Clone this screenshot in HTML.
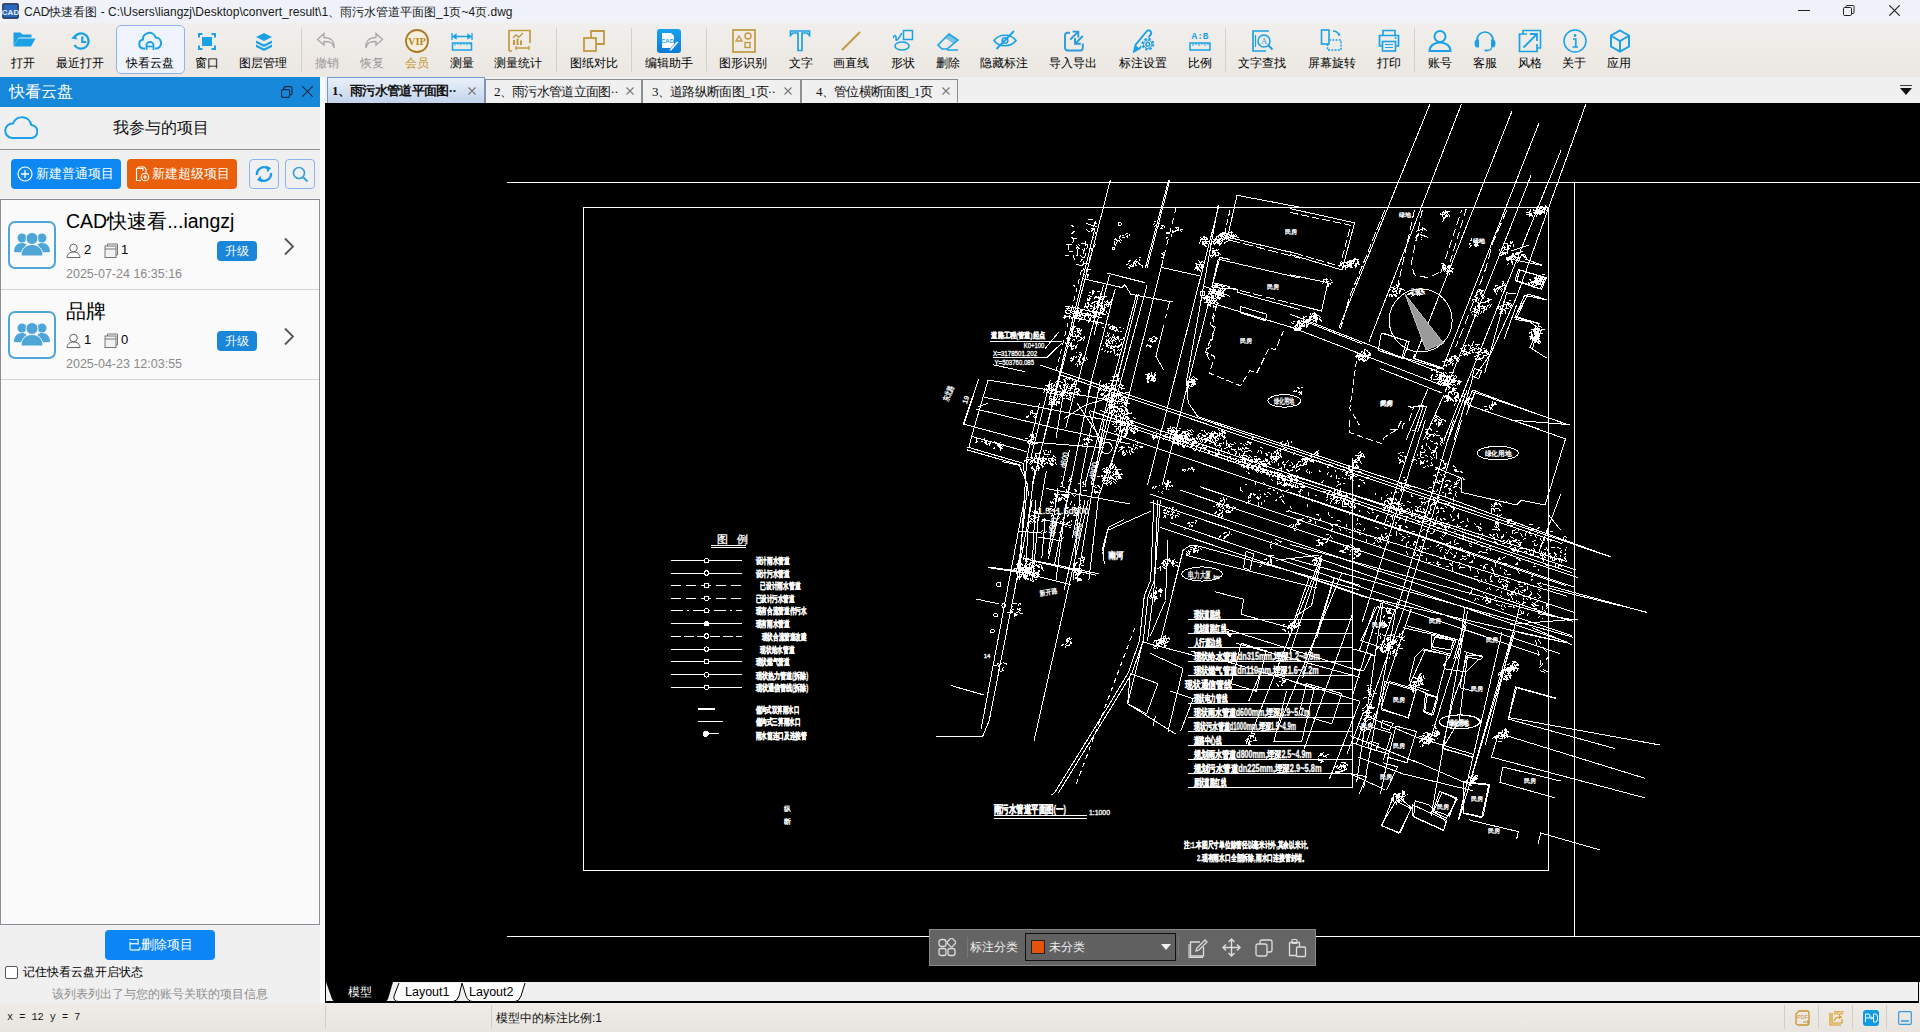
<!DOCTYPE html>
<html><head><meta charset="utf-8"><style>
*{margin:0;padding:0;box-sizing:border-box}
html,body{width:1920px;height:1032px;overflow:hidden;background:#f0f0f0;font-family:"Liberation Sans",sans-serif;color:#000}
.a{position:absolute}
#title{left:0;top:0;width:1920px;height:23px;background:#eff3f9}
#tb{left:0;top:23px;width:1920px;height:54px;background:linear-gradient(#f1efec,#ebe7e2)}
.ic{position:absolute;top:29px;width:24px;height:24px}
.lb{position:absolute;top:56px;width:100px;margin-left:-50px;text-align:center;font-size:12px;line-height:14px;white-space:nowrap;color:#000}
.sep{position:absolute;top:28px;width:1px;height:44px;background:#d3d0cc}
#lp{left:0;top:77px;width:320px;height:926px;background:#f0f0f0}
#lph{left:0;top:77px;width:320px;height:30px;background:#1787d9}
#strip{left:320px;top:77px;width:5px;height:926px;background:#f9f9f9}
#tabs{left:325px;top:77px;width:1595px;height:26px;background:#f0f0f0}
.tab{position:absolute;height:24px;border:1px solid #8e8e8e;border-bottom:none;background:#f0f0f0;font-size:13px;line-height:22px;white-space:nowrap;font-family:"Liberation Serif",serif;color:#111;letter-spacing:-0.7px}
#draw{left:325px;top:103px;width:1595px;height:879px;background:#000;overflow:hidden}
#lay{left:325px;top:982px;width:1595px;height:21px;background:#f0f0f0}
#sb{left:0;top:1003px;width:1920px;height:29px;background:linear-gradient(#efece8,#e8e4df)}
</style></head><body>

<div id="title" class="a">
  <svg class="a" style="left:2px;top:3px" width="17" height="16" viewBox="0 0 17 16"><rect x="0.5" y="0.5" width="16" height="15" rx="1.5" fill="#1d4d96" stroke="#4a4a4a"/><rect x="2" y="2" width="13" height="12" fill="#2b68bd"/><text x="8.5" y="11.5" font-size="8" font-weight="bold" fill="#e8f0ff" text-anchor="middle" font-family="Liberation Sans">CAD</text></svg>
  <div class="a" style="left:24px;top:5px;font-size:12px;line-height:15px;color:#1a1a1a;white-space:nowrap">CAD快速看图 - C:\Users\liangzj\Desktop\convert_result\1、雨污水管道平面图_1页~4页.dwg</div>
  <div class="a" style="left:1798px;top:10px;width:12px;height:1px;background:#222"></div>
  <svg class="a" style="left:1843px;top:5px" width="12" height="11" viewBox="0 0 12 11"><rect x="0.5" y="2.5" width="8" height="8" rx="1.2" fill="none" stroke="#222"/><path d="M3 2.5V1.5a1 1 0 0 1 1-1h6a1 1 0 0 1 1 1v6a1 1 0 0 1-1 1h-1.5" fill="none" stroke="#222"/></svg>
  <svg class="a" style="left:1889px;top:5px" width="11" height="11" viewBox="0 0 11 11"><path d="M0.3 0.3L10.7 10.7M10.7 0.3L0.3 10.7" stroke="#222" stroke-width="1.2"/></svg>
</div>
<div id="tb" class="a"></div>
<div class="a" style="left:116px;top:25px;width:69px;height:49px;border:1px solid #8fb3f2;border-radius:5px;background:#eef3fc"></div>
<div class="sep" style="left:301px"></div>
<div class="sep" style="left:556px"></div>
<div class="sep" style="left:631px"></div>
<div class="sep" style="left:706px"></div>
<div class="sep" style="left:1225px"></div>
<div class="sep" style="left:1414px"></div>
<svg class="ic" style="left:11.7px" viewBox="0 0 24 24"><path d="M1.5 3.5h7l2 2h9v3H6.5L1.5 17Z" fill="#1ba1e6"/><path d="M6 9.5h17.5l-4.5 8H1.5Z" fill="#1ba1e6"/></svg>
<div class="lb" style="left:23.3px;color:#000">打开</div>
<svg class="ic" style="left:68.5px" viewBox="0 0 24 24"><path d="M5.3 8.5A7.6 7.6 0 1 1 5.5 16" fill="none" stroke="#1ba1e6" stroke-width="2.2"/><path d="M2 9.5l4-3.5 2.5 4.5Z" fill="#1ba1e6"/><path d="M13.3 7.5v5.5h4" fill="none" stroke="#1ba1e6" stroke-width="2.2"/></svg>
<div class="lb" style="left:80.3px;color:#000">最近打开</div>
<svg class="ic" style="left:138.0px" viewBox="0 0 24 24"><path d="M7 19.5H5.5a4.5 4.5 0 0 1-.6-8.9A6.5 6.5 0 0 1 17.6 8.4 5.6 5.6 0 0 1 18.5 19.5H17" fill="none" stroke="#1ba1e6" stroke-width="2"/><path d="M8.5 21v-5a3.5 3 0 0 1 7 0v5" fill="none" stroke="#1ba1e6" stroke-width="1.8"/><path d="M8.5 17.5h7" stroke="#1ba1e6" stroke-width="1.6"/></svg>
<div class="lb" style="left:149.5px;color:#000">快看云盘</div>
<svg class="ic" style="left:195.0px" viewBox="0 0 24 24"><path d="M4 8.5V5h3.5M16.5 5H20v3.5M20 16.5V20h-3.5M7.5 20H4v-3.5" fill="none" stroke="#1ba1e6" stroke-width="2"/><rect x="7" y="8" width="10" height="9" fill="#1ba1e6"/></svg>
<div class="lb" style="left:206.8px;color:#000">窗口</div>
<svg class="ic" style="left:252.3px" viewBox="0 0 24 24"><path d="M12 4l8 4-8 4-8-4Z" fill="#1ba1e6"/><path d="M4 11.5l8 4 8-4v2.5l-8 4-8-4Z" fill="#1ba1e6"/><path d="M4 15.5l8 4 8-4V18l-8 4-8-4Z" fill="#1ba1e6"/></svg>
<div class="lb" style="left:263.3px;color:#000">图层管理</div>
<svg class="ic" style="left:314.5px" viewBox="0 0 24 24"><path d="M9 4.5L2.5 10.5 9 16v-3.5c5 0 9 .5 10 6.5 .8-7-3.5-10.5-10-10.5Z" fill="none" stroke="#a9a9a9" stroke-width="1.3"/></svg>
<div class="lb" style="left:326.7px;color:#9a9a9a">撤销</div>
<svg class="ic" style="left:360.5px" viewBox="0 0 24 24"><path d="M15 4.5l6.5 6-6.5 5.5v-3.5c-5 0-9 .5-10 6.5-.8-7 3.5-10.5 10-10.5Z" fill="none" stroke="#a9a9a9" stroke-width="1.3"/></svg>
<div class="lb" style="left:371.7px;color:#9a9a9a">恢复</div>
<svg class="ic" style="left:405.0px" viewBox="0 0 24 24"><circle cx="12" cy="12" r="11" fill="#f6efdc" stroke="#a97a28" stroke-width="1.8"/><text x="12" y="15.8" font-size="10.5" font-weight="bold" fill="#b8862a" text-anchor="middle" font-family="Liberation Serif" textLength="18" lengthAdjust="spacingAndGlyphs">VIP</text></svg>
<div class="lb" style="left:416.7px;color:#c8962e">会员</div>
<svg class="ic" style="left:450.0px" viewBox="0 0 24 24"><path d="M2 4v7M22 4v7M3 7.5h18M3 7.5l3-2v4ZM21 7.5l-3-2v4Z" fill="#1ba1e6" stroke="#1ba1e6" stroke-width="1.3"/><rect x="2.5" y="14" width="19" height="7" fill="none" stroke="#1ba1e6" stroke-width="1.5"/><path d="M5 14v2.5M8 14v2M11 14v2.5M14 14v2M17 14v2.5M20 14v2" stroke="#1ba1e6" stroke-width="1"/></svg>
<div class="lb" style="left:461.5px;color:#000">测量</div>
<svg class="ic" style="left:506.7px" viewBox="0 0 24 24"><path d="M2 22V1.5h21V14M2 22h3" fill="none" stroke="#c29a3e" stroke-width="1.7"/><path d="M6 9l3-3 3 2 4-4" fill="none" stroke="#c29a3e" stroke-width="1.4"/><path d="M6 11h2v5H6ZM9.5 9.5h2V16h-2ZM13 11.5h2V16h-2Z" fill="#c29a3e"/><path d="M9 17v4M22 17v4M9.5 19h12" stroke="#c29a3e" stroke-width="1.3"/></svg>
<div class="lb" style="left:518.3px;color:#000">测量统计</div>
<svg class="ic" style="left:582.0px" viewBox="0 0 24 24"><rect x="2" y="9" width="12" height="13" fill="none" stroke="#c29a3e" stroke-width="1.8"/><path d="M9 9V2h13v13h-8" fill="none" stroke="#c29a3e" stroke-width="1.8"/></svg>
<div class="lb" style="left:593.5px;color:#000">图纸对比</div>
<svg class="ic" style="left:656.7px" viewBox="0 0 24 24"><defs><linearGradient id="eg" x1="0" y1="0" x2="0" y2="1"><stop offset="0" stop-color="#1aa3ef"/><stop offset="1" stop-color="#0b7ad2"/></linearGradient></defs><rect x="0" y="0" width="24" height="24" rx="3" fill="url(#eg)"/><path d="M5 4h9l3 3v12H5Z" fill="#fff"/><text x="10.5" y="14" font-size="6" font-weight="bold" fill="#1ba1e6" text-anchor="middle" font-family="Liberation Sans">CAD</text><path d="M13 20l7-8 1.5 1.5-7 8-2.5 .5Z" fill="#fff" stroke="#0b7ad2" stroke-width=".6"/></svg>
<div class="lb" style="left:668.7px;color:#000">编辑助手</div>
<svg class="ic" style="left:732.0px" viewBox="0 0 24 24"><rect x="1" y="1" width="22" height="22" fill="none" stroke="#c29a3e" stroke-width="1.7"/><path d="M4 12l3-5 3 5Z" fill="none" stroke="#c29a3e" stroke-width="1.4"/><circle cx="16" cy="7" r="3" fill="none" stroke="#c29a3e" stroke-width="1.4"/><rect x="13" y="13.5" width="5" height="5" fill="none" stroke="#c29a3e" stroke-width="1.4"/></svg>
<div class="lb" style="left:743.2px;color:#000">图形识别</div>
<svg class="ic" style="left:789.2px" viewBox="0 0 24 24"><path d="M1.5 2h19v4.5l-2.5-2.5H13V21.5h-4V4H4L1.5 6.5Z" fill="none" stroke="#1ba1e6" stroke-width="1.7"/></svg>
<div class="lb" style="left:800.5px;color:#000">文字</div>
<svg class="ic" style="left:840.2px" viewBox="0 0 24 24"><path d="M2 21L20 3" stroke="#c29a3e" stroke-width="2"/></svg>
<div class="lb" style="left:851.3px;color:#000">画直线</div>
<svg class="ic" style="left:891.0px" viewBox="0 0 24 24"><path d="M2.5 9c0-3 2-3 2.5-1s-1 4 1 3 4-6 5-7" fill="none" stroke="#1ba1e6" stroke-width="1.5"/><rect x="12.5" y="1.5" width="9" height="9" fill="none" stroke="#1ba1e6" stroke-width="1.5"/><ellipse cx="11" cy="17" rx="7" ry="4" fill="none" stroke="#1ba1e6" stroke-width="1.6"/></svg>
<div class="lb" style="left:902.5px;color:#000">形状</div>
<svg class="ic" style="left:936.2px" viewBox="0 0 24 24"><path d="M2 16l11-11 9 6-11 9H6Z" fill="none" stroke="#1ba1e6" stroke-width="1.6"/><path d="M13 5l9 6-4 4-9-6Z" fill="#1ba1e6" opacity=".55"/><path d="M11 21h11" stroke="#1ba1e6" stroke-width="1.5"/></svg>
<div class="lb" style="left:947.5px;color:#000">删除</div>
<svg class="ic" style="left:993.0px" viewBox="0 0 24 24"><path d="M1 11.5c5-7 17-7 22 0-5 7-17 7-22 0Z" fill="none" stroke="#1ba1e6" stroke-width="1.7"/><circle cx="12" cy="11.5" r="2.8" fill="none" stroke="#1ba1e6" stroke-width="1.6"/><path d="M3.5 20L21 2" stroke="#1ba1e6" stroke-width="1.8"/></svg>
<div class="lb" style="left:1004.3px;color:#000">隐藏标注</div>
<svg class="ic" style="left:1062.0px" viewBox="0 0 24 24"><path d="M8 3.8H5.5A2.5 2.5 0 0 0 3 6.3V19a2.5 2.5 0 0 0 2.5 2.5h12.8a2.5 2.5 0 0 0 2.5-2.5v-4.5" fill="none" stroke="#2b9bd9" stroke-width="1.9"/><path d="M8.3 10.5L16 2.8M10.5 2.6h5.8v5.8M20.8 7L13 14.8M13 9v5.8h5.8" fill="none" stroke="#2b9bd9" stroke-width="1.9"/></svg>
<div class="lb" style="left:1073.3px;color:#000">导入导出</div>
<svg class="ic" style="left:1131.5px" viewBox="0 0 24 24"><path d="M2 22.5L3.5 16 14.5 2.5a2.6 2.6 0 0 1 4.2 3.2L7.5 19.5Z" fill="none" stroke="#1ba1e6" stroke-width="1.9"/><path d="M2 22.5L3.5 16 7.5 19.5Z" fill="#1ba1e6"/><circle cx="15.8" cy="15.2" r="7" fill="#ece8e3"/><circle cx="15.8" cy="15.2" r="5.2" fill="none" stroke="#1ba1e6" stroke-width="2.4" stroke-dasharray="2.2 1.9"/><circle cx="15.8" cy="15.2" r="4.2" fill="none" stroke="#1ba1e6" stroke-width="1"/><circle cx="15.8" cy="15.2" r="1.9" fill="none" stroke="#1ba1e6" stroke-width="1.4"/></svg>
<div class="lb" style="left:1143.0px;color:#000">标注设置</div>
<svg class="ic" style="left:1188.0px" viewBox="0 0 24 24"><text x="12" y="10" font-size="9.5" font-weight="bold" fill="#1ba1e6" text-anchor="middle" font-family="Liberation Mono">A:B</text><rect x="2" y="14" width="20" height="7" fill="none" stroke="#1ba1e6" stroke-width="1.5"/><path d="M5 14v3M8 14v2M11 14v3M14 14v2M17 14v3M20 14v2" stroke="#1ba1e6" stroke-width="1"/></svg>
<div class="lb" style="left:1200.0px;color:#000">比例</div>
<svg class="ic" style="left:1251.0px" viewBox="0 0 24 24"><path d="M18 2H2v20h13" fill="none" stroke="#1ba1e6" stroke-width="1.7"/><path d="M4.5 6v12" stroke="#1ba1e6" stroke-width="1.2"/><circle cx="13" cy="12" r="6" fill="none" stroke="#1ba1e6" stroke-width="1.6"/><path d="M17 16l4.5 4.5" stroke="#1ba1e6" stroke-width="2"/><text x="13" y="15" font-size="8.5" fill="#1ba1e6" text-anchor="middle" font-family="Liberation Serif">A</text></svg>
<div class="lb" style="left:1262.3px;color:#000">文字查找</div>
<svg class="ic" style="left:1320.0px" viewBox="0 0 24 24"><rect x="1.5" y="1" width="7.5" height="14" fill="none" stroke="#1ba1e6" stroke-width="1.6"/><path d="M9 11h12v10H7.5v-6" fill="none" stroke="#1ba1e6" stroke-width="1.5" stroke-dasharray="2 1.3"/><path d="M13 2c3 0 5 1.5 6 4" fill="none" stroke="#1ba1e6" stroke-width="1.3"/><path d="M17.5 6.5h3l-1-3Z" fill="#1ba1e6"/></svg>
<div class="lb" style="left:1331.5px;color:#000">屏幕旋转</div>
<svg class="ic" style="left:1377.0px" viewBox="0 0 24 24"><path d="M6 6V1.5h12V6" fill="none" stroke="#1ba1e6" stroke-width="1.6"/><path d="M5.5 17H2.5V6.5h19V17h-3" fill="none" stroke="#1ba1e6" stroke-width="1.7"/><rect x="5.5" y="12.5" width="13" height="9.5" fill="none" stroke="#1ba1e6" stroke-width="1.6"/><path d="M8 15.5h8M8 18.5h8" stroke="#1ba1e6" stroke-width="1.2"/><circle cx="18.5" cy="9" r=".9" fill="#1ba1e6"/></svg>
<div class="lb" style="left:1388.7px;color:#000">打印</div>
<svg class="ic" style="left:1428.0px" viewBox="0 0 24 24"><circle cx="12" cy="7.5" r="5.5" fill="none" stroke="#1ba1e6" stroke-width="2"/><path d="M1.5 22c0-5 4.5-8.5 10.5-8.5s10.5 3.5 10.5 8.5Z" fill="none" stroke="#1ba1e6" stroke-width="2"/></svg>
<div class="lb" style="left:1439.5px;color:#000">账号</div>
<svg class="ic" style="left:1473.0px" viewBox="0 0 24 24"><path d="M4 14v-3a8 8 0 0 1 16 0v3" fill="none" stroke="#1ba1e6" stroke-width="1.7"/><path d="M4.5 10.5h1.5v8H4.5A3 4 0 0 1 4.5 10.5ZM19.5 10.5H18v8h1.5a3 4 0 0 0 0-8Z" fill="#1ba1e6"/><path d="M18.5 18.5c0 2-2 3-5 3" fill="none" stroke="#1ba1e6" stroke-width="1.3"/><rect x="11.5" y="20.5" width="3" height="2" rx=".8" fill="#1ba1e6"/></svg>
<div class="lb" style="left:1484.7px;color:#000">客服</div>
<svg class="ic" style="left:1518.0px" viewBox="0 0 24 24"><path d="M5 5V1.5h17.5V19H19" fill="none" stroke="#1ba1e6" stroke-width="1.6"/><path d="M9 5H1.5v17.5H19V15" fill="none" stroke="#1ba1e6" stroke-width="1.7"/><path d="M5.5 18.5L18.5 5.5M12 5h7v7" fill="none" stroke="#1ba1e6" stroke-width="1.8"/></svg>
<div class="lb" style="left:1529.7px;color:#000">风格</div>
<svg class="ic" style="left:1563.0px" viewBox="0 0 24 24"><circle cx="12" cy="12" r="11" fill="none" stroke="#1ba1e6" stroke-width="1.5"/><circle cx="12" cy="6.5" r="1.4" fill="#1ba1e6"/><path d="M10 10h2.8v8M9.5 18h5.5" fill="none" stroke="#1ba1e6" stroke-width="1.7"/></svg>
<div class="lb" style="left:1574.3px;color:#000">关于</div>
<svg class="ic" style="left:1608.0px" viewBox="0 0 24 24"><path d="M12 1.5l9 5v11l-9 5-9-5v-11Z" fill="none" stroke="#1ba1e6" stroke-width="2"/><path d="M3.5 7L12 12l8.5-5M12 12v10" fill="none" stroke="#1ba1e6" stroke-width="2"/></svg>
<div class="lb" style="left:1619.3px;color:#000">应用</div>
<div id="lp" class="a"></div>
<div id="lph" class="a">
  <div class="a" style="left:9px;top:5px;font-size:16px;line-height:20px;color:#fff;white-space:nowrap">快看云盘</div>
  <svg class="a" style="left:281px;top:9px" width="12" height="12" viewBox="0 0 12 12"><rect x="0.6" y="3.6" width="8" height="7.8" rx="1.2" fill="none" stroke="#0c2b47" stroke-width="1.1"/><path d="M3 3.5V1.8a1.2 1.2 0 0 1 1.2-1.2h5.6a1.2 1.2 0 0 1 1.2 1.2v5.6a1.2 1.2 0 0 1-1.2 1.2h-1.2" fill="none" stroke="#0c2b47" stroke-width="1.1"/></svg>
  <svg class="a" style="left:302px;top:9px" width="11" height="11" viewBox="0 0 11 11"><path d="M0.3 0.3L10.7 10.7M10.7 0.3L0.3 10.7" stroke="#0c2b47" stroke-width="1.1"/></svg>
</div>
<svg class="a" style="left:4px;top:114px" width="34" height="26" viewBox="0 0 34 26"><path d="M8 24h18.5a6.5 6.5 0 0 0 .8-13A9.5 9.5 0 0 0 9 9.5 7.2 7.2 0 0 0 8 24Z" fill="none" stroke="#1ba1e6" stroke-width="2"/></svg>
<div class="a" style="left:0;top:118px;width:322px;text-align:center;font-size:16px;line-height:20px;color:#111;white-space:nowrap">我参与的项目</div>
<div class="a" style="left:0;top:149px;width:320px;height:1px;background:#8f8f8f"></div>
<div class="a" style="left:11px;top:159px;width:110px;height:30px;border-radius:4px;background:#0d87f2"></div>
<svg class="a" style="left:17px;top:166px" width="16" height="16" viewBox="0 0 16 16"><circle cx="8" cy="8" r="7" fill="none" stroke="#fff" stroke-width="1.2"/><path d="M8 4v8M4 8h8" stroke="#fff" stroke-width="1.3"/></svg>
<div class="a" style="left:36px;top:166px;font-size:13px;line-height:16px;color:#fff;white-space:nowrap">新建普通项目</div>
<div class="a" style="left:127px;top:159px;width:110px;height:30px;border-radius:4px;background:#e95f0b"></div>
<svg class="a" style="left:134px;top:165px" width="16" height="17" viewBox="0 0 16 17"><path d="M4 2h6l2 2v4M4 2v1M2.5 3.5H9V6M2.5 3.5V15.5H7" fill="none" stroke="#fff" stroke-width="1.1"/><circle cx="11" cy="12" r="3.8" fill="#e95f0b" stroke="#fff" stroke-width="1.1"/><path d="M11 9.8v4.4M8.8 12h4.4" stroke="#fff" stroke-width="1.1"/></svg>
<div class="a" style="left:152px;top:166px;font-size:13px;line-height:16px;color:#fff;white-space:nowrap">新建超级项目</div>
<div class="a" style="left:249px;top:159px;width:30px;height:30px;border-radius:4px;border:1px solid #8db2f0;background:#f0f0f0"></div>
<svg class="a" style="left:254px;top:164px" width="20" height="20" viewBox="0 0 20 20"><path d="M3 11A7 7 0 0 1 14 4.5" fill="none" stroke="#1b9be6" stroke-width="2.4"/><path d="M12 1.5l5 2.5-3.5 4.5Z" fill="#1b9be6"/><path d="M17 9A7 7 0 0 1 6 15.5" fill="none" stroke="#1b9be6" stroke-width="2.4"/><path d="M8 18.5l-5-2.5 3.5-4.5Z" fill="#1b9be6"/></svg>
<div class="a" style="left:285px;top:159px;width:30px;height:30px;border-radius:4px;border:1px solid #8db2f0;background:#f0f0f0"></div>
<svg class="a" style="left:291px;top:165px" width="18" height="18" viewBox="0 0 18 18"><circle cx="8" cy="8" r="5.5" fill="none" stroke="#3aa0d8" stroke-width="1.6"/><path d="M12 12l4.5 4.5" stroke="#3aa0d8" stroke-width="1.8"/></svg>
<div class="a" style="left:0;top:199px;width:320px;height:726px;border:1px solid #8a8e96;background:#fafafa"></div>
<svg class="a" style="left:8px;top:221px" width="48" height="48" viewBox="0 0 48 48">
<rect x="1" y="1" width="46" height="46" rx="6" fill="#fafafa" stroke="#4ea6d8" stroke-width="2"/>
<circle cx="14" cy="17" r="4.5" fill="#4ea6d8"/><circle cx="34" cy="17" r="4.5" fill="#4ea6d8"/>
<path d="M6 31c0-6 3.5-9 8-9 2 0 3.5.6 4.5 1.5-2 2-3 5-3 8Z" fill="#4ea6d8"/>
<path d="M42 31c0-6-3.5-9-8-9-2 0-3.5.6-4.5 1.5 2 2 3 5 3 8Z" fill="#4ea6d8"/>
<circle cx="24" cy="17.5" r="6" fill="#4ea6d8" stroke="#fafafa" stroke-width="1"/>
<path d="M13 35c0-7 4.5-11.5 11-11.5s11 4.5 11 11.5Z" fill="#4ea6d8" stroke="#fafafa" stroke-width="1"/>
</svg>
<div class="a" style="left:66px;top:209px;font-size:19.5px;line-height:24px;white-space:nowrap;color:#000">CAD快速看...iangzj</div>
<svg class="a" style="left:66px;top:243px" width="16" height="15" viewBox="0 0 16 15"><circle cx="7.5" cy="5" r="3.8" fill="none" stroke="#666" stroke-width="1"/><path d="M1 14.5c0-3.5 3-5.5 6.5-5.5s6.5 2 6.5 5.5Z" fill="none" stroke="#666" stroke-width="1"/></svg>
<div class="a" style="left:84px;top:242px;font-size:13px;line-height:16px">2</div>
<svg class="a" style="left:104px;top:243px" width="15" height="15" viewBox="0 0 15 15"><path d="M3.5 3V1h10v11h-2" fill="none" stroke="#777" stroke-width="1"/><rect x="1" y="3" width="11" height="11.5" fill="#f2f2f2" stroke="#777" stroke-width="1"/><path d="M1 6h11" stroke="#777"/></svg>
<div class="a" style="left:121px;top:242px;font-size:13px;line-height:16px">1</div>
<div class="a" style="left:217px;top:241px;width:40px;height:20px;border-radius:4px;background:#1a86d9;color:#fff;font-size:12px;line-height:20px;text-align:center">升级</div>
<svg class="a" style="left:283px;top:237px" width="12" height="19" viewBox="0 0 12 19"><path d="M2 1.5l8 8-8 8" fill="none" stroke="#555" stroke-width="1.8"/></svg>
<div class="a" style="left:66px;top:267px;font-size:12.5px;line-height:15px;color:#8a8a8a;white-space:nowrap">2025-07-24 16:35:16</div>
<div class="a" style="left:1px;top:289px;width:318px;height:1px;background:#d4d4d4"></div>
<svg class="a" style="left:8px;top:311px" width="48" height="48" viewBox="0 0 48 48">
<rect x="1" y="1" width="46" height="46" rx="6" fill="#fafafa" stroke="#4ea6d8" stroke-width="2"/>
<circle cx="14" cy="17" r="4.5" fill="#4ea6d8"/><circle cx="34" cy="17" r="4.5" fill="#4ea6d8"/>
<path d="M6 31c0-6 3.5-9 8-9 2 0 3.5.6 4.5 1.5-2 2-3 5-3 8Z" fill="#4ea6d8"/>
<path d="M42 31c0-6-3.5-9-8-9-2 0-3.5.6-4.5 1.5 2 2 3 5 3 8Z" fill="#4ea6d8"/>
<circle cx="24" cy="17.5" r="6" fill="#4ea6d8" stroke="#fafafa" stroke-width="1"/>
<path d="M13 35c0-7 4.5-11.5 11-11.5s11 4.5 11 11.5Z" fill="#4ea6d8" stroke="#fafafa" stroke-width="1"/>
</svg>
<div class="a" style="left:66px;top:299px;font-size:20px;line-height:24px;white-space:nowrap;color:#000">品牌</div>
<svg class="a" style="left:66px;top:333px" width="16" height="15" viewBox="0 0 16 15"><circle cx="7.5" cy="5" r="3.8" fill="none" stroke="#666" stroke-width="1"/><path d="M1 14.5c0-3.5 3-5.5 6.5-5.5s6.5 2 6.5 5.5Z" fill="none" stroke="#666" stroke-width="1"/></svg>
<div class="a" style="left:84px;top:332px;font-size:13px;line-height:16px">1</div>
<svg class="a" style="left:104px;top:333px" width="15" height="15" viewBox="0 0 15 15"><path d="M3.5 3V1h10v11h-2" fill="none" stroke="#777" stroke-width="1"/><rect x="1" y="3" width="11" height="11.5" fill="#f2f2f2" stroke="#777" stroke-width="1"/><path d="M1 6h11" stroke="#777"/></svg>
<div class="a" style="left:121px;top:332px;font-size:13px;line-height:16px">0</div>
<div class="a" style="left:217px;top:331px;width:40px;height:20px;border-radius:4px;background:#1a86d9;color:#fff;font-size:12px;line-height:20px;text-align:center">升级</div>
<svg class="a" style="left:283px;top:327px" width="12" height="19" viewBox="0 0 12 19"><path d="M2 1.5l8 8-8 8" fill="none" stroke="#555" stroke-width="1.8"/></svg>
<div class="a" style="left:66px;top:357px;font-size:12.5px;line-height:15px;color:#8a8a8a;white-space:nowrap">2025-04-23 12:03:55</div>
<div class="a" style="left:1px;top:379px;width:318px;height:1px;background:#d4d4d4"></div>
<div class="a" style="left:105px;top:930px;width:110px;height:30px;border-radius:4px;background:#0b86f4;color:#fff;font-size:13px;line-height:30px;text-align:center">已删除项目</div>
<div class="a" style="left:5px;top:966px;width:13px;height:13px;border:1px solid #555;border-radius:2px;background:#fff"></div>
<div class="a" style="left:23px;top:965px;font-size:12px;line-height:15px;white-space:nowrap">记住快看云盘开启状态</div>
<div class="a" style="left:0;top:987px;width:320px;text-align:center;font-size:12px;line-height:15px;color:#8f8f8f;white-space:nowrap">该列表列出了与您的账号关联的项目信息</div>
<div id="strip" class="a"></div>
<div id="tabs" class="a"></div>
<div class="tab" style="left:327px;top:77px;width:158px;height:26px;border-color:#6e9bd6;background:linear-gradient(#eaf0f9,#c3d4ec);font-weight:bold"><span class="a" style="left:4px;top:2px">1、雨污水管道平面图··</span></div>
<svg class="a" style="left:468px;top:87px" width="8" height="8" viewBox="0 0 8 8"><path d="M.5 .5l7 7M7.5 .5l-7 7" stroke="#777" stroke-width="1.1"/></svg>
<div class="tab" style="left:485px;top:79px;width:157px;height:24px"><span class="a" style="left:8px;top:1px">2、雨污水管道立面图··</span></div>
<svg class="a" style="left:626px;top:87px" width="8" height="8" viewBox="0 0 8 8"><path d="M.5 .5l7 7M7.5 .5l-7 7" stroke="#777" stroke-width="1.1"/></svg>
<div class="tab" style="left:642px;top:79px;width:159px;height:24px"><span class="a" style="left:9px;top:1px">3、道路纵断面图_1页··</span></div>
<svg class="a" style="left:784px;top:87px" width="8" height="8" viewBox="0 0 8 8"><path d="M.5 .5l7 7M7.5 .5l-7 7" stroke="#777" stroke-width="1.1"/></svg>
<div class="tab" style="left:801px;top:79px;width:157px;height:24px"><span class="a" style="left:14px;top:1px">4、管位横断面图_1页</span></div>
<svg class="a" style="left:942px;top:87px" width="8" height="8" viewBox="0 0 8 8"><path d="M.5 .5l7 7M7.5 .5l-7 7" stroke="#777" stroke-width="1.1"/></svg>
<svg class="a" style="left:1900px;top:85px" width="12" height="10" viewBox="0 0 12 10"><path d="M0 0h12" stroke="#111" stroke-width="1.6"/><path d="M0 3h12L6 10Z" fill="#111"/></svg>
<div id="draw" class="a"><svg class="a" style="left:-325px;top:-103px" width="1920" height="1032" viewBox="0 0 1920 1032" fill="none" stroke="#fff" stroke-width="1" font-family="Liberation Sans" shape-rendering="crispEdges"><style>#draw text{fill:#fff;stroke:#fff;stroke-width:0.3}</style><g><path d="M507.0 182.5 L1920.0 182.5"/>
<path d="M507.0 936.5 L1920.0 936.5"/>
<path d="M1574.5 182.0 L1574.5 936.0"/>
<path d="M583.5 207.5 L1548.5 207.5 L1548.5 870.5 L583.5 870.5 Z"/>
<text x="716.7" y="542.9" font-size="11">图&#160;&#160;&#160;例</text>
<path d="M710.5 545.1 L746.2 545.1"/>
<path d="M710.5 547.6 L746.2 547.6"/>
<path d="M671.1 560.6 L742.2 560.6"/>
<circle cx="706.5" cy="560.6" r="2.2" fill="#000"/>
<text x="755.5" y="564.3" font-size="9" font-weight="bold" textLength="34.1" lengthAdjust="spacingAndGlyphs">设计雨水管道</text>
<path d="M671.1 573.0 L742.2 573.0"/>
<circle cx="706.5" cy="573.0" r="2.2" fill="#000"/>
<text x="755.5" y="576.8" font-size="9" font-weight="bold" textLength="34.1" lengthAdjust="spacingAndGlyphs">设计污水管道</text>
<path d="M671.1 585.5 L742.2 585.5" stroke-dasharray="10 5"/>
<circle cx="706.5" cy="585.5" r="2.2" fill="#000"/>
<text x="760.2" y="589.2" font-size="9" font-weight="bold" textLength="40.3" lengthAdjust="spacingAndGlyphs">已设计雨水管道</text>
<path d="M671.1 598.2 L742.2 598.2" stroke-dasharray="10 5"/>
<circle cx="706.5" cy="598.2" r="2.2" fill="#000"/>
<text x="755.5" y="601.9" font-size="9" font-weight="bold" textLength="38.8" lengthAdjust="spacingAndGlyphs">已设计污水管道</text>
<path d="M671.1 610.6 L742.2 610.6" stroke-dasharray="12 4 1.5 4"/>
<circle cx="706.5" cy="610.6" r="2.2" fill="#000"/>
<text x="755.5" y="614.3" font-size="9" font-weight="bold" textLength="51.2" lengthAdjust="spacingAndGlyphs">现有合流管道作污水</text>
<path d="M671.1 623.6 L742.2 623.6"/>
<circle cx="706.5" cy="623.6" r="2.2" fill="#fff"/>
<text x="755.5" y="627.4" font-size="9" font-weight="bold" textLength="34.1" lengthAdjust="spacingAndGlyphs">现有雨水管道</text>
<path d="M671.1 636.0 L742.2 636.0" stroke-dasharray="10 3"/>
<circle cx="706.5" cy="636.0" r="2.2" fill="#000"/>
<text x="761.7" y="639.8" font-size="9" font-weight="bold" textLength="45.0" lengthAdjust="spacingAndGlyphs">现状合流管道改建</text>
<path d="M671.1 649.1 L742.2 649.1"/>
<circle cx="706.5" cy="649.1" r="2.2" fill="#000"/>
<text x="760.2" y="652.8" font-size="9" font-weight="bold" textLength="34.1" lengthAdjust="spacingAndGlyphs">现状给水管道</text>
<path d="M671.1 661.5 L742.2 661.5"/>
<circle cx="706.5" cy="661.5" r="2.2" fill="#000"/>
<text x="755.5" y="665.2" font-size="9" font-weight="bold" textLength="34.1" lengthAdjust="spacingAndGlyphs">现状燃气管道</text>
<path d="M671.1 674.8 L742.2 674.8"/>
<circle cx="706.5" cy="674.8" r="2.2" fill="#000"/>
<text x="755.5" y="678.6" font-size="9" font-weight="bold" textLength="52.8" lengthAdjust="spacingAndGlyphs">现状热力管道(拆除)</text>
<path d="M671.1 687.3 L742.2 687.3"/>
<circle cx="706.5" cy="687.3" r="2.2" fill="#000"/>
<text x="755.5" y="691.0" font-size="9" font-weight="bold" textLength="52.8" lengthAdjust="spacingAndGlyphs">现状通信管线(拆除)</text>
<path d="M698.1 709.0 L715.2 709.0" stroke-width="1.5"/>
<path d="M698.1 721.4 L722.9 721.4" stroke-width="1.5"/>
<circle cx="705.9" cy="733.8" r="2.5" fill="#fff"/>
<path d="M705.9 733.8 L718.9 733.8"/>
<text x="755.5" y="712.7" font-size="9" font-weight="bold" textLength="43.5" lengthAdjust="spacingAndGlyphs">偏沟式双箅雨水口</text>
<text x="755.5" y="725.1" font-size="9" font-weight="bold" textLength="45.0" lengthAdjust="spacingAndGlyphs">偏沟式三箅雨水口</text>
<text x="755.5" y="738.5" font-size="9" font-weight="bold" textLength="51.2" lengthAdjust="spacingAndGlyphs">雨水篦连口及连接管</text>
<text x="784.4" y="811.4" font-size="7">纵</text>
<text x="784.4" y="823.8" font-size="7">断</text>
<text x="994.0" y="813.0" font-size="11" font-weight="bold" textLength="72.0" lengthAdjust="spacingAndGlyphs">雨污水管道平面图(一)</text>
<path d="M994.0 815.5 L1087.0 815.5"/>
<path d="M994.0 818.5 L1087.0 818.5"/>
<text x="1089.0" y="815.0" font-size="7" textLength="21.0" lengthAdjust="spacingAndGlyphs">1:1000</text>
<text x="1184.0" y="848.0" font-size="9" font-weight="bold" textLength="128.0" lengthAdjust="spacingAndGlyphs">注:1.本图尺寸单位除管径以毫米计外,其余以米计。</text>
<text x="1197.0" y="861.0" font-size="9" font-weight="bold" textLength="111.0" lengthAdjust="spacingAndGlyphs">2.现有雨水口全部拆除,雨水口连接管封堵。</text>
<path d="M1187.9 619.4 L1352.4 619.4"/>
<text x="1193.6" y="617.7" font-size="10" font-weight="bold" textLength="26.7" lengthAdjust="spacingAndGlyphs">现状道路线</text>
<path d="M1187.9 633.4 L1352.4 633.4"/>
<text x="1193.6" y="631.7" font-size="10" font-weight="bold" textLength="32.3" lengthAdjust="spacingAndGlyphs">规划道路红线</text>
<path d="M1187.9 647.5 L1352.4 647.5"/>
<text x="1193.6" y="645.8" font-size="10" font-weight="bold" textLength="28.1" lengthAdjust="spacingAndGlyphs">人行道边线</text>
<path d="M1187.9 661.5 L1352.4 661.5"/>
<text x="1193.6" y="659.8" font-size="10" font-weight="bold" textLength="126.5" lengthAdjust="spacingAndGlyphs">现状给水管道dn315mm,埋深1.2~4.9m</text>
<path d="M1187.9 675.6 L1352.4 675.6"/>
<text x="1193.6" y="673.9" font-size="10" font-weight="bold" textLength="125.1" lengthAdjust="spacingAndGlyphs">现状燃气管道dn110mm,埋深1.6~2.2m</text>
<path d="M1187.9 689.6 L1352.4 689.6"/>
<text x="1185.1" y="687.9" font-size="10" font-weight="bold" textLength="46.4" lengthAdjust="spacingAndGlyphs">现状通信管线</text>
<path d="M1187.9 703.7 L1352.4 703.7"/>
<text x="1193.6" y="702.0" font-size="10" font-weight="bold" textLength="33.7" lengthAdjust="spacingAndGlyphs">现状电力管线</text>
<path d="M1187.9 717.7 L1352.4 717.7"/>
<text x="1193.6" y="716.0" font-size="10" font-weight="bold" textLength="116.6" lengthAdjust="spacingAndGlyphs">现状雨水管道d600mm,埋深2.9~5.7m</text>
<path d="M1187.9 731.8 L1352.4 731.8"/>
<text x="1193.6" y="730.1" font-size="10" font-weight="bold" textLength="102.6" lengthAdjust="spacingAndGlyphs">现状污水管道d1000mm,埋深1.5~4.9m</text>
<path d="M1187.9 745.8 L1352.4 745.8"/>
<text x="1193.6" y="744.2" font-size="10" font-weight="bold" textLength="28.1" lengthAdjust="spacingAndGlyphs">道路中心线</text>
<path d="M1187.9 759.9 L1352.4 759.9"/>
<text x="1193.6" y="758.2" font-size="10" font-weight="bold" textLength="118.1" lengthAdjust="spacingAndGlyphs">规划雨水管道d800mm,埋深2.5~4.9m</text>
<path d="M1187.9 773.9 L1352.4 773.9"/>
<text x="1193.6" y="772.3" font-size="10" font-weight="bold" textLength="127.9" lengthAdjust="spacingAndGlyphs">规划污水管道dn225mm,埋深2.9~5.8m</text>
<path d="M1187.9 787.4 L1352.4 787.4"/>
<text x="1193.6" y="785.8" font-size="10" font-weight="bold" textLength="32.3" lengthAdjust="spacingAndGlyphs">原状道路红线</text>
<path d="M1352.4 787.4 L1352.4 577.2"/>
<path d="M1352.5 458.0 L1352.5 788.0"/>
<path d="M1218.1 205.7 L1186.6 380.4 L1188.2 402.5 L1197.7 416.6 L1300.0 449.7"/>
<path d="M1237.0 195.3 L1300.0 207.2"/>
<path d="M1237.0 195.3 L1227.6 237.1"/>
<path d="M1227.6 237.1 L1300.0 254.5"/>
<path d="M1230.7 240.3 L1300.0 258.2" stroke-dasharray="10 3"/>
<path d="M1218.1 259.2 L1300.0 278.1"/>
<path d="M1218.1 259.2 L1211.8 287.5"/>
<path d="M1211.8 287.5 L1237.0 289.1 L1237.0 292.3 L1300.0 309.6"/>
<path d="M1215.0 284.4 L1300.0 305.5" stroke-dasharray="10 3"/>
<path d="M1240.2 306.4 L1266.9 314.3 L1265.4 320.6 L1240.2 312.7 Z"/>
<path d="M1207.1 301.7 L1300.0 330.0"/>
<ellipse cx="1284.3" cy="400.9" rx="16.4" ry="6.3"/>
<text x="1273.9" y="404.0" font-size="8" textLength="20.5" lengthAdjust="spacingAndGlyphs">绿化用地</text>
<path d="M989.8 341.1 L1062.3 341.1"/>
<path d="M993.0 357.8 L1046.5 357.8"/>
<text x="991.4" y="337.9" font-size="8" font-weight="bold" textLength="53.5" lengthAdjust="spacingAndGlyphs">道路工程(管道)起点</text>
<text x="1023.8" y="348.3" font-size="7" textLength="20.5" lengthAdjust="spacingAndGlyphs">K0+100</text>
<text x="993.0" y="355.9" font-size="7" textLength="44.1" lengthAdjust="spacingAndGlyphs">X=3178501.202</text>
<text x="994.6" y="364.7" font-size="7" textLength="39.4" lengthAdjust="spacingAndGlyphs">Y=503760.085</text>
<path d="M1046.5 357.8 L1062.3 342.6"/>
<path d="M1044.9 348.9 L1059.1 331.6"/>
<path d="M1177.9 430.1l-0.8 1.5M1183.8 435.6l3.0 0.5M1167.0 430.6l1.7 0.4M1177.8 440.8l2.0 0.8M1183.8 444.9l-0.6 2.6M1199.9 436.4l-2.1 1.0M1172.2 427.5l2.2 3.3M1171.0 434.4l-1.1 2.4M1185.7 431.5l2.1 0.4M1188.2 438.2l1.8 2.7M1181.4 433.7l-2.9 2.2M1173.1 435.1l-0.3 4.1M1190.5 436.9l-1.9 0.1M1177.9 439.7l2.6 1.4M1165.9 434.0l-2.4 2.2M1195.2 439.0l-1.9 2.7M1184.8 437.4l-3.8 2.1M1180.2 439.1l3.5 0.7M1184.2 445.8l-2.0 1.2M1177.3 438.1l2.9 0.2M1173.0 427.7l3.7 0.7M1171.0 429.1l1.4 3.9M1168.4 431.4l-0.6 4.1M1190.5 446.1l1.8 2.1M1175.3 440.8l-1.9 0.3M1172.6 429.5l2.2 2.0M1186.1 434.8l2.8 0.0M1177.3 436.5l-3.5 0.5M1181.8 438.9l-0.9 1.4M1193.6 445.8l-3.6 1.5M1178.9 434.4l3.2 1.1M1169.7 425.8l1.6 1.2M1178.9 428.9l2.0 0.0M1169.5 430.4l4.1 0.3M1187.5 433.5l1.8 1.8M1179.4 430.2l-4.0 2.0M1180.9 436.5l1.7 0.5M1177.9 431.9l-1.7 1.0M1163.9 437.8l-0.2 1.9M1185.8 431.0l-0.4 4.4M1192.9 444.2l1.8 1.9M1169.6 437.0l-0.4 3.8M1177.7 431.2l-3.7 2.5M1191.9 445.6l-3.1 2.0M1172.8 434.1l0.7 1.4M1167.5 428.3l2.5 2.6M1197.2 441.8l-4.4 0.9M1197.6 440.6l1.7 1.4M1173.5 429.3l-1.6 3.9M1193.2 440.9l-1.8 3.5M1167.4 434.4l-3.7 1.1M1190.3 439.8l3.3 2.1M1174.9 439.3l-2.7 0.2M1176.4 442.2l-1.3 1.5M1171.4 427.7l-3.7 1.2M1168.6 437.5l-3.5 0.2M1176.7 436.0l1.4 0.6M1196.6 444.9l-0.4 4.3M1177.8 441.6l-1.8 1.1M1174.8 431.2l2.4 2.2M1174.4 433.1l3.9 1.7M1177.3 434.8l-1.1 4.1M1177.2 442.0l-0.0 3.1M1185.2 430.6l0.4 2.0M1164.1 435.4l2.5 1.5M1189.0 440.6l1.6 2.6M1182.3 441.8l3.0 1.0M1174.8 430.9l-2.3 2.0M1182.6 441.5l-2.7 0.8M1185.6 438.5l-0.1 3.6M1180.2 437.0l0.3 4.3M1186.5 444.8l-2.2 0.4M1181.6 444.1l-1.7 0.9M1169.8 431.8l2.2 0.5M1167.0 434.4l-3.3 2.6M1169.4 436.0l-0.9 1.7M1192.1 448.3l3.4 2.8M1178.6 435.7l-4.0 0.1M1171.1 432.1l-0.1 2.5M1172.8 430.9l-1.0 1.2"/>
<path d="M1254.0 456.9l2.5 0.1M1260.8 460.9l4.4 0.9M1274.6 475.7l2.2 0.7M1198.5 443.9l1.2 1.4M1237.2 460.8l-1.9 1.2M1208.9 450.7l-0.8 3.5M1208.6 432.2l-1.5 2.3M1200.8 448.1l-1.6 3.6M1202.6 447.0l4.0 0.8M1244.4 451.2l-0.7 4.2M1226.6 440.3l-0.2 2.2M1210.0 434.9l2.1 0.3M1229.9 445.3l-1.7 1.6M1250.3 449.9l0.7 1.4M1225.6 437.5l-2.1 2.3M1216.1 443.8l-1.8 0.4M1281.5 466.7l0.1 4.0M1236.9 452.1l-2.5 3.7M1229.5 456.3l-2.1 2.7M1239.2 449.5l1.9 0.3M1202.0 444.4l1.4 1.4M1202.8 446.8l-3.2 1.4M1227.3 442.9l1.7 2.3M1213.0 442.1l3.0 3.2M1296.6 474.7l3.2 3.1M1229.3 446.1l2.6 0.0M1245.4 455.1l2.4 1.8M1198.5 432.9l2.6 0.8M1203.9 429.8l1.3 1.8M1256.7 459.8l-2.5 2.5M1267.8 471.2l0.8 2.3M1300.5 467.6l-2.2 2.6M1198.6 445.1l-3.2 1.1M1270.1 470.7l2.8 1.3M1246.2 462.5l-3.3 2.3M1254.0 466.5l-1.9 3.0M1223.3 437.0l2.4 1.0M1204.9 447.4l-0.6 3.3M1259.9 464.1l0.1 1.5M1277.1 471.9l-0.0 3.1M1267.5 453.8l-1.5 1.7M1205.7 435.6l-1.4 1.6M1269.6 474.0l0.1 2.6M1244.6 458.7l-2.5 2.2M1265.7 453.4l2.0 1.0M1274.5 461.5l-0.3 1.5M1204.2 435.1l-1.8 3.1M1267.6 458.7l-0.2 2.9M1247.2 447.6l-2.0 0.7M1294.5 482.2l2.9 0.2M1277.9 476.8l0.4 2.3M1215.0 453.5l2.6 2.0M1210.8 443.0l-1.9 0.3M1281.1 468.2l-3.4 1.3M1217.6 453.4l0.1 1.6M1196.8 437.2l0.4 2.4M1212.0 439.5l2.2 3.4M1194.8 442.0l-1.6 0.9M1290.7 476.0l-2.3 0.7M1235.6 449.2l-3.3 0.0M1234.1 449.4l1.1 1.3M1204.6 447.3l2.7 3.4M1223.7 442.2l-0.1 2.1M1231.8 459.8l-3.7 1.4M1258.7 468.7l-3.1 0.6M1273.8 455.8l-1.9 2.1M1273.2 468.2l1.0 1.3M1294.7 465.0l0.2 2.5M1225.5 452.9l-2.3 0.2M1265.5 458.1l-0.5 2.6M1216.0 437.1l3.3 2.6M1249.7 450.6l-4.3 1.3M1245.3 447.3l1.5 1.0M1234.5 442.4l1.7 1.6M1252.6 465.9l-1.9 1.9M1239.0 453.2l0.9 2.3M1204.3 435.3l-1.9 0.2M1247.5 458.6l-2.0 0.9M1226.1 442.7l0.9 2.7M1292.6 479.6l-1.4 0.6M1198.3 442.3l-2.8 0.9M1260.5 449.9l1.4 4.0M1279.3 474.9l-2.2 0.2M1210.0 434.8l-0.2 3.5M1292.2 476.8l-1.7 3.4M1243.3 455.4l3.8 0.5M1217.5 453.8l-1.1 2.2M1211.3 437.3l-1.5 3.3M1210.9 433.3l-0.2 3.2M1238.4 446.6l-0.5 1.5M1227.8 447.8l-3.4 0.4M1287.9 470.0l1.7 1.5M1294.3 477.2l0.9 1.3M1246.7 459.2l0.6 2.2M1262.4 470.3l1.2 1.0M1231.8 448.4l-1.1 1.8M1277.1 471.7l-0.0 2.1M1297.9 470.1l-1.9 1.2M1217.5 450.4l2.6 3.5M1249.7 450.0l2.1 1.8M1262.1 470.7l2.4 1.2M1215.1 454.1l1.5 0.7M1203.3 437.4l-3.9 1.3M1268.7 474.1l-2.4 0.5M1212.6 452.4l-1.1 1.1M1265.9 459.9l1.0 2.3M1217.3 434.2l1.6 2.0M1297.7 466.1l-2.1 0.2M1231.0 456.6l-2.4 1.5M1201.6 438.5l1.7 3.9M1217.2 441.9l-1.5 0.5M1236.7 458.5l-1.2 1.1M1203.0 430.3l-2.2 0.6M1270.9 472.8l1.1 2.0M1294.5 475.4l2.5 2.7M1230.6 444.9l3.8 0.0M1290.2 474.2l-1.5 0.3M1220.7 445.5l-4.3 0.6M1238.0 447.0l0.7 2.9M1294.5 466.1l-3.0 2.2M1279.5 473.3l-0.8 2.3M1230.3 446.6l-1.3 1.1M1215.0 449.4l1.2 1.2M1199.5 439.4l2.3 3.8M1284.3 479.6l1.2 1.3M1206.3 440.8l-1.7 2.2M1221.1 444.4l-1.3 3.3M1271.3 471.8l-0.9 1.6M1284.7 464.9l-0.5 2.6M1274.7 459.3l1.6 1.6M1209.6 450.2l-0.6 2.4M1233.9 461.3l-0.1 2.2M1278.9 470.5l-1.8 0.1M1243.2 461.0l-3.7 2.0M1201.9 434.8l1.9 0.8M1296.4 475.4l-2.6 0.6M1286.2 468.8l2.6 2.8M1296.8 465.4l-1.0 3.2M1219.8 442.9l1.9 0.9M1222.0 448.6l-1.0 1.9M1198.7 434.4l-1.1 1.7M1230.7 443.4l-2.5 1.9M1205.6 432.1l1.0 3.0M1265.2 453.6l3.1 1.8M1240.2 448.5l2.5 3.6M1228.2 450.2l1.2 2.5M1282.3 479.0l0.9 1.9M1273.6 459.0l4.2 0.1M1238.0 459.2l1.2 4.0M1246.3 448.2l3.2 0.1M1259.8 469.0l3.2 0.9M1234.7 451.2l2.1 1.0M1247.3 464.8l2.8 1.0M1276.4 476.2l1.5 1.1M1290.6 481.6l0.1 1.7M1292.9 469.9l-3.2 1.0M1283.9 461.8l-1.7 1.4M1235.8 458.9l-1.8 1.0M1219.6 443.5l-0.1 2.6M1210.8 437.1l-2.7 3.2"/>
<path d="M1213.9 240.9l-1.2 1.1M1222.9 232.6l-1.0 3.0M1220.8 235.2l0.8 3.1M1219.2 238.5l0.5 2.8M1213.9 241.3l0.1 2.2M1224.0 236.6l0.3 2.0M1218.2 235.3l2.6 1.1M1214.2 239.9l-0.1 1.6M1220.2 234.0l-2.6 2.8M1218.5 234.7l-0.0 2.6M1224.5 231.9l-4.0 1.9M1223.7 237.0l3.6 2.5M1221.0 239.6l-1.9 0.5M1224.7 237.2l2.5 0.5M1222.0 233.5l-2.2 0.7M1222.7 232.9l-0.0 4.3M1215.2 238.1l-0.0 2.5M1212.7 239.0l3.8 2.1"/>
<path d="M1218.2 292.4l3.3 1.9M1207.7 297.4l-1.1 2.3M1219.4 287.8l-1.0 4.0M1209.9 300.4l-1.1 2.5M1216.8 287.0l-3.2 0.1M1212.6 295.7l0.4 2.0M1214.8 286.4l-1.9 1.2M1218.0 293.4l-0.9 3.4M1208.0 291.6l1.9 0.2M1214.8 290.3l-0.2 4.2M1206.4 295.3l-0.7 1.4M1205.0 297.8l2.4 0.8M1209.6 296.3l-0.6 2.0M1215.2 290.5l3.9 1.8M1207.7 293.4l3.3 1.0M1220.5 289.2l0.7 2.2M1206.7 299.4l-0.5 2.5M1215.3 290.0l-3.6 0.7M1211.6 298.0l3.1 0.4M1210.6 291.9l3.8 0.7M1206.2 298.8l-1.9 0.4M1209.4 296.8l-0.1 3.4M1216.5 286.2l1.4 2.0M1208.5 300.4l-2.8 2.3M1207.6 300.7l-2.0 2.1"/>
<path d="M1193.5 379.0l1.4 1.2M1186.7 383.3l1.9 3.3M1194.8 381.1l-1.4 1.8M1191.6 381.1l-2.4 1.9M1189.7 385.2l-2.1 0.2M1192.8 375.8l1.5 1.6M1195.8 380.9l-1.7 1.8M1194.2 377.0l3.1 2.9M1193.5 381.2l-2.2 3.9M1192.6 383.7l-2.4 3.3M1191.8 383.6l-0.5 2.4M1189.1 385.8l4.1 1.0M1185.8 384.3l4.0 1.4M1188.2 382.4l1.6 0.1M1193.8 380.3l-2.2 3.0"/>
<path d="M1124.5 451.7l1.6 3.6M1139.0 446.7l4.0 0.8M1140.9 446.3l2.0 0.7M1122.5 446.4l-3.5 1.8M1135.5 448.0l-0.9 2.2M1122.6 447.1l-1.5 1.5M1128.0 447.7l2.3 0.1M1128.8 450.6l1.0 2.3M1139.6 441.9l-3.0 1.5M1123.0 450.5l0.8 3.7M1129.9 449.9l-0.3 2.1M1135.8 439.4l-1.7 1.1M1121.4 449.0l-3.3 3.0M1122.9 451.4l0.1 3.9M1126.0 449.7l1.8 3.5M1129.6 452.8l1.3 1.7M1135.0 444.5l3.2 1.2M1125.7 453.2l-2.2 3.1M1133.0 444.0l0.8 2.6M1136.2 439.1l-1.5 0.5M1125.3 447.4l-2.9 0.9M1131.4 451.1l2.1 1.9M1133.3 448.4l-2.5 2.4M1128.0 446.6l3.6 1.9M1135.5 447.0l2.4 1.4"/>
<path d="M1153.2 378.1l2.7 1.1M1154.3 374.7l2.0 1.4M1152.5 380.7l1.7 0.9M1147.9 375.5l-0.1 2.0M1148.7 374.2l-3.7 0.3M1146.4 381.9l2.5 0.8M1155.3 380.2l-1.9 2.1M1147.4 378.7l2.0 0.7M1149.3 372.6l1.2 3.7M1152.4 377.3l-1.2 2.6M1146.8 378.3l1.1 3.6M1154.5 376.6l-0.9 3.6M1149.6 374.6l-2.7 3.2M1153.2 379.3l-3.2 1.6M1151.8 376.8l1.9 2.8"/>
<path d="M1206.2 437.6l-2.8 2.3M1214.9 431.4l0.7 2.8M1215.2 432.3l-2.2 3.7M1208.4 437.9l-2.0 1.7M1214.6 436.5l3.1 0.4M1208.4 438.8l-3.0 0.6M1206.7 438.3l-0.5 3.6M1214.0 434.6l-2.6 1.6M1213.2 437.2l2.8 2.2M1212.3 436.4l4.1 1.7M1209.6 433.1l1.8 2.0M1204.7 438.4l0.9 3.5M1210.1 434.2l2.8 2.4M1221.1 429.7l3.0 2.5M1210.7 433.5l3.5 1.5M1219.2 431.6l0.3 3.2M1210.0 439.1l1.5 3.1M1219.9 432.4l0.2 2.4M1213.1 431.5l-2.2 1.3M1218.8 429.2l0.9 2.1M1211.2 433.1l3.7 0.0M1208.8 434.8l1.7 2.4M1212.6 435.4l-1.2 2.3M1221.9 431.5l3.9 0.7M1221.3 431.4l3.6 1.7"/>
<path d="M1430.1 103.8 L1338.8 328.3"/>
<path d="M1461.6 103.8 L1368.7 342.5"/>
<path d="M1512.0 111.0 L1414.4 358.2"/>
<path d="M1538.8 123.6 L1442.5 368.5"/>
<path d="M1531.0 175.6 L1445.0 392.0"/>
<path d="M1561.0 150.4 L1444.0 440.0"/>
<path d="M1586.0 103.8 L1516.6 297.0 L1490.5 354.0 L1474.5 377.0"/>
<path d="M1428.0 388.8 L1406.0 440.0"/>
<path d="M1444.0 394.7 L1423.6 440.0"/>
<path d="M1467.0 390.0 L1448.0 440.0"/>
<path d="M1473.0 377.0 L1454.0 440.0"/>
<path d="M1290.0 208.6 L1354.6 222.8 L1342.0 270.0 L1290.0 254.3"/>
<path d="M1290.0 212.4 L1350.8 225.3 L1339.8 266.3 L1290.0 251.8" stroke-dasharray="8 3"/>
<path d="M1290.0 274.8 L1327.8 282.6 L1321.5 311.0 L1290.0 303.1"/>
<path d="M1290.0 314.1 L1444.3 374.0"/>
<path d="M1290.0 326.7 L1441.1 385.0"/>
<path d="M1302.6 320.4 L1362.4 344.0"/>
<path d="M1381.3 333.0 L1406.5 340.9 L1401.8 358.2 L1378.2 350.3 Z"/>
<path d="M1422.3 210.2 L1411.2 263.7 L1414.4 274.8 L1428.6 277.9 L1441.1 271.6 L1461.6 210.2" stroke-dasharray="8 4"/>
<path d="M1414.4 210.2 L1397.1 288.9" stroke-dasharray="8 4"/>
<path d="M1466.3 208.6 L1445.9 276.3" stroke-dasharray="8 4"/>
<path d="M1519.9 270.0 L1545.1 277.9 L1540.3 288.9 L1516.7 281.1 Z"/>
<path d="M1510.4 259.0 L1541.9 265.3"/>
<path d="M1524.6 295.2 L1546.6 300.0"/>
<path d="M1524.6 295.2 L1515.1 317.3 L1538.8 323.6 L1532.5 348.8 L1546.6 358.2"/>
<path d="M1510.4 251.1 L1529.3 244.8"/>
<path d="M1516.7 304.7 L1504.1 339.3"/>
<path d="M1357.7 351.9 L1349.8 408.6 L1359.3 425.0" stroke-dasharray="6 3"/>
<circle cx="1420.7" cy="320.4" r="31.5"/>
<path d="M1405 294 L1443.5 343 L1426 350 Z" fill="#9a9a9a" stroke="#ccc" stroke-width="0.8"/>
<text x="1409.7" y="293.7" font-size="7" textLength="15.7" lengthAdjust="spacingAndGlyphs">北偏东</text>
<path d="M1471.1 391.3 L1567.1 424.3"/>
<path d="M1475.8 389.7 L1466.3 414.9"/>
<path d="M1449.4 372.8l4.4 0.2M1449.0 375.6l1.8 0.6M1436.9 377.9l0.9 1.7M1452.6 383.8l3.6 2.1M1445.7 381.2l-2.1 3.6M1449.7 383.4l2.9 2.1M1444.0 380.1l0.8 4.1M1446.6 374.9l1.4 1.3M1445.9 372.1l0.2 1.9M1444.1 377.0l-0.5 4.1M1431.3 376.7l0.3 3.2M1446.8 382.4l1.1 2.5M1456.9 376.3l-1.4 3.1M1432.8 374.3l-2.3 3.6M1438.3 381.1l-0.1 3.0M1455.5 375.2l-2.1 2.6M1439.0 379.8l1.2 2.7M1443.8 380.4l2.2 1.7M1442.3 377.0l-2.0 1.2M1452.4 378.8l-0.0 2.3M1442.5 382.5l-1.8 3.4M1441.1 373.6l1.9 2.6M1446.3 381.5l3.6 0.5M1453.2 380.9l2.4 0.4M1434.0 369.4l-3.2 0.8M1446.8 381.7l-3.2 0.9M1446.5 379.5l-1.9 2.7M1449.7 375.4l-1.4 2.5M1452.1 374.9l1.4 0.9M1449.0 384.1l-1.2 2.3M1450.7 383.1l-0.4 2.2M1440.0 374.5l1.5 2.4M1445.8 383.2l3.2 0.5M1435.0 368.9l-2.7 1.8M1454.4 380.1l2.7 0.1M1444.7 382.8l-2.9 0.2M1443.9 371.9l-0.9 1.9M1438.1 368.7l3.6 0.1M1433.5 379.1l4.0 1.1M1437.6 368.5l-1.4 1.7"/>
<path d="M1537.7 276.1l3.8 0.6M1539.5 279.7l-1.2 1.3M1537.9 279.6l0.5 4.3M1533.8 283.7l-1.0 1.2M1529.8 283.9l-1.5 0.9M1533.8 282.1l3.5 2.0M1534.1 277.3l1.3 2.9M1535.3 280.9l3.5 1.7M1534.3 281.3l-1.1 2.5M1535.0 281.8l-3.8 0.7M1535.9 277.9l4.3 0.8M1539.2 279.7l1.7 2.9M1542.8 277.6l-0.8 2.3M1535.9 282.0l1.3 3.3M1538.1 280.8l-1.9 1.3M1528.4 282.0l0.8 3.2M1540.9 279.1l4.0 0.5M1540.8 279.1l-0.5 2.3"/>
<path d="M1539.8 329.4l-2.3 3.5M1532.3 333.8l-0.7 3.8M1534.7 337.7l-2.2 0.5M1537.3 332.2l0.2 2.1M1535.1 337.0l-2.3 1.8M1534.1 339.3l-1.7 1.4M1538.3 333.2l-2.9 1.1M1535.9 333.6l1.7 1.2M1534.3 337.8l1.3 2.9M1535.0 334.3l1.5 0.7M1538.7 326.2l3.2 1.1M1536.0 328.3l-0.8 2.4M1533.3 331.3l4.4 0.5M1538.3 328.2l-0.5 2.2M1537.3 329.2l-3.7 0.6M1540.4 330.3l1.1 1.2M1531.7 335.9l1.6 0.4M1538.0 333.4l0.6 4.3"/>
<path d="M1399.6 283.5l-0.8 2.6M1395.0 294.4l2.2 2.3M1400.4 291.3l-1.4 2.3M1395.2 286.9l-4.4 0.5M1392.3 287.4l1.8 1.8M1402.9 289.3l-1.4 0.8M1400.9 288.7l-2.0 4.0M1391.0 289.1l-3.1 3.0M1398.1 286.5l-1.1 3.6M1392.3 290.1l1.3 1.4M1395.5 286.8l1.4 1.3M1397.0 284.5l-1.3 1.6M1394.0 294.7l3.3 2.7M1402.4 289.4l2.6 1.2M1394.6 294.3l-3.0 1.6M1395.9 288.1l-2.5 1.5M1397.0 285.7l1.3 1.1M1399.5 288.0l3.7 1.8"/>
<path d="M1420.2 234.3l2.0 1.1M1423.1 228.1l2.6 1.5M1424.0 235.8l4.2 1.6M1422.3 238.4l-1.1 1.8M1420.6 231.6l1.5 1.5M1424.8 235.6l-4.3 0.0M1418.4 235.6l-1.6 0.5M1422.2 229.1l-1.5 0.1M1423.0 228.4l1.4 0.6M1424.4 228.9l2.3 1.5M1422.8 226.8l-0.4 1.9M1422.2 236.7l-1.3 1.6M1416.9 235.0l-1.0 2.8M1418.9 233.4l-1.3 3.4M1424.7 229.3l1.4 1.0M1423.0 229.5l-1.1 1.3M1423.0 228.4l-3.6 2.0M1418.9 230.4l-2.8 0.8"/>
<path d="M1314.6 315.5l3.3 2.2M1305.6 320.0l1.3 3.0M1300.4 325.5l0.5 3.0M1303.0 325.3l-3.4 2.2M1306.4 323.3l1.4 3.5M1302.4 326.7l-3.0 0.4M1309.2 320.4l-0.2 1.6M1316.2 314.3l1.5 1.0M1305.5 324.6l1.8 0.2M1311.4 316.8l3.3 0.2M1310.3 319.8l-1.1 1.5M1315.9 317.9l1.9 0.3M1308.8 320.5l1.2 1.4M1306.2 319.5l-1.2 3.9M1303.0 324.3l-1.4 1.4M1315.9 319.4l0.9 2.6M1314.9 317.2l1.4 4.1M1313.2 316.8l1.8 1.7M1309.2 323.6l-3.5 2.4M1315.4 319.1l3.0 0.5"/>
<path d="M1356.8 259.8l2.0 2.0M1350.8 260.3l-0.2 1.7M1349.1 262.8l1.9 0.1M1356.3 258.9l-3.3 0.7M1354.9 261.0l-1.5 0.6M1350.6 259.7l-1.2 2.0M1352.0 263.7l-0.8 2.1M1349.8 261.7l-2.3 0.4M1348.2 264.7l3.1 1.2M1355.1 257.8l1.9 2.2M1348.9 260.2l1.8 0.7M1347.1 263.7l1.4 1.8M1345.3 266.4l-2.9 1.6M1351.2 262.2l2.9 2.1M1349.6 262.8l-1.0 2.7"/>
<path d="M1360.0 355.1l2.3 1.9M1361.9 356.2l2.6 0.1M1364.2 351.5l-0.5 2.9M1362.7 358.7l2.3 3.1M1358.1 355.3l-2.6 1.1M1358.6 357.4l0.7 3.6M1358.4 356.3l-3.7 0.5M1359.1 356.5l1.6 3.2M1364.7 355.9l-2.6 1.6M1365.2 354.6l-2.1 2.0M1365.4 354.2l-1.8 0.5M1363.4 350.4l-2.4 2.2"/>
<path d="M1540.1 212.6l-0.6 2.7M1544.8 209.3l-0.9 2.5M1537.8 210.5l-1.5 1.8M1537.0 211.6l0.9 2.3M1544.8 209.2l0.0 2.8M1532.7 212.4l2.9 1.4M1538.9 207.3l-2.4 0.6M1545.7 208.5l-2.1 0.3M1538.7 213.1l1.6 0.1M1539.9 209.5l-3.7 0.9M1540.9 212.4l-0.2 3.0M1541.6 207.8l1.4 3.0M1537.5 214.0l-1.6 2.6M1531.4 213.6l1.0 3.0M1541.2 211.4l-2.9 0.3M1538.1 211.5l-2.5 0.0M1540.2 211.6l2.1 1.3M1548.0 207.1l-0.1 1.8M1546.2 207.3l-3.8 2.4M1545.2 205.9l2.1 1.1"/>
<text x="1398.6" y="216.5" font-size="6">绿地</text>
<text x="1472.6" y="243.3" font-size="6">绿地</text>
<text x="1381.3" y="405.4" font-size="6">民房</text>
<path d="M1349.8 420.0 L1349.8 432.6 L1381.3 443.6 L1384.5 437.3 L1397.1 429.4 L1401.8 420.0" stroke-dasharray="7 3"/>
<path d="M1425.4 420.0 L1362.4 621.5"/>
<path d="M1453.7 420.0 L1397.1 608.9"/>
<path d="M1461.6 420.0 L1404.9 605.8"/>
<path d="M1419.1 420.0 L1384.5 523.9"/>
<path d="M1381.3 602.6 L1353.0 694.0"/>
<path d="M1404.9 605.8 L1356.1 745.0"/>
<path d="M1411.2 608.9 L1365.6 745.0"/>
<path d="M1466.3 624.7 L1428.6 745.0"/>
<path d="M1519.9 605.8 L1485.2 745.0"/>
<path d="M1464.8 621.5 L1453.7 659.3"/>
<path d="M1290.0 446.8 L1441.1 495.6"/>
<path d="M1441.1 495.6 L1611.2 557.0"/>
<path d="M1290.0 475.1 L1567.1 561.7"/>
<path d="M1290.0 492.4 L1573.4 586.9"/>
<path d="M1290.0 511.3 L1567.1 596.3"/>
<path d="M1290.0 544.4 L1573.4 621.5"/>
<path d="M1290.0 571.1 L1362.4 596.3 L1570.3 643.6"/>
<path d="M1290.0 558.6 L1573.4 637.3"/>
<path d="M1541.9 583.7 L1647.4 612.7"/>
<path d="M1510.4 420.0 L1570.3 424.7"/>
<path d="M1434.8 467.2 L1461.6 478.3 L1461.6 492.4 L1516.7 505.0 L1521.4 500.3 L1545.1 505.0 L1565.5 438.9 L1512.0 420.0"/>
<path d="M1560.8 494.0 L1538.8 552.3"/>
<path d="M1548.2 514.5 L1560.8 530.2"/>
<ellipse cx="1497.8" cy="453.1" rx="20.5" ry="6.9"/>
<text x="1484.6" y="456.2" font-size="7" textLength="26.8" lengthAdjust="spacingAndGlyphs">绿化用地</text>
<path d="M1403.4 627.8 L1460.0 640.4"/>
<path d="M1434.8 637.3 L1453.7 640.4 L1450.6 649.9 L1431.7 646.7 Z"/>
<path d="M1422.3 649.9 L1447.4 654.6 L1444.3 668.8 L1466.3 671.9 L1478.9 659.3"/>
<path d="M1425.4 649.9 L1409.7 684.5 L1428.6 690.8"/>
<path d="M1466.3 653.0 L1460.0 687.7 L1472.6 690.8"/>
<path d="M1384.5 681.4 L1416.0 690.8 L1408.1 717.6 L1381.3 709.7 Z"/>
<path d="M1425.4 694.0 L1438.0 697.1 L1433.3 714.4 L1423.8 711.3 Z"/>
<ellipse cx="1460.0" cy="721.7" rx="20.5" ry="6.9"/>
<text x="1449.0" y="724.8" font-size="7" textLength="20.5" lengthAdjust="spacingAndGlyphs">绿化用地</text>
<path d="M1516.7 687.7 L1556.1 698.7"/>
<path d="M1516.7 687.7 L1508.8 717.6 L1660.0 745.0"/>
<path d="M1359.3 590.0 L1290.0 571.1"/>
<path d="M1321.5 558.6 L1290.0 653.0"/>
<path d="M1334.1 577.4 L1302.6 678.2"/>
<path d="M1535.6 640.4 L1541.9 668.8 L1548.2 671.9" stroke-dasharray="6 4"/>
<path d="M1371.5 509.4l1.7 1.1M1398.7 525.0l2.0 4.0M1411.2 493.8l1.1 3.7M1317.5 502.6l2.4 0.0M1451.2 542.0l-1.1 1.8M1367.2 511.0l2.3 2.6M1366.8 539.0l-0.6 2.7M1282.4 456.7l-1.3 1.2M1276.9 455.6l-0.3 4.0M1390.5 535.1l1.5 0.3M1438.7 521.0l-1.6 2.0M1292.0 466.9l4.0 1.3M1391.9 506.6l0.4 2.6M1251.6 492.6l-1.1 4.2M1351.5 509.9l1.2 1.2M1467.7 564.8l2.3 3.5M1450.2 523.8l-1.4 4.2M1358.8 533.3l1.9 1.8M1427.9 510.9l2.3 3.4M1359.2 523.5l1.5 1.4M1340.0 478.4l-2.4 0.2M1391.4 491.5l-0.3 2.6M1353.4 475.3l3.7 1.5M1337.1 481.1l1.9 1.3M1313.2 459.5l-1.2 2.2M1280.1 490.7l2.2 0.7M1458.4 515.4l0.7 3.9M1450.3 514.6l1.6 3.3M1329.5 523.8l3.5 2.6M1375.2 493.1l0.3 1.9M1424.2 512.1l-3.1 1.0M1341.2 482.6l-0.7 2.0M1467.6 518.3l-0.1 3.1M1307.0 504.2l1.2 3.2M1389.1 503.2l0.6 1.7M1282.5 500.7l1.9 3.0M1271.4 478.6l1.3 2.7M1327.3 466.4l1.2 1.8M1272.6 488.8l1.7 2.1M1463.9 558.4l-3.8 1.5M1282.7 464.4l3.5 0.3M1411.8 513.6l0.9 3.3M1422.6 510.8l-2.3 1.2M1406.6 501.0l4.0 1.5M1422.1 540.0l1.6 0.2M1291.5 462.4l1.5 2.2M1259.1 458.4l-0.9 1.8M1450.8 540.9l-1.4 1.8M1349.1 513.1l0.7 1.3M1445.5 552.1l1.0 1.3M1453.7 544.2l2.2 0.3M1267.4 491.8l3.4 2.6M1438.1 505.8l-1.5 2.2M1423.2 547.8l1.1 1.4M1479.9 541.6l-3.5 0.8M1420.9 547.1l-1.1 2.6M1255.3 481.7l0.7 3.0M1481.2 523.3l-1.2 1.1M1412.6 542.7l2.1 2.3M1481.4 555.7l-0.3 2.2M1263.2 462.8l0.6 2.0M1329.2 471.5l-2.1 2.8M1309.3 471.3l-0.1 2.8M1478.8 536.6l2.4 3.4M1279.5 481.4l2.0 3.4M1375.5 527.0l3.0 1.8M1393.7 514.3l-3.0 2.7M1278.1 463.6l0.9 1.9M1264.9 458.5l2.9 2.1M1363.5 481.8l1.5 2.5M1341.5 477.7l1.5 0.3M1484.8 564.0l3.5 1.0M1485.5 552.4l2.8 1.0M1358.6 485.0l-0.2 1.5M1469.0 551.9l-1.7 4.0M1411.1 507.0l1.4 1.3M1247.2 483.8l-2.1 1.2M1288.8 489.4l-3.8 2.0M1281.7 496.3l-3.2 1.9M1332.3 475.6l-2.1 1.3M1335.4 499.9l1.6 3.7M1313.6 460.1l-0.7 3.3M1443.3 546.9l-4.1 1.3M1367.4 507.7l2.1 1.1M1396.9 491.2l-1.1 1.7M1345.6 530.0l1.6 0.5M1359.9 485.5l-1.0 1.2M1445.6 557.2l-2.2 1.7M1312.3 499.0l-0.1 2.8M1330.3 491.0l-2.0 3.4M1474.6 523.3l1.7 2.3M1387.3 504.9l1.4 1.0M1326.2 491.0l-4.2 0.4M1449.3 566.0l-3.3 0.4M1453.8 509.5l-1.8 2.8M1317.4 495.0l-2.9 0.4M1408.9 509.3l2.0 3.7M1258.7 450.6l-1.5 2.4M1263.6 482.2l1.3 3.0M1347.6 502.8l-0.5 2.6M1280.1 457.4l-3.0 1.1M1266.3 495.9l1.2 1.3M1381.1 496.7l0.1 3.2M1300.1 489.1l2.8 1.1M1398.7 491.8l0.5 1.6M1346.8 523.7l-0.6 3.6M1439.4 508.1l-3.7 0.1M1264.5 493.2l0.7 1.9M1480.6 550.7l-1.5 1.2M1445.3 506.4l1.9 1.8M1247.7 472.5l1.9 1.5M1421.2 521.5l-3.2 1.2M1459.0 543.2l-4.0 1.1M1282.3 494.0l1.8 3.3M1406.7 541.9l2.4 1.0M1418.3 553.7l-1.0 1.3M1402.1 494.2l-0.6 3.9M1265.3 499.5l-1.2 1.9M1294.3 479.2l-2.8 1.6M1283.1 448.3l3.7 1.3M1290.3 484.6l2.2 2.8M1346.4 477.9l-2.9 1.2M1409.3 541.7l-1.5 0.2M1336.8 475.0l-0.0 4.1M1451.7 507.2l3.3 2.1M1415.0 517.3l0.2 2.0M1455.6 531.3l-3.1 1.3M1267.8 462.6l3.3 2.6M1399.6 489.8l2.2 1.3M1359.3 509.8l0.9 2.4M1245.7 470.8l0.8 1.4M1349.2 532.3l1.9 0.3M1415.2 509.7l2.0 2.3M1308.9 491.9l-0.4 4.4M1498.8 523.4l-0.7 3.7M1454.9 555.3l-1.4 3.1M1339.3 484.2l-3.3 2.5M1473.0 555.6l2.2 3.1M1427.4 529.0l-1.1 2.3M1383.0 507.1l2.5 0.5M1315.7 520.9l0.2 2.6M1310.8 471.4l0.9 1.7M1240.3 487.5l0.4 2.8M1389.5 502.8l1.5 0.9M1323.7 480.5l-2.1 2.4M1479.4 536.1l-3.2 0.8M1271.8 454.4l-1.1 4.3M1328.2 511.6l0.9 4.0M1262.8 470.7l-2.2 0.7M1318.4 460.6l2.0 1.1M1424.5 509.5l0.7 2.0M1386.9 537.5l-0.9 1.9M1417.2 554.2l-0.5 1.7M1437.5 555.7l0.9 1.7M1291.3 483.9l-3.2 1.3M1478.3 527.6l1.9 3.2M1407.2 515.4l-1.3 2.1M1261.6 465.8l3.3 0.5M1328.2 493.8l-0.7 2.2M1369.2 477.5l-3.1 0.7M1497.2 524.2l-1.3 3.4M1334.7 470.6l1.7 0.9M1442.4 507.5l-2.3 1.5M1376.5 516.5l-0.6 3.4M1397.0 507.2l-1.6 1.7M1415.6 541.0l-1.9 1.6M1426.4 558.3l0.3 2.3M1365.8 535.2l1.4 0.6M1359.7 514.9l-2.0 1.7M1494.4 534.2l-1.3 1.2M1259.8 447.5l3.0 0.6M1388.5 494.8l-2.6 0.5M1288.8 460.2l-2.9 3.1M1294.9 452.8l-1.7 1.4M1487.3 548.9l-1.1 2.3M1443.4 531.3l2.2 3.6M1267.7 488.2l3.4 0.7M1337.5 520.5l3.1 0.6M1338.4 524.3l-3.3 0.6M1305.7 470.7l1.9 2.1M1308.5 468.6l-2.5 2.4M1309.5 519.2l2.5 2.0M1277.2 499.7l-2.1 0.9M1424.3 547.8l1.6 1.9M1357.5 529.1l3.1 1.7M1393.6 513.8l-1.0 4.0M1289.9 505.4l1.6 3.5M1464.3 520.9l-4.1 1.9M1328.3 464.1l4.2 1.5M1240.1 490.0l3.3 1.7M1276.3 455.3l-1.0 1.5M1321.1 518.3l-2.6 3.2M1495.8 522.3l2.9 2.6M1424.3 498.0l-0.0 2.2M1359.4 479.9l4.5 0.3M1316.2 514.1l2.8 1.1M1280.6 473.3l3.0 1.9M1277.5 491.9l-0.0 1.8M1332.8 495.6l-2.5 0.6M1289.6 510.6l-3.4 1.3M1319.2 470.6l1.2 1.3M1256.3 470.0l0.9 3.0M1344.5 468.8l-1.9 2.9M1378.6 514.7l-2.5 3.7M1456.4 552.2l0.8 2.3M1339.6 528.2l0.9 2.5M1353.6 480.3l-1.5 0.0M1386.9 541.5l2.3 2.4M1343.5 483.0l1.5 1.1M1447.5 553.3l-1.6 0.5M1419.9 514.6l-1.4 2.8M1314.2 519.3l3.7 0.0M1455.4 538.7l-1.3 4.3M1300.9 493.0l-1.8 1.9M1423.0 520.1l-0.3 3.3M1415.8 513.1l-1.2 2.9M1298.5 491.1l2.8 3.1M1357.8 518.5l-0.2 2.9M1307.2 464.3l-3.0 0.7M1374.1 511.8l-1.8 1.2M1281.9 498.7l0.4 3.4M1441.5 558.2l-1.5 0.7M1333.0 517.0l-1.6 1.0M1288.5 464.8l2.4 0.8M1442.8 535.0l0.3 1.7M1333.3 527.5l-1.6 2.3M1357.6 523.3l-1.4 1.3M1415.6 515.9l-0.1 2.2M1340.1 488.2l0.6 1.4M1293.8 486.8l2.0 0.4M1426.8 513.9l1.2 1.9M1458.8 513.3l-1.7 3.7M1296.9 478.6l-2.7 2.0M1346.1 471.4l0.5 2.6M1425.0 514.5l1.0 3.3M1448.0 526.1l1.1 3.0M1479.2 526.6l-3.6 0.3M1334.1 506.8l0.9 1.5M1434.0 523.0l-0.2 3.0M1462.4 556.7l3.3 0.3M1360.3 502.9l-2.4 1.3M1354.6 528.1l0.6 2.9M1365.3 527.6l-1.9 3.2M1353.5 473.8l-1.7 2.7M1429.6 546.3l2.0 0.8M1258.6 490.4l1.7 0.6M1429.7 533.3l3.5 0.6M1420.9 525.1l3.5 0.6M1346.9 506.0l-4.0 0.0M1467.1 519.5l1.5 2.7"/>
<path d="M1379.0 544.9l1.5 1.7M1440.3 527.2l-2.9 1.4M1469.4 545.9l2.4 0.4M1520.4 583.7l-2.0 1.0M1425.7 511.4l-0.3 2.6M1460.8 546.6l-0.7 2.5M1519.7 551.6l-3.1 0.8M1397.2 515.5l-0.3 2.7M1479.6 544.4l2.5 2.9M1429.4 547.5l-2.7 1.9M1452.0 567.2l0.7 4.1M1396.3 521.5l-0.7 1.5M1531.6 548.9l-0.6 1.9M1533.2 575.4l-2.4 1.8M1491.4 567.0l1.3 1.7M1526.5 551.1l-2.1 0.5M1408.8 507.9l-3.4 2.7M1450.0 551.9l2.9 3.1M1501.8 543.1l3.5 0.6M1387.2 539.6l1.3 1.8M1482.5 545.1l-0.4 1.9M1535.4 563.6l-1.7 0.9M1506.6 588.4l0.5 1.5M1444.8 549.1l2.4 2.0M1401.6 524.9l-1.8 2.1M1501.4 540.8l-1.6 1.0M1526.3 596.0l-3.0 0.6M1435.2 530.3l-2.1 2.1M1542.1 553.7l0.2 4.1M1481.4 556.4l1.8 0.5M1423.2 555.0l-1.9 1.0M1542.2 550.5l-1.3 4.2M1434.1 561.5l-0.8 1.5M1440.3 537.5l2.7 2.6M1410.0 544.9l1.0 1.4M1482.4 533.3l-0.6 3.8M1482.3 552.6l3.0 0.3M1399.2 533.8l3.0 1.3M1444.7 535.0l-1.0 1.7M1406.1 551.7l2.0 3.5M1526.7 568.8l1.6 0.8M1533.5 552.0l0.0 3.1M1405.4 526.4l2.7 1.5M1469.6 543.2l2.2 1.6M1424.7 515.1l3.0 2.8M1460.3 567.7l4.3 0.2M1459.7 562.2l-0.8 3.5M1418.8 545.9l2.0 1.1M1392.7 518.1l-0.1 2.4M1535.9 551.1l-0.5 2.1M1477.0 567.8l-1.0 1.3M1423.9 539.7l-1.6 0.1M1482.2 564.7l-2.1 1.4M1516.9 564.5l-1.5 0.4M1538.5 569.3l0.5 1.7M1421.5 546.0l-1.0 1.7M1447.2 523.5l1.8 1.3M1431.4 562.3l-3.9 0.0M1463.1 547.9l-3.2 2.7M1504.5 569.5l2.7 2.0M1517.2 581.8l3.5 1.0M1447.6 524.8l-3.5 0.4M1511.8 545.4l-3.7 2.2M1527.4 583.1l-3.4 2.0M1481.9 551.0l-3.3 2.0M1529.2 560.1l-3.1 0.4M1544.3 555.6l-3.8 0.4M1421.0 551.4l1.6 1.4M1463.9 534.3l0.1 4.2M1492.7 569.3l1.3 3.6M1510.6 574.0l-3.9 0.7M1458.0 524.4l-1.8 3.6M1439.0 544.7l-3.4 1.9M1386.9 521.2l1.8 0.1M1517.9 562.5l-0.9 2.7M1444.5 526.5l1.8 3.6M1488.9 545.9l2.2 0.6M1499.6 557.5l-1.9 3.4M1402.4 536.8l3.9 0.5M1419.3 520.8l-2.6 0.3M1415.7 552.3l-1.4 3.9M1449.4 543.2l-3.0 0.4M1549.9 561.5l-1.7 1.0M1478.8 527.0l3.7 2.3M1454.0 561.2l1.8 1.8M1401.3 529.5l-2.8 1.3M1439.5 562.5l-3.3 1.1M1396.2 531.5l0.8 4.3M1441.5 549.1l-1.1 2.4M1467.0 558.7l-2.9 0.9M1436.7 564.1l3.9 0.7M1494.9 562.0l0.6 3.7M1525.5 581.6l-1.1 1.1M1444.2 522.3l-4.1 0.6M1407.8 533.6l-0.4 1.6M1445.0 554.8l-1.0 2.1M1511.9 553.8l-0.4 2.7M1540.8 582.6l-2.9 2.0M1439.6 564.4l-2.2 2.8M1436.1 520.8l-0.9 3.9M1516.0 558.1l2.8 1.3M1532.5 554.0l-1.4 1.5M1443.4 517.6l1.6 2.1M1533.9 596.8l2.0 1.3M1542.6 559.4l1.5 2.4M1407.3 516.1l0.9 2.5M1544.7 563.7l3.4 2.5M1452.9 562.3l-1.6 3.5M1442.2 522.4l-2.1 2.0M1473.0 560.4l-1.7 1.6M1437.5 561.2l-0.2 2.4M1491.2 545.0l-1.2 1.1M1517.8 570.3l1.9 3.9M1432.8 524.0l3.1 0.7M1504.2 571.6l1.1 3.8M1407.0 518.5l-1.9 4.0M1484.7 565.6l-2.0 1.7M1533.2 584.9l1.3 2.4M1517.9 558.9l3.4 2.3M1471.1 551.9l-2.1 3.6M1410.1 521.2l2.7 0.6M1461.0 565.9l-1.6 2.8M1449.7 547.3l2.6 3.1M1507.2 581.1l3.1 1.6M1507.2 563.2l-4.0 1.3M1500.2 577.7l-1.9 3.7M1403.7 538.3l-2.0 2.7M1437.2 516.2l-1.3 3.8M1434.5 523.0l1.4 1.2M1486.9 581.3l-2.1 1.5M1505.4 539.9l-2.2 1.2M1384.4 527.7l2.1 1.0M1396.4 522.1l-0.7 3.9M1387.0 539.1l2.0 0.7M1489.7 548.7l1.6 2.8M1416.2 547.4l3.2 2.5M1515.4 567.9l3.8 0.4M1390.5 523.2l0.4 1.6M1483.6 566.9l-0.7 2.6M1466.8 554.0l3.1 2.7M1541.1 590.9l-2.5 0.3M1551.5 555.8l0.1 1.9M1456.0 555.2l-1.7 2.3M1445.9 525.7l0.7 2.2M1413.3 543.3l-0.1 2.8M1414.4 542.0l1.9 1.3M1472.8 562.0l-3.7 0.3M1531.6 593.8l-2.4 2.8M1400.8 511.0l4.1 0.2M1499.9 567.5l1.7 1.9M1410.1 536.7l-2.4 0.1M1398.4 508.5l1.8 3.8M1516.0 563.8l1.7 0.6M1406.2 543.1l0.4 4.5M1527.7 585.8l0.3 4.0M1413.0 510.0l-0.6 3.0M1423.6 521.3l4.2 0.3M1492.9 581.8l-2.8 0.2M1505.6 556.5l-3.3 2.2M1415.4 505.8l2.5 2.0M1454.9 519.2l-3.3 2.0M1467.9 525.5l-2.9 1.1M1400.3 517.0l-1.6 3.8M1461.6 554.8l1.8 1.3M1533.5 566.0l3.1 1.1M1411.1 514.2l0.4 3.2M1484.9 566.4l0.3 1.7M1509.7 540.4l0.2 2.7M1490.7 568.8l2.5 2.4M1497.7 558.4l3.8 1.8M1489.4 533.9l3.3 3.0M1424.5 529.0l-3.1 2.5M1483.9 567.9l1.8 0.2M1537.9 589.8l1.6 0.2M1417.6 555.1l2.7 2.2M1533.3 579.5l-2.2 0.6M1418.5 507.1l-1.3 1.3M1539.0 585.2l3.3 2.2M1411.9 531.0l3.6 1.3M1522.2 590.4l4.1 0.0M1470.1 567.4l-0.0 3.4M1476.7 568.5l1.6 0.4M1477.1 541.7l0.5 1.4M1513.5 540.2l-3.4 2.0M1465.7 528.9l-1.0 1.9M1461.3 526.8l-3.1 0.2M1449.2 521.8l-2.7 3.0M1528.8 549.5l1.0 2.2M1514.3 547.0l-1.5 4.2M1517.6 540.7l1.8 0.4M1495.7 564.4l-0.2 2.9M1449.6 549.2l-1.9 3.8M1498.9 576.0l-3.9 1.1M1508.8 538.9l-2.2 3.4M1449.1 563.2l3.7 2.3M1453.6 555.6l1.7 1.7M1444.8 532.4l2.7 0.8M1541.1 583.0l-3.7 0.8M1512.4 591.1l-1.7 1.6M1427.5 531.1l2.2 0.1"/>
<path d="M1462.4 476.8l2.0 3.3M1458.7 482.4l-2.5 1.9M1440.0 518.0l1.9 2.8M1438.8 500.1l-2.0 0.2M1446.0 492.6l-0.5 4.3M1450.1 502.7l-2.5 3.6M1422.9 511.1l2.6 3.3M1422.3 515.8l-2.8 3.5M1431.3 509.2l-2.0 3.0M1454.3 482.3l1.6 1.6M1434.4 520.5l1.8 1.4M1456.8 469.0l-1.0 3.3M1448.9 489.6l1.0 1.4M1417.0 509.8l0.8 1.7M1431.2 513.4l-3.5 0.3M1442.7 508.2l1.5 1.0M1433.7 502.0l-1.6 2.3M1435.9 474.9l-2.5 0.5M1436.8 468.4l-1.9 1.1M1458.4 477.0l-1.2 2.0M1420.3 515.2l-1.9 0.6M1447.6 484.9l-1.0 1.8M1421.2 506.7l-2.6 0.1M1446.9 485.0l1.3 1.1M1438.4 523.3l4.0 1.7M1443.7 502.7l3.5 1.6M1431.2 504.2l-0.1 1.8M1442.8 509.9l1.7 2.1M1440.4 474.5l1.8 1.2M1434.5 497.0l-1.3 2.6M1438.3 466.6l-2.0 3.5M1421.6 500.9l0.4 1.8M1445.9 497.3l1.8 0.5M1431.8 489.4l2.1 1.9M1419.7 507.7l1.2 2.6M1453.7 469.4l2.1 0.5M1449.0 479.9l-4.0 1.7M1439.6 468.0l-3.0 0.5M1425.6 502.4l-1.9 0.9M1424.2 512.1l-2.8 0.7M1435.4 474.5l0.4 2.4M1438.1 510.5l0.8 1.7M1452.9 465.9l1.3 0.8M1445.4 484.3l2.9 0.2M1448.3 479.8l2.2 2.0M1447.9 488.6l3.5 1.7M1459.0 471.2l-2.3 1.1M1442.7 466.5l2.5 2.2M1440.0 465.3l1.2 1.0M1429.8 491.2l3.1 2.1M1455.2 493.5l1.1 3.4M1441.0 524.6l2.2 2.0M1453.6 497.5l0.1 4.5M1436.5 482.2l-1.8 1.0M1452.6 464.7l3.3 2.9M1434.1 500.9l1.7 3.1M1425.6 516.8l3.5 1.9M1431.4 521.0l2.0 2.1M1448.5 491.7l2.0 0.9M1444.0 518.9l1.7 0.9M1443.9 492.2l-1.6 0.6M1425.4 502.7l-0.8 2.8M1449.4 502.3l-2.0 3.6M1446.5 464.6l-2.7 0.5M1441.1 522.1l1.5 0.5M1430.1 501.2l-4.1 0.4M1439.9 497.1l-3.5 1.8M1445.4 484.2l2.1 0.8M1447.5 484.9l-3.4 2.5M1444.5 463.4l4.1 1.0M1434.3 484.6l-1.3 1.9M1430.8 505.1l-0.3 3.5M1436.9 518.7l-1.1 2.7M1453.7 486.9l2.9 0.1M1451.3 485.4l-0.9 1.8M1460.5 471.1l2.1 1.9M1444.8 463.8l1.2 4.2M1444.0 467.3l-1.7 1.9M1452.5 486.9l2.0 0.8M1427.6 505.0l1.9 0.2M1436.6 496.5l3.2 0.8M1454.5 469.3l1.6 3.2M1430.7 491.7l0.1 1.6M1436.4 478.6l1.7 4.0M1457.0 482.2l-1.5 3.1M1459.0 487.2l3.1 2.2M1429.5 500.2l-2.8 1.8M1460.2 478.2l-0.6 2.0M1429.8 519.2l-1.5 1.8M1416.8 509.5l3.1 1.9M1421.2 516.0l2.4 2.7M1440.4 459.8l4.0 1.5M1443.5 462.4l1.5 2.7M1434.3 501.2l0.2 2.3M1418.6 511.3l1.5 0.9M1449.6 488.2l2.6 2.8M1442.6 478.0l0.1 2.1M1453.7 469.9l1.9 0.3M1442.9 480.5l-1.4 1.7M1456.9 480.1l3.1 1.0M1439.0 511.8l-3.2 2.2M1423.3 501.9l-1.6 2.8M1423.6 508.2l-0.5 1.8M1437.5 481.9l1.9 2.0M1448.1 493.5l3.7 0.4M1428.4 504.9l-1.5 3.2M1455.0 491.3l1.9 1.5M1438.8 480.6l1.9 1.0M1456.9 481.8l-2.7 3.4M1443.4 474.0l2.0 3.1M1432.8 518.0l1.6 0.5M1432.0 487.3l-4.0 0.9M1432.0 490.7l2.8 1.1M1438.0 489.5l-1.9 2.4M1437.4 472.5l2.6 0.6M1434.0 490.2l-1.1 1.9M1435.9 502.0l-2.4 3.0M1436.4 498.7l-4.2 1.0M1433.4 481.0l0.5 3.4M1423.0 498.6l-4.2 0.3"/>
<path d="M1421.7 461.5l-0.9 2.2M1425.8 466.1l-2.1 1.9M1419.6 462.5l4.2 1.3M1417.1 462.8l-1.4 1.3M1414.1 459.0l2.7 1.5M1428.2 433.5l3.2 2.0M1424.4 449.7l2.1 0.8M1429.6 428.0l2.6 2.7M1442.5 437.6l0.4 4.4M1426.5 442.8l0.4 3.6M1425.8 436.7l3.6 2.5M1427.6 465.2l1.1 2.0M1423.9 457.0l-1.9 0.1M1431.3 434.0l3.2 1.9M1420.2 451.4l1.0 3.8M1436.0 435.8l3.8 0.1M1437.6 447.9l-2.5 0.4M1440.2 438.4l1.7 1.9M1423.8 451.6l0.7 1.7M1431.4 461.7l0.9 3.3M1439.7 436.5l3.1 3.0M1442.6 441.5l-2.5 2.8M1429.4 434.9l-1.2 2.3M1427.7 432.9l-0.3 2.5M1431.2 435.4l-3.6 1.9M1428.4 431.6l-3.7 0.7M1434.3 443.2l4.1 0.6M1428.6 446.2l1.9 3.4M1440.0 441.2l2.0 1.6M1417.1 454.0l0.8 1.4M1428.6 435.3l1.7 0.4M1427.2 437.1l0.3 2.7M1441.9 441.2l1.9 2.8M1434.7 433.8l-3.5 1.1M1432.1 458.3l-0.4 1.8M1436.0 448.0l-0.2 2.9M1434.0 454.6l-1.1 1.8M1423.7 452.2l-3.6 0.5M1429.7 465.4l3.3 0.4M1431.4 452.6l0.4 1.7M1434.8 450.2l-2.0 1.6M1428.3 460.5l-1.8 1.3M1444.0 438.6l0.5 2.6M1439.9 444.4l1.9 1.4M1429.9 456.5l2.6 1.7M1431.6 449.8l3.9 1.9M1438.1 430.7l-1.6 1.2M1436.4 433.9l-3.0 2.8M1433.9 456.9l1.2 1.0M1435.8 451.6l-4.2 1.3M1436.6 451.6l-0.4 1.9M1436.3 446.2l0.8 3.2M1420.4 455.2l0.8 2.9M1420.6 446.0l2.5 0.0M1436.7 442.6l1.7 1.5M1423.0 445.0l-1.3 4.0M1425.1 459.9l-2.4 2.9M1436.0 442.4l2.6 3.0M1427.6 429.1l-2.8 0.5M1413.8 459.7l-2.8 2.1M1421.8 461.0l-1.9 4.1M1430.6 456.5l1.5 1.5M1421.2 459.9l-0.9 2.2M1417.7 458.2l2.0 0.5M1425.5 455.1l2.5 1.6M1436.1 454.5l0.2 4.3M1422.6 446.8l-0.6 1.9M1415.2 456.7l-2.6 3.5M1424.3 450.6l0.6 2.5M1429.8 440.5l3.6 1.9"/>
<path d="M1539.6 527.5l-3.3 1.7M1517.0 539.6l-2.6 0.7M1526.2 532.2l-0.6 3.4M1542.7 558.5l2.3 1.1M1553.1 557.1l-1.0 3.4M1512.9 548.1l-0.4 2.7M1509.1 520.5l-3.7 1.2M1495.2 522.3l0.2 3.0M1515.1 547.3l1.4 2.8M1560.4 554.8l0.2 2.5M1519.7 539.8l-1.8 1.4M1520.6 533.1l1.8 3.9M1534.5 534.3l2.0 3.4M1501.8 536.2l2.1 0.1M1493.0 536.9l2.0 1.0M1498.2 521.4l-2.5 2.7M1556.0 563.0l-0.7 4.2M1494.1 541.0l0.4 2.0M1544.6 556.3l0.6 1.7M1555.0 556.6l-1.3 4.2M1498.7 515.0l1.4 0.6M1543.8 548.8l1.9 0.7M1504.1 534.4l-2.3 3.8M1514.1 549.6l0.5 2.6M1513.3 525.6l-4.5 0.4M1548.1 535.8l1.7 1.0M1515.7 542.5l3.0 0.6M1547.5 531.1l0.7 3.8M1535.5 540.3l-3.1 1.2M1518.0 532.5l-4.0 0.7M1560.1 552.2l1.8 0.9M1518.6 542.0l3.9 0.1M1550.8 547.5l3.9 0.1M1521.2 542.2l-0.8 3.6M1517.9 550.3l-4.2 0.6M1539.8 537.4l0.9 2.1M1557.0 558.5l-3.1 2.4M1564.6 557.8l2.0 3.2M1510.3 536.6l3.6 1.9M1530.7 533.0l-1.7 0.4M1559.3 558.2l3.4 1.7M1530.9 553.1l-0.7 2.7M1566.1 539.2l-1.4 1.2M1516.2 522.9l-2.6 1.1M1548.8 538.7l-2.3 2.6M1498.9 529.0l-1.4 1.6M1543.2 537.4l1.7 3.9M1558.0 565.3l0.7 3.1M1550.1 555.0l0.6 4.1M1517.5 549.9l0.2 1.8M1551.6 536.1l-0.9 1.4M1565.9 553.5l-1.3 1.4M1540.9 539.7l2.8 2.8M1494.2 526.9l3.9 1.1M1563.6 536.7l0.3 2.9M1543.6 551.9l2.0 3.8M1509.1 521.2l-1.6 1.0M1505.6 531.5l1.0 1.7M1562.1 550.1l-1.8 1.4M1563.3 542.5l-3.2 1.0M1562.3 559.6l-1.2 2.8M1556.7 547.3l4.0 1.3M1550.7 552.8l-1.5 1.6M1523.4 547.9l-4.2 0.5M1501.8 536.0l-0.5 2.7M1507.7 520.7l0.3 3.0M1513.0 529.9l-0.6 3.7M1539.4 532.4l-2.4 0.9M1559.4 565.3l2.9 1.4M1565.8 548.6l-0.4 2.4M1496.6 519.0l2.2 0.9M1538.5 544.8l-3.5 0.6M1514.5 548.8l-1.3 2.9M1555.1 553.9l1.4 3.0M1509.6 547.8l3.2 3.1M1501.2 514.4l-0.4 2.1M1533.6 529.0l-3.1 1.7M1539.1 556.6l-3.5 0.1M1550.3 531.1l2.7 0.4M1566.6 546.6l-0.3 1.5M1519.0 548.9l-1.1 3.8M1495.4 518.5l3.4 2.1M1495.0 541.5l2.8 3.1M1532.2 535.1l-2.7 0.3M1548.5 532.5l-3.8 2.3M1497.4 536.5l1.3 1.5M1517.5 540.7l-4.4 0.7M1565.4 556.0l-0.9 1.8M1545.9 547.0l1.8 3.8M1514.3 523.1l1.7 0.9M1533.1 550.5l2.6 1.4M1534.4 543.3l0.8 3.0M1497.0 514.5l0.5 2.1M1551.3 539.0l-1.9 1.2M1498.7 528.4l0.9 2.4M1552.1 538.7l-2.0 3.4M1525.7 538.5l-3.2 0.8M1509.4 519.1l2.4 0.6M1496.8 533.2l0.6 2.4M1526.0 552.4l1.4 1.4M1516.3 529.6l-3.5 1.0M1527.2 528.3l1.8 0.3M1554.2 552.9l3.0 1.6M1495.8 528.4l0.9 1.6M1545.5 552.1l-0.1 2.0M1542.8 542.2l-0.9 1.6M1564.6 536.1l2.1 1.7M1510.5 520.1l-2.5 3.7M1519.1 528.7l-1.1 1.9M1520.0 542.4l0.4 1.9M1496.4 529.7l-4.3 0.1M1499.0 529.3l0.1 2.1M1542.2 544.0l-2.0 1.3M1559.1 559.9l0.2 1.9M1531.7 528.7l-2.0 3.0M1530.6 555.2l3.6 0.5M1555.9 536.5l0.9 1.4M1533.4 548.1l1.6 3.2M1517.2 542.2l2.9 3.4M1529.5 524.0l3.5 1.0"/>
<path d="M1536.7 609.7l3.6 1.9M1530.6 591.1l1.3 3.3M1477.3 570.4l1.8 3.7M1549.7 604.1l-3.7 1.1M1537.2 608.4l-3.4 0.3M1543.7 609.9l2.5 1.8M1510.7 591.3l1.2 2.8M1519.8 590.8l1.9 2.3M1511.5 594.1l-1.0 1.8M1515.0 590.8l-2.7 2.4M1531.5 604.2l3.0 3.0M1512.5 593.1l1.7 2.1M1523.1 610.8l0.2 3.7M1489.2 587.5l1.0 2.2M1497.3 599.9l-1.4 1.6M1487.5 597.5l-1.6 3.1M1518.8 605.4l1.1 1.3M1504.4 579.4l-3.1 0.4M1518.7 614.0l-1.8 1.3M1501.9 581.0l-3.0 2.2M1510.8 592.3l2.0 2.2M1522.6 613.1l-3.6 1.9M1506.6 592.5l2.4 3.7M1489.8 578.4l2.7 3.3M1538.8 600.7l-3.7 1.9M1507.9 585.7l-2.0 1.7M1477.7 597.8l0.5 2.6M1520.0 591.9l2.7 0.2M1506.1 579.3l1.5 3.5M1496.0 597.1l-0.8 1.9M1472.4 588.8l-0.8 2.2M1484.3 598.6l-2.1 0.6M1516.2 600.7l0.9 1.4M1495.8 595.9l-1.0 2.9M1484.7 578.4l1.5 2.3M1496.1 604.2l4.2 1.6M1487.3 599.7l2.4 2.3M1505.6 580.0l-3.2 2.3M1490.3 598.2l0.3 4.5M1477.9 581.3l2.5 2.2M1528.1 613.3l-0.4 2.6M1537.0 592.9l2.6 2.7M1501.1 608.8l2.8 0.8M1493.5 574.7l1.7 0.5M1501.2 591.0l-0.1 2.4M1525.5 602.1l-2.0 0.1M1511.3 596.4l1.6 3.8M1484.8 599.5l1.1 2.3M1518.5 601.1l1.1 1.4M1546.1 604.5l3.2 1.2M1514.5 592.3l2.1 3.5M1499.0 589.8l-2.6 0.3M1506.3 584.2l-1.7 3.0M1507.3 592.3l2.9 2.6M1503.9 604.6l1.4 3.4M1477.5 576.1l-3.5 0.4M1523.7 600.8l0.2 2.1M1484.3 591.9l-1.3 1.9M1524.9 589.8l-0.7 1.9M1513.0 591.3l-0.3 1.9M1508.0 599.2l2.2 1.0M1523.5 602.3l-1.4 3.6M1518.5 590.3l0.7 3.9M1513.0 605.3l1.2 2.6M1542.8 617.7l-0.8 1.6M1523.4 586.0l-4.3 0.9M1529.9 595.7l-1.8 0.9M1535.0 605.5l4.2 0.2M1502.7 604.1l-1.7 2.6M1540.7 597.4l-2.4 0.8M1476.2 579.4l1.7 0.4M1523.5 588.8l2.1 1.1M1489.6 602.5l-3.9 1.2M1548.1 607.4l-1.9 1.4M1539.7 616.3l-1.5 1.6M1475.4 597.8l-0.5 3.3M1541.3 595.7l-1.7 2.3M1532.5 602.5l3.6 2.5M1491.5 597.6l-1.9 1.1M1526.2 598.5l1.6 1.4M1546.1 604.4l-0.1 3.0M1472.1 591.2l-2.9 3.0M1502.4 584.4l1.7 3.3M1523.3 597.8l-0.2 2.0M1542.4 606.4l-0.1 3.9M1485.4 594.8l1.8 3.5M1481.9 579.4l-1.2 2.7M1500.3 595.4l2.2 1.8M1469.8 591.8l2.8 2.9M1513.4 600.6l-0.7 1.7M1533.4 597.7l-3.5 1.6M1520.8 609.9l0.7 3.5M1547.7 599.3l2.6 0.9M1514.6 586.6l3.1 2.6M1505.4 583.5l2.7 1.8M1487.2 587.6l-0.3 2.8M1507.4 606.0l4.3 0.2M1492.2 575.4l-2.4 2.1M1516.0 589.3l-1.9 1.5M1530.2 594.5l-0.8 3.4"/>
<path d="M1382.4 624.8l3.4 0.7M1384.3 614.8l-0.6 3.7M1381.4 633.6l-1.5 0.7M1377.1 626.0l1.2 1.3M1382.1 620.6l1.7 2.3M1385.0 626.3l-1.2 1.4M1376.1 626.3l0.9 1.6M1389.9 617.8l-2.1 0.0M1379.7 634.9l1.2 4.1M1381.2 623.4l4.2 1.0M1384.1 620.9l0.7 3.7M1389.2 612.8l2.3 1.4M1389.5 610.9l-1.5 2.8M1384.5 622.9l2.3 2.2M1386.3 610.0l1.7 3.8M1387.4 606.7l-1.3 3.1M1389.4 612.5l2.2 1.0M1389.6 617.1l2.7 2.1M1388.2 618.2l2.8 0.2M1382.7 626.6l0.9 1.6M1385.2 616.0l-1.9 1.5M1387.8 621.9l3.5 1.3M1381.8 634.9l3.7 0.3M1379.7 623.3l1.0 2.8M1379.9 621.9l-0.2 2.4M1390.5 608.8l0.4 2.1M1390.0 608.5l-1.8 3.6M1385.1 625.6l1.2 1.4M1377.2 633.2l-1.9 0.8M1385.9 624.4l1.3 1.5"/>
<path d="M1497.9 504.3l-4.1 0.8M1493.5 508.1l0.4 1.5M1498.5 508.5l1.9 2.7M1499.7 499.9l-1.8 0.4M1495.3 508.5l2.6 0.2M1491.3 508.6l2.0 0.1M1491.3 504.9l2.0 0.6M1496.7 502.3l-2.3 1.5M1492.5 505.7l-1.4 0.8M1500.4 499.8l-2.7 0.5M1501.0 506.6l1.6 0.5M1501.5 503.7l-1.5 1.8M1496.5 502.9l0.5 2.3M1498.5 502.8l2.2 2.6M1491.9 511.3l0.0 2.2M1491.2 508.9l-0.0 3.7M1495.3 505.7l-2.2 0.8M1507.7 502.9l-4.3 0.1M1494.9 509.6l-0.7 2.0M1507.0 501.1l-2.6 1.8"/>
<path d="M1505.9 676.4l1.9 1.2M1510.6 665.4l0.4 3.6M1505.1 674.9l2.8 0.9M1513.7 668.0l2.1 0.3M1516.9 662.2l0.6 2.6M1514.7 667.7l-1.2 2.4M1511.6 668.0l3.6 2.4M1519.0 664.5l-2.9 0.1M1514.3 662.8l-2.5 2.6M1518.9 665.2l-2.1 0.9M1514.7 664.9l1.4 2.2M1516.8 667.0l-3.1 1.6M1503.6 670.9l-0.5 2.1M1505.9 668.4l3.2 1.7M1508.0 674.4l2.1 3.5M1506.2 669.9l0.5 1.5M1508.8 668.9l4.1 0.2M1505.9 667.3l-2.2 0.3M1504.2 669.0l3.5 1.1M1511.7 667.7l1.7 1.6"/>
<path d="M1373.5 708.3l-4.2 0.1M1367.0 729.0l3.6 0.2M1374.3 713.4l-0.6 3.9M1364.7 726.8l1.8 2.0M1366.7 726.9l-0.9 3.7M1371.2 716.9l-3.8 1.0M1368.1 716.8l-2.5 0.6M1362.3 726.9l-2.6 3.4M1372.0 716.8l-3.8 0.8M1367.7 720.1l-1.8 1.7M1364.9 728.2l-1.9 1.3M1374.4 717.1l1.8 0.7M1367.2 718.5l-4.4 0.7M1370.6 721.8l-0.8 1.8M1371.8 707.3l2.8 0.7M1362.5 729.5l1.2 4.2M1370.7 722.8l-2.5 2.1M1363.8 723.8l0.1 2.7M1370.6 716.0l1.8 2.8M1372.4 706.9l0.8 1.3M1359.8 725.7l1.0 3.9M1375.2 717.2l-2.8 1.6M1365.5 715.0l0.8 2.1M1366.5 714.4l-0.3 2.6M1367.8 718.8l3.5 1.2"/>
<path d="M1434.9 730.8l3.1 1.2M1438.8 732.7l-1.2 1.1M1436.9 730.1l2.8 3.3M1437.3 732.7l2.3 2.3M1424.9 735.3l-2.5 2.3M1425.6 737.9l-3.1 0.7M1436.9 728.8l-1.6 0.0M1428.1 735.9l-2.9 3.3M1430.8 732.7l-1.3 2.8M1435.4 735.0l2.5 0.1M1432.9 725.5l-1.3 1.0M1433.3 734.8l1.9 1.8M1424.6 740.9l-0.3 3.3M1425.8 738.4l-3.8 0.5M1435.6 725.7l-0.1 2.7M1427.6 739.7l2.7 1.7M1436.6 733.8l2.3 0.1M1431.2 738.3l3.5 2.0M1426.9 736.9l-1.6 0.4M1423.1 735.0l2.2 1.0M1432.9 732.3l3.6 1.5M1426.4 732.0l-3.3 2.1M1426.0 742.8l-1.8 1.2M1421.4 745.7l-1.5 0.9M1435.4 732.7l-1.6 3.6"/>
<path d="M1318.7 450.5l-3.7 2.1M1305.6 461.4l-2.2 3.4M1309.4 455.4l2.2 2.2M1302.4 464.8l-2.1 0.8M1313.9 456.5l3.6 1.4M1313.9 453.1l2.2 0.7M1314.6 454.2l-1.7 1.1M1299.8 461.7l-1.8 0.7M1300.7 464.9l3.4 1.0M1298.9 461.2l-2.0 3.6M1306.7 458.6l2.5 0.2M1304.5 463.0l-2.4 3.0M1310.4 458.8l2.4 1.0M1303.5 458.9l-1.5 1.6M1304.2 458.5l-3.1 1.4M1308.0 457.2l-4.2 1.1M1308.1 458.9l-2.1 0.9M1302.1 458.1l-0.0 3.8M1301.2 461.6l-2.9 0.1M1307.7 461.6l-2.5 0.9M1301.3 463.4l-2.9 3.1M1311.6 454.5l-0.1 2.4M1307.6 458.2l-4.1 1.1M1318.0 452.3l-1.9 0.2M1318.6 453.5l-2.5 1.1"/>
<path d="M1361.2 451.7l-3.5 1.8M1355.9 464.6l2.9 2.3M1355.2 460.8l3.2 2.3M1357.6 455.4l-2.2 0.1M1353.8 462.0l-1.0 4.1M1363.6 456.0l0.7 1.7M1349.6 466.6l-0.7 2.7M1363.1 454.2l1.2 2.5M1353.4 467.8l-0.9 3.0M1353.7 460.4l1.6 2.5M1357.8 464.6l-0.4 2.1M1347.5 464.6l1.8 3.4M1360.7 454.3l-2.2 1.8M1356.9 460.7l1.7 0.2M1359.7 459.9l1.6 4.0M1360.0 455.6l3.1 0.7M1357.1 457.3l2.9 0.4M1350.2 468.4l-0.9 2.2M1353.9 460.0l1.7 1.1M1360.7 456.6l-1.6 2.0"/>
<path d="M1383.3 599.7 L1356.6 782.4"/>
<path d="M1397.4 601.1 L1363.6 788.0"/>
<path d="M1374.9 606.7 L1359.4 650.3 L1374.9 655.9"/>
<path d="M1467.6 610.9 L1431.1 816.1"/>
<path d="M1515.4 630.6 L1459.2 818.9"/>
<path d="M1464.8 608.1 L1457.8 658.7"/>
<path d="M1481.7 655.9 L1467.6 655.9 L1459.2 720.5 L1442.3 748.6 L1473.2 757.1"/>
<ellipse cx="1459.2" cy="721.9" rx="20.2" ry="7.0"/>
<text x="1448.5" y="726.2" font-size="7" textLength="19.7" lengthAdjust="spacingAndGlyphs">绿化用地</text>
<path d="M1515.4 686.8 L1556.2 698.1"/>
<path d="M1515.4 686.8 L1508.4 719.1"/>
<path d="M1508.4 719.1 L1615.2 748.6"/>
<path d="M1498.5 733.2 L1491.5 757.1 L1644.7 797.8"/>
<path d="M1498.5 733.2 L1644.7 778.2"/>
<path d="M1502.8 766.9 L1499.9 782.4 L1554.8 797.8"/>
<path d="M1502.8 766.9 L1560.4 781.0"/>
<path d="M1469.0 818.9 L1470.4 820.3 L1518.2 831.6 L1516.8 838.6"/>
<path d="M1537.9 844.2 L1540.7 833.0 L1599.7 849.8"/>
<path d="M1549.1 588.4 L1647.5 612.3"/>
<path d="M1537.9 613.7 L1571.6 619.4"/>
<path d="M1532.3 627.8 L1571.6 644.6"/>
<path d="M1463.4 782.4 L1488.7 785.2 L1481.7 817.5 L1463.4 813.3 Z"/>
<path d="M1394.5 793.6 L1411.4 807.7 L1400.2 833.0 L1381.9 825.9 Z"/>
<path d="M1412.8 804.9 L1446.5 820.3 L1443.7 830.2 L1412.8 816.1 Z"/>
<path d="M1442.3 792.2 L1456.4 797.8 L1449.4 816.1 L1433.9 810.5 Z"/>
<path d="M1352.4 743.0 L1388.9 754.3 L1380.5 793.6"/>
<path d="M1358.0 757.1 L1403.0 773.9 L1473.2 790.8"/>
<path d="M1363.6 714.9 L1417.0 737.4 L1473.2 754.3"/>
<path d="M1369.2 726.2 L1391.7 733.2 L1383.3 759.9"/>
<path d="M1352.4 773.9 L1366.4 776.8 L1359.4 793.6"/>
<path d="M1363.6 712.1 L1346.8 754.3"/>
<path d="M1537.9 639.0 L1549.1 655.9 L1537.9 669.9 L1546.3 672.8" stroke-dasharray="6 4"/>
<path d="M1402.6 637.1l-1.2 2.4M1396.1 641.8l-3.5 0.3M1398.8 644.4l2.4 0.8M1395.7 653.0l2.8 0.1M1404.8 636.2l-1.5 1.9M1394.8 652.4l2.2 3.0M1396.9 649.6l-0.9 3.8M1403.8 631.5l-1.5 0.1M1399.8 633.0l-0.4 2.6M1400.1 636.9l3.1 2.3M1399.9 644.4l0.1 1.6M1399.5 636.5l0.1 1.5M1394.9 651.6l-2.5 2.3M1398.1 647.1l-1.1 1.8M1398.6 644.1l-1.4 1.6M1393.4 648.9l2.4 0.8M1401.3 639.0l3.2 1.9M1393.3 655.6l1.6 0.8M1393.7 651.2l2.7 3.1M1402.4 632.4l-2.5 2.5M1396.6 642.1l-4.3 0.7M1388.9 656.6l1.1 1.8M1399.1 648.1l4.0 0.3M1391.1 647.7l-2.2 0.7M1390.4 650.6l0.8 1.7M1390.8 652.0l-0.7 2.8M1394.6 649.8l-2.8 2.4M1397.9 650.4l-2.5 1.9M1395.8 644.6l3.8 1.7M1396.2 640.2l-4.0 1.0"/>
<path d="M1410.9 688.4l2.3 2.1M1421.4 676.0l0.0 3.5M1413.0 685.9l1.0 4.3M1413.3 686.5l2.3 0.3M1409.4 684.0l-0.2 2.0M1419.5 674.9l-1.5 3.8M1409.9 684.3l-2.2 2.0M1422.8 674.6l1.4 4.1M1417.0 686.1l-2.0 0.7M1420.0 683.3l3.8 1.5M1422.5 679.2l-0.6 1.7M1422.0 672.9l-2.9 2.3M1415.2 684.7l1.0 3.6M1412.3 689.7l1.4 3.7M1418.2 683.5l1.8 2.5M1409.7 687.2l4.0 1.0M1419.4 678.5l-4.3 0.4M1421.9 672.8l-2.2 3.0M1416.2 676.9l-2.7 0.7M1420.1 681.9l1.0 1.2"/>
<path d="M1512.3 663.1l1.9 0.2M1515.8 665.1l1.5 1.2M1513.9 665.8l-0.5 1.8M1507.9 673.8l2.8 0.0M1502.7 678.7l4.1 1.4M1513.4 667.0l3.6 0.5M1506.8 670.0l2.7 1.3M1509.7 663.8l-2.6 1.0M1502.0 671.4l0.4 3.4M1510.0 671.4l-0.1 3.0M1513.0 661.9l2.5 0.1M1502.2 670.0l0.4 1.6M1513.3 664.4l-3.3 1.3M1511.8 668.6l2.2 3.0M1502.8 674.1l-1.1 3.7M1501.1 673.3l-3.3 2.1M1512.3 661.5l1.4 1.1M1511.7 668.6l-1.7 3.4M1507.5 670.1l-3.3 0.8M1509.8 668.5l0.1 3.8"/>
<path d="M1427.5 732.8l0.6 2.7M1427.5 737.2l1.1 2.4M1426.5 736.2l-1.8 0.2M1422.0 743.6l0.9 2.7M1429.0 734.0l1.1 1.1M1436.3 733.9l1.8 2.3M1423.3 735.6l-3.8 1.3M1423.0 737.8l-2.3 3.2M1427.2 735.7l2.9 2.6M1435.7 733.5l3.1 1.2M1436.8 731.1l0.2 1.9M1422.7 743.1l3.8 0.8M1430.7 733.7l-4.1 1.4M1428.0 732.0l-0.8 2.7M1426.6 741.8l-1.2 1.4M1423.3 738.5l-0.6 2.4M1429.0 738.7l3.1 2.0M1428.0 740.9l-2.5 0.4M1427.9 732.3l0.9 3.2M1429.6 733.3l1.9 0.2"/>
<path d="M1396.4 793.8l1.9 2.8M1402.0 792.7l2.3 2.3M1396.2 800.3l2.0 1.1M1398.7 799.5l1.8 1.0M1391.6 798.2l1.4 2.3M1399.8 793.3l0.2 2.7M1402.6 796.3l1.0 4.1M1396.9 801.8l-0.3 3.5M1394.8 796.2l3.8 1.7M1396.8 799.0l0.4 3.1M1392.3 797.3l1.7 3.1M1395.3 793.0l-1.7 2.2M1391.2 799.1l3.1 2.4M1397.0 794.9l1.7 1.7M1394.0 797.6l-3.1 2.4"/>
<path d="M1505.6 735.0l-0.9 1.6M1494.4 736.9l2.1 2.2M1505.5 732.0l0.5 2.2M1508.2 731.5l0.8 1.4M1505.6 728.5l-1.6 0.9M1502.4 732.2l-2.2 0.8M1495.2 736.6l-3.6 2.5M1503.9 734.3l1.5 1.8M1499.1 741.5l3.3 0.5M1498.0 734.1l0.9 4.2M1496.7 735.0l-1.4 3.2M1499.8 732.5l-1.7 0.7M1496.3 736.2l-0.1 2.9M1503.1 735.5l-2.7 0.9M1497.8 741.0l2.4 0.1"/>
<path d="M1342.0 770.6l-1.5 1.2M1344.8 769.6l-1.0 1.5M1347.4 764.3l0.6 1.9M1343.9 762.7l1.8 0.8M1340.6 765.3l1.1 3.0M1343.7 764.5l-1.4 1.0M1345.7 769.5l-3.9 1.8M1346.2 762.2l-2.5 2.0M1339.4 769.5l3.9 1.2M1342.0 767.5l-0.2 1.8M1347.5 764.0l-3.3 2.5M1340.1 766.5l-2.6 2.4M1341.9 766.6l3.5 1.9M1345.8 767.3l1.2 2.2M1345.7 766.3l-2.4 0.9"/>
<path d="M1370.0 689.5l-3.4 1.6M1368.7 691.2l2.7 3.1M1370.1 687.7l2.0 0.5M1369.5 684.6l-2.6 1.7M1369.9 691.9l0.9 3.0M1369.1 699.4l1.8 0.6M1371.5 690.8l-2.9 2.0M1369.4 685.0l2.2 0.1M1368.9 687.4l-0.4 3.8M1366.9 697.0l-3.6 1.1M1368.3 693.7l2.8 3.4M1372.6 689.5l2.1 3.0M1371.2 693.8l1.7 3.8M1370.3 689.8l-0.8 3.8M1372.6 693.9l4.2 0.1"/>
<path d="M1163.6 639.7l-1.7 0.9M1160.5 644.7l-2.2 1.4M1167.7 638.0l1.9 0.3M1156.7 646.4l1.2 1.9M1158.5 639.8l-3.9 1.1M1161.6 640.9l1.9 2.7M1161.9 646.2l-3.6 0.5M1162.8 636.1l2.3 1.0M1156.5 645.0l-4.0 0.2M1165.1 635.7l1.2 1.0M1156.4 641.3l-0.2 2.4M1163.6 640.5l-0.7 2.3M1164.9 640.7l-1.8 2.3M1159.7 640.9l2.9 0.4M1161.0 638.8l-3.7 1.8"/>
<path d="M1296.2 623.5l0.1 2.0M1289.1 628.6l-1.8 0.1M1284.1 628.8l1.5 2.9M1287.9 630.8l2.1 3.7M1287.6 625.4l3.7 2.3M1293.2 626.1l3.1 0.6M1295.7 625.7l-1.8 0.4M1291.6 629.3l-0.5 4.3M1285.3 624.4l-2.3 0.4M1290.5 623.5l-1.0 4.2M1297.6 623.0l2.7 2.9M1284.6 629.1l-2.2 0.4M1289.4 626.8l2.7 2.5M1290.2 621.0l-1.7 0.4M1292.0 622.1l1.6 0.8"/>
<path d="M1024.3 500.0 L981.2 728.7"/>
<path d="M1032.3 500.0 L989.2 720.7"/>
<path d="M936.4 736.0 L982.8 736.0 L989.2 720.7"/>
<path d="M950.8 685.5 L984.4 695.1"/>
<path d="M976.4 599.1 L998.8 603.9"/>
<path d="M989.2 567.8 L1022.7 572.9"/>
<path d="M1088.3 500.0 L1033.9 741.4"/>
<path d="M1085.1 500.0 L1064.3 589.5"/>
<path d="M1080.3 500.0 L1072.3 538.4"/>
<path d="M1153.9 500.0 L1150.7 579.9 L1144.3 595.9 L1139.5 640.7 L1128.3 672.7 L1109.1 704.7 L1054.7 792.6 L1051.5 794.9"/>
<path d="M1157.7 500.0 L1154.5 579.9 L1148.1 595.9 L1143.3 640.7 L1132.1 672.7 L1112.9 704.7 L1058.6 792.6"/>
<path d="M1134.7 627.9 L1075.5 786.2" stroke-dasharray="5 4"/>
<path d="M1160.3 500.0 L1153.9 589.5 L1147.5 640.7"/>
<path d="M1035.5 500.0 L1032.3 564.0"/>
<path d="M1067.5 500.0 L1054.7 564.0"/>
<path d="M1032.3 560.8 L1096.3 575.2"/>
<path d="M1032.3 575.2 L1070.7 584.7"/>
<path d="M1045.1 519.2 L1041.9 557.6"/>
<path d="M1057.9 516.0 L1048.3 559.2"/>
<path d="M1041.9 519.2 L1070.7 525.6"/>
<text x="1040.3" y="595.9" font-size="7" transform="rotate(-10.0 1040.3 595.9)" textLength="17.6" lengthAdjust="spacingAndGlyphs">新开路</text>
<text x="1109.1" y="559.2" font-size="9" textLength="14.4" lengthAdjust="spacingAndGlyphs">南河</text>
<circle cx="998.8" cy="584.7" r="2.2"/>
<circle cx="995.6" cy="615.1" r="1.9"/>
<circle cx="992.4" cy="631.1" r="1.9"/>
<circle cx="1003.6" cy="605.5" r="1.9"/>
<text x="983.7" y="658.3" font-size="6">14</text>
<path d="M1107.5 530.4 L1150.7 511.2"/>
<path d="M1107.5 530.4 L1102.7 548.0 L1104.3 564.0"/>
<path d="M1083.0 481.4l0.5 3.9M1086.0 484.3l-0.2 2.3M1078.3 510.3l-2.3 2.6M1068.8 486.1l-0.7 4.0M1068.3 527.0l3.1 0.2M1055.9 498.5l-2.7 0.7M1055.4 523.2l-0.8 2.7M1042.6 530.2l-1.2 1.5M1068.0 523.3l-3.8 1.7M1043.7 519.7l-2.4 2.3M1048.0 509.1l0.5 2.2M1079.7 506.4l1.4 1.1M1057.2 491.4l2.2 1.8M1069.3 477.2l1.6 2.4M1054.6 524.4l-1.5 2.0M1061.5 486.4l3.2 1.1M1075.1 513.3l3.5 1.2M1064.1 495.5l3.1 1.3M1068.8 491.6l0.3 3.5M1064.4 499.4l2.4 1.6M1076.5 507.7l-3.2 0.1M1053.0 513.2l-1.5 3.4M1064.5 522.6l-2.7 0.0M1071.5 481.0l-1.9 3.6M1053.9 521.5l-1.7 0.1M1059.7 517.1l-2.4 2.4M1077.9 483.9l1.7 0.0M1052.9 531.8l3.1 0.3M1058.6 495.9l-2.5 1.2M1069.7 479.0l-1.2 2.9M1067.3 522.6l2.2 0.0M1071.4 520.4l-0.0 1.6M1063.3 518.9l-1.5 1.0M1067.0 489.5l-0.2 2.8M1076.9 514.9l-4.1 1.1M1074.8 495.2l1.4 0.7M1076.0 489.5l-1.0 2.2M1071.4 523.8l-0.2 1.6M1056.8 513.8l4.3 0.9M1081.5 486.9l2.8 0.0M1062.7 530.6l-3.2 2.2M1059.6 486.1l1.8 0.1M1080.6 490.5l-0.1 2.2M1060.9 482.4l0.8 1.3M1071.8 478.3l-2.9 2.6M1079.7 506.8l-3.3 2.8M1062.0 476.0l-1.5 1.5M1056.2 514.7l-1.7 0.1M1052.5 506.3l-3.0 0.0M1069.0 495.2l-1.9 1.7M1069.4 513.8l-2.5 3.3M1070.2 520.7l-2.2 2.4M1064.3 512.3l1.7 0.4M1049.8 513.2l3.6 0.6M1072.3 494.5l2.9 2.2M1074.4 489.2l2.4 2.1M1055.6 510.0l3.7 1.8M1079.2 503.4l2.0 1.2M1052.1 501.3l1.8 2.5M1075.5 511.6l-0.8 3.3M1074.1 504.5l0.6 1.4M1082.4 482.3l1.7 0.7M1063.1 523.7l1.4 0.6M1050.3 501.7l1.8 1.9M1044.2 517.9l1.5 1.6M1058.3 515.4l1.1 2.2M1064.0 537.0l-2.0 2.2M1046.6 531.7l-2.7 0.9M1067.3 526.3l-1.8 0.6M1066.1 507.0l2.3 0.9M1071.6 501.5l-1.3 3.1M1049.7 508.9l4.0 0.2M1083.2 490.0l3.7 0.9M1053.2 523.3l3.3 2.4M1080.2 491.8l1.6 4.0M1061.5 520.7l-1.1 1.9M1050.6 509.0l-1.6 1.2M1050.6 524.6l-1.5 3.1M1074.8 508.6l-1.5 1.5M1055.7 501.0l1.4 1.3"/>
<path d="M1022.4 575.8l-3.3 1.2M1021.2 575.2l-0.9 3.0M1019.7 575.6l-0.7 3.2M1026.3 577.2l2.4 2.2M1024.6 569.4l-2.6 0.5M1025.9 571.6l-3.9 2.2M1027.7 566.7l-2.2 2.7M1032.7 565.5l-1.6 1.5M1025.7 569.2l2.9 2.6M1026.5 575.0l0.1 2.8M1029.1 568.2l-4.5 0.1M1025.3 565.3l-1.5 2.6M1027.7 564.0l0.7 1.4M1026.1 570.9l1.0 1.5M1021.8 569.1l2.4 1.5M1025.2 572.5l-0.3 2.7M1019.5 573.9l-0.8 4.3M1023.4 572.9l2.0 3.1M1028.7 571.5l1.9 0.0M1023.2 574.0l0.8 2.5"/>
<path d="M1084.3 558.2l-1.0 4.3M1082.4 562.9l-2.1 1.3M1079.3 572.2l-0.3 3.2M1078.0 570.5l1.3 3.2M1081.4 569.1l0.9 2.1M1082.0 557.7l2.0 2.2M1082.0 556.0l3.1 2.4M1075.6 568.3l-2.8 2.3M1080.2 558.1l-2.4 0.9M1083.1 560.2l-2.8 1.0M1075.3 564.5l0.0 1.6M1079.9 570.2l-0.9 4.0M1076.8 567.8l0.2 1.8M1081.3 569.4l-2.0 2.3M1084.1 565.0l-3.2 0.5M1078.8 571.5l1.9 1.1M1076.9 568.2l-0.7 2.8M1077.3 562.0l-2.0 2.4M1081.0 568.3l-4.2 0.8M1081.7 555.6l1.0 2.7"/>
<path d="M1017.6 612.3l-1.8 0.6M1020.8 610.3l-2.7 1.0M1014.3 613.0l-0.2 3.9M1013.0 611.5l-1.5 0.1M1013.0 606.1l-2.0 2.0M1015.5 603.0l-2.0 0.8M1010.6 612.4l2.6 0.6M1016.9 602.9l-1.0 1.2M1016.8 608.7l3.1 1.0M1014.5 608.7l-3.1 1.8M1011.1 611.7l2.3 0.4M1021.3 608.8l-4.1 0.4M1017.5 614.0l-2.1 2.0M1019.3 603.5l2.0 0.8M1015.9 613.3l-1.5 3.8M1009.7 612.6l-2.3 0.2M1018.8 612.6l3.6 1.3M1018.6 604.5l-0.5 1.4"/>
<path d="M1068.9 640.1l-2.3 2.0M1063.3 643.6l-0.8 1.5M1063.4 643.8l-2.5 1.9M1069.9 644.1l-0.6 2.1M1070.4 641.5l1.1 2.6M1071.4 641.9l-0.9 1.9M1066.8 639.1l0.3 3.6M1064.7 645.7l1.8 2.8M1069.2 637.2l-0.9 2.2M1066.1 643.3l-0.2 2.2M1069.1 638.0l1.0 2.0M1072.3 638.8l-2.2 0.4M1065.9 645.7l4.1 0.3M1067.5 638.2l0.6 3.5M1064.5 643.7l-2.8 2.2"/>
<path d="M1154.8 590.3l1.8 1.4M1155.2 598.2l-1.0 4.2M1160.3 593.8l0.3 3.0M1155.5 594.9l-2.9 0.6M1153.1 597.3l2.7 2.0M1156.9 592.5l-3.7 0.9M1151.3 595.2l-1.9 2.7M1158.0 591.2l2.8 0.3M1159.8 589.7l1.9 0.3M1159.8 588.7l3.1 1.8M1162.1 589.8l-1.7 3.5M1154.3 596.9l-2.1 1.4M1157.5 597.9l-0.9 1.2M1154.8 597.5l-3.3 0.5M1156.6 587.3l-0.5 2.0"/>
<path d="M1163.7 560.0l0.2 1.6M1169.2 563.1l-3.6 1.1M1160.9 566.4l-0.6 4.3M1165.9 559.1l-1.2 1.6M1173.9 561.4l-2.8 0.9M1164.3 564.1l-1.8 2.3M1163.2 562.3l-1.4 1.7M1161.6 563.1l-0.8 1.5M1163.9 566.7l2.5 2.8M1163.2 559.6l0.2 4.1M1170.1 558.1l-2.0 2.7M1166.6 563.7l-0.1 2.0M1169.0 558.9l2.3 3.4M1167.7 562.3l-1.8 2.4M1165.0 563.1l2.5 0.2M1160.5 567.5l-3.3 1.0M1162.1 566.0l2.5 3.0M1169.0 562.8l-1.6 1.7"/>
<path d="M1164.8 640.1l-2.9 2.8M1156.7 643.5l0.7 1.6M1165.9 640.8l0.1 3.1M1163.5 636.5l1.5 3.2M1160.7 642.0l1.5 1.6M1161.8 639.9l-4.1 0.8M1165.5 637.2l-0.1 1.8M1156.7 640.4l-0.0 4.4M1163.1 639.4l2.8 3.3M1155.8 648.1l-1.5 0.7M1166.7 639.9l0.9 2.6M1161.8 641.7l-3.8 1.7M1156.0 640.2l-2.6 2.2M1160.6 638.2l4.1 1.0M1158.4 643.1l-2.1 0.2M1160.3 638.3l-0.7 3.6M1156.8 646.7l-4.0 0.4M1165.8 643.2l-2.0 2.4"/>
<path d="M1033.7 565.1l-1.4 3.2M1025.7 576.0l2.1 3.5M1029.5 564.5l-1.7 0.0M1024.8 578.1l4.2 1.0M1027.3 572.7l-2.8 1.4M1029.6 567.7l0.5 4.3M1027.8 574.6l0.1 1.9M1026.8 577.0l-2.3 1.7M1029.4 579.8l3.8 1.7M1027.2 579.3l2.0 1.0M1030.5 572.5l0.6 2.7M1028.6 572.2l2.8 3.4M1024.3 575.2l-0.4 2.5M1027.2 564.9l-1.4 2.2M1030.6 561.8l0.5 2.4M1027.7 569.1l-1.4 2.4M1029.0 565.9l0.4 3.1M1031.8 566.7l0.4 1.7M1023.8 576.7l1.7 1.1M1029.0 566.9l-2.1 0.6"/>
<path d="M998.3 663.8l3.2 1.6M1001.0 664.3l-2.9 2.0M999.8 667.2l-1.3 2.5M997.1 665.2l-2.6 0.4M1001.5 663.0l-3.1 2.7M999.3 665.3l-0.1 2.3M998.0 663.3l-1.7 2.5M1004.0 670.0l-4.0 1.7M1003.1 662.5l4.1 1.8M1003.3 667.2l-1.0 2.6"/>
<path d="M1040.0 365.0 L1611.0 556.9"/>
<path d="M1060.0 374.8 L1560.0 542.8"/>
<path d="M1100.0 410.2 L1576.0 570.1"/>
<path d="M1090.0 410.8 L1572.0 572.8"/>
<path d="M1120.0 423.9 L1578.0 577.8"/>
<path d="M1100.0 429.2 L1566.0 585.8"/>
<path d="M1150.0 494.0 L1572.0 635.8"/>
<path d="M1150.0 502.0 L1568.0 642.4"/>
<path d="M1170.0 522.7 L1560.0 653.8"/>
<path d="M1160.0 527.4 L1540.0 655.0"/>
<path d="M1200.0 486.8 L1575.0 612.8"/>
<path d="M1180.0 490.1 L1570.0 621.1"/>
<path d="M1110.4 180.0 L1032.1 485.0"/>
<path d="M1094.9 228.4 L1032.5 485.0"/>
<path d="M1088.1 244.0 L1055.2 373.8" stroke-dasharray="5 4"/>
<path d="M1086.2 223.6 L1096.9 226.5"/>
<path d="M1081.4 243.0 L1088.1 244.9"/>
<path d="M1076.5 264.3 L1082.3 265.7"/>
<path d="M1072.6 285.6 L1075.5 286.2"/>
<path d="M1168.6 180.0 L1145.3 268.2"/>
<path d="M1169.9 180.0 L1146.9 268.2"/>
<path d="M1176.3 207.1 L1161.8 265.3" stroke-dasharray="6 5"/>
<path d="M1161.8 265.3 L1106.2 485.0"/>
<path d="M1147.2 284.7 L1092.4 485.0"/>
<path d="M1138.5 294.3 L1091.0 485.0"/>
<path d="M1136.6 294.3 L1084.8 485.0"/>
<path d="M1109.5 275.0 L1094.0 335.0"/>
<path d="M1115.3 288.5 L1088.1 393.2"/>
<path d="M1103.6 284.7 L1078.4 380.0"/>
<path d="M1219.0 205.2 L1147.6 485.0"/>
<path d="M1208.3 304.0 L1162.2 485.0"/>
<path d="M1106.6 273.0 L1145.3 282.7"/>
<path d="M1083.3 278.8 L1122.1 287.6 L1125.0 284.7 L1130.8 294.3 L1173.4 302.1"/>
<path d="M1160.8 267.2 L1199.6 275.9"/>
<path d="M1169.5 302.1 L1165.7 317.6" stroke-dasharray="8 4"/>
<path d="M1163.7 325.3 L1156.0 356.4 L1163.7 369.9"/>
<path d="M1230.0 259.5 L1219.9 257.5 L1213.1 282.7 L1230.0 286.6"/>
<path d="M1202.5 285.6 L1230.0 296.3"/>
<path d="M1217.0 304.0 L1212.2 325.3 L1215.1 327.3 L1210.2 346.7 L1205.4 350.5 L1210.2 362.2" stroke-dasharray="7 4"/>
<path d="M1064.9 306.0 L1103.6 313.7"/>
<path d="M1063.9 315.7 L1103.6 323.4"/>
<path d="M1066.8 309.8 L1101.7 317.6"/>
<circle cx="1119.7" cy="224.2" r="1.6"/>
<circle cx="1113.3" cy="248.8" r="1.2"/>
<circle cx="1202.5" cy="293.4" r="2.3"/>
<path d="M1120.0 237.2l-0.3 1.9M1116.2 242.9l-0.8 3.3M1118.6 240.2l2.1 2.5M1117.2 241.2l-0.4 2.0M1114.6 241.5l-0.2 3.3M1116.2 239.2l1.9 2.7M1117.6 240.9l1.4 0.1M1125.7 236.4l2.3 0.8M1129.6 234.1l-0.4 2.3M1121.2 236.1l-2.5 1.0M1118.9 238.5l3.0 2.0M1127.8 234.8l-0.8 2.5M1115.8 238.6l-1.1 1.2M1122.2 235.5l1.7 0.1M1125.0 237.4l-2.9 0.1M1121.5 235.8l-2.5 0.3M1127.4 233.2l-2.1 1.2M1116.9 240.1l2.6 0.6"/>
<path d="M1131.2 264.6l2.5 1.5M1136.5 263.7l-2.0 0.3M1137.0 261.1l-3.1 1.1M1138.3 262.5l2.4 2.6M1141.5 264.7l1.6 2.9M1137.5 264.6l-1.9 1.4M1133.6 264.9l-1.2 2.3M1139.0 257.9l2.4 0.1M1129.7 265.9l3.3 0.9M1130.5 260.2l-2.1 2.1M1133.6 263.3l-0.6 3.6M1134.8 262.7l0.3 2.3M1136.7 258.9l-2.0 2.9M1138.2 262.1l0.7 1.3M1129.2 263.6l-3.2 1.3M1130.7 265.0l-2.0 1.4M1139.0 259.1l1.3 2.2M1137.6 261.4l2.0 2.8M1133.1 262.0l1.9 1.6M1137.2 260.8l-1.2 2.2M1128.7 267.1l1.6 2.1"/>
<path d="M1153.9 221.1l1.7 0.4M1160.9 227.8l-0.1 1.4M1156.7 225.7l1.7 1.0M1156.9 222.5l2.0 1.8M1156.6 226.4l-0.7 1.3M1154.6 223.5l-1.9 2.0M1159.0 223.2l1.4 0.9M1161.2 225.1l2.2 0.4M1156.2 225.4l-2.4 1.0M1160.7 224.7l1.8 2.1M1156.4 225.0l-0.3 2.9M1160.7 227.6l1.8 1.0M1163.7 225.3l1.5 3.3"/>
<path d="M1167.2 237.2l1.1 0.8M1176.7 227.7l-0.9 0.9M1167.1 233.4l2.3 0.6M1171.6 233.7l0.1 3.7M1178.0 227.1l-3.4 0.9M1174.5 231.0l1.8 1.0M1168.3 231.8l-0.7 1.9M1177.8 229.8l-1.3 0.8M1178.9 228.8l-0.7 1.7M1176.3 229.4l-1.7 2.1M1167.2 233.0l-0.9 0.9M1175.6 230.6l-1.3 1.6M1173.0 231.4l-1.0 1.0M1173.0 230.0l-0.5 1.8M1168.1 232.1l-2.0 0.7M1180.0 229.8l1.7 2.0M1166.7 237.2l-0.6 1.4M1173.7 231.2l-1.0 1.7M1180.2 229.0l3.2 0.7M1179.0 227.5l-2.1 2.7"/>
<path d="M1164.0 252.6l-1.6 0.9M1163.5 255.5l0.4 3.5M1163.5 257.0l-2.7 0.3M1163.1 255.4l0.8 2.4M1161.8 253.2l2.3 2.5M1163.8 255.6l-1.4 2.1"/>
<path d="M1206.4 241.6l2.4 0.1M1207.7 237.7l0.1 1.4M1204.7 243.6l3.2 0.3M1208.5 241.7l2.5 2.6M1204.4 241.3l-2.6 0.4M1205.5 238.4l1.9 0.0M1203.7 244.2l2.6 2.6M1205.7 238.8l-1.3 1.6M1204.3 238.8l-2.8 1.6"/>
<path d="M1199.7 266.1l0.8 1.4M1198.4 267.3l-0.3 1.6M1197.0 266.0l1.4 0.1M1197.1 263.3l-1.5 0.5M1201.1 266.2l1.4 2.2M1201.9 264.3l1.3 3.5M1198.7 268.8l1.3 1.9M1198.0 266.8l-2.8 1.1M1198.4 269.2l-1.6 1.9"/>
<path d="M1226.2 234.1l-1.0 3.1M1226.2 237.6l2.4 0.5M1218.7 240.0l0.8 2.3M1222.6 238.4l-1.8 0.7M1218.0 237.6l3.2 1.2M1227.2 233.9l1.5 3.2M1228.1 238.8l-2.0 0.0M1215.1 239.1l-0.0 1.3M1218.2 239.3l-0.9 1.4M1216.0 239.2l1.5 0.4M1216.7 241.9l-1.3 0.5M1227.0 238.4l-0.9 1.8M1225.7 234.2l3.6 0.5M1218.6 241.9l-1.0 1.0M1216.2 241.1l2.6 1.3M1223.8 235.8l0.1 1.8M1227.5 236.9l-1.6 2.3M1216.2 242.6l-2.0 1.6"/>
<path d="M1216.5 251.7l-1.9 1.8M1215.0 251.8l1.0 0.8M1216.1 253.2l-1.1 1.4M1216.1 252.0l-0.6 2.3M1216.1 252.4l-2.4 0.9M1217.4 252.4l1.8 0.7"/>
<path d="M1210.6 299.7l0.1 2.0M1222.7 293.4l1.2 2.8M1218.7 290.9l-1.4 3.4M1214.1 302.0l-1.7 1.2M1210.4 304.5l0.6 2.1M1214.7 300.0l-3.3 1.2M1216.4 293.0l0.5 1.2M1208.9 301.0l2.1 1.3M1209.4 303.7l0.5 1.8M1216.0 294.9l3.3 0.3M1219.8 297.3l1.2 1.5M1215.3 293.7l-2.9 0.3M1212.6 294.9l1.5 1.8M1219.5 290.1l-0.4 1.4M1222.4 293.8l-2.6 1.7M1208.1 300.7l2.6 0.3M1206.3 301.6l3.0 1.8M1217.3 293.3l-1.6 0.2M1208.2 302.0l-1.2 0.9M1218.6 294.9l-1.7 1.2M1205.3 301.5l-1.6 1.9M1216.5 293.1l1.1 1.4M1220.3 295.1l2.7 1.4M1207.1 303.8l2.2 2.3M1218.3 296.6l1.1 0.8M1217.2 297.6l3.3 0.1M1219.3 292.4l-0.2 2.9M1221.2 293.8l-0.2 3.2M1211.6 295.6l-0.3 2.3M1211.1 299.6l1.6 1.3"/>
<path d="M1108.2 302.0l0.5 3.3M1094.2 309.2l-2.2 2.3M1089.9 300.3l-2.8 0.3M1096.4 297.5l2.5 0.9M1104.7 308.4l-1.5 2.7M1103.7 303.8l3.4 1.5M1100.7 301.7l1.2 0.8M1104.6 300.9l-0.9 1.6M1103.1 305.5l-1.5 3.2M1099.0 312.9l2.8 0.1M1089.6 296.5l0.7 2.8M1093.2 290.4l-0.1 3.2M1101.7 313.7l-2.1 0.4M1087.6 303.3l1.8 1.5M1108.8 303.4l-0.7 3.6M1100.2 305.3l2.3 0.0M1085.3 306.6l-1.3 0.9M1096.2 306.1l-0.1 1.3M1097.2 311.3l0.4 1.4M1095.0 301.0l-1.4 0.0M1085.8 303.0l-0.6 3.6M1093.0 292.5l-0.3 2.1M1107.1 295.7l-0.6 1.8M1097.7 303.6l1.0 2.5M1091.9 308.7l-2.2 0.1M1103.0 304.9l-2.6 1.7M1100.8 306.8l2.3 1.6M1086.5 307.4l1.8 1.1M1090.7 292.1l-1.4 0.6M1111.7 299.0l-1.2 3.1M1101.5 293.4l-1.2 0.6M1103.8 298.6l-1.2 1.0M1093.9 310.0l-1.0 2.8M1095.8 308.8l-1.9 0.2M1110.5 301.6l-1.2 2.0M1096.3 303.2l1.3 0.5M1088.9 302.4l-2.0 0.7M1103.1 295.9l-3.3 1.1M1099.0 297.6l1.9 1.8M1102.5 309.4l2.8 0.4M1094.5 304.1l-0.5 3.7M1100.2 291.3l-3.6 0.5M1099.4 302.4l2.6 1.9M1103.0 305.4l-2.7 0.7M1100.9 299.1l2.2 1.0M1086.7 306.4l-2.2 0.1M1092.6 308.1l2.7 0.5M1089.2 303.8l-1.5 3.2M1097.0 313.6l-0.6 2.4M1087.1 297.8l1.1 2.3M1106.0 310.9l1.6 2.9M1107.1 299.8l0.1 2.5M1093.8 291.3l1.0 0.8M1096.8 301.7l-3.5 0.5M1096.7 303.8l3.0 1.0M1091.3 297.9l-1.3 0.5M1094.1 307.5l-1.6 0.0M1101.2 309.8l1.8 3.1M1087.4 307.9l1.9 2.8M1097.1 311.5l-3.5 1.3M1092.0 291.2l0.1 1.8M1088.6 306.1l-1.8 2.0M1089.6 306.4l3.5 0.7M1100.0 297.1l-3.7 0.4M1089.7 304.6l2.3 1.6M1099.2 300.6l-2.0 1.7M1099.3 307.5l-1.4 0.2M1090.4 298.1l-1.6 1.7M1104.9 297.8l-2.7 0.3M1108.4 305.9l-1.7 1.2M1102.1 314.3l3.5 0.7M1105.7 296.0l-2.7 0.4M1102.4 298.7l1.1 0.9M1099.4 297.0l2.4 1.0M1090.5 303.7l-2.6 1.1M1106.9 301.2l0.5 2.3M1094.2 301.7l-2.7 2.2M1099.9 308.3l1.0 0.8M1105.4 301.9l1.9 3.2M1096.6 296.0l-2.5 2.3M1102.3 313.5l0.4 1.9M1097.1 304.7l-0.2 2.0M1095.8 311.7l-1.9 2.3M1103.9 308.2l1.6 0.1M1093.8 311.6l-0.1 1.8M1088.1 295.8l3.6 0.4M1093.2 290.0l-1.2 2.2M1105.1 305.4l-1.5 3.3M1108.1 303.6l3.1 1.2M1104.4 310.3l-2.9 2.2M1098.3 296.1l-0.2 3.2M1093.9 310.7l-0.6 3.0M1098.3 306.2l-1.5 1.6M1107.9 303.4l1.0 2.4M1104.5 306.3l1.3 1.5M1099.8 305.8l3.3 1.7M1102.5 304.7l0.4 1.3M1098.1 305.0l3.6 1.0M1097.9 300.0l1.9 0.2"/>
<path d="M1076.4 314.4l2.1 1.3M1074.3 313.1l-1.4 2.1M1090.7 316.6l2.8 0.8M1081.2 316.6l-2.1 0.4M1094.9 312.8l-0.6 1.1M1093.6 315.1l0.4 2.5M1078.5 309.9l-1.6 2.3M1067.5 308.4l-1.9 0.4M1075.1 313.4l1.4 3.3M1099.7 312.4l1.3 1.1M1080.9 310.9l-1.8 3.0M1068.5 305.7l1.9 0.7M1069.9 310.7l1.3 2.8M1097.4 322.0l0.7 2.8M1069.5 312.8l-3.2 1.2M1070.6 307.7l-2.9 0.9M1092.2 310.4l-0.5 1.2M1089.9 318.5l0.7 1.1M1089.3 320.8l-0.8 2.0M1075.8 316.2l-2.2 0.2M1071.7 317.7l0.5 2.3M1075.4 315.1l-2.4 0.1M1094.7 314.7l0.8 3.2M1098.0 319.5l-2.0 2.7M1095.8 321.4l-0.2 2.2M1065.3 311.0l0.5 1.1M1099.7 314.5l-1.3 0.3M1076.9 316.1l-1.5 2.5M1082.7 309.0l-2.7 1.6M1081.4 314.3l-2.0 1.4M1081.5 313.4l-2.1 2.3M1076.1 315.9l1.1 2.7M1077.3 317.5l-3.1 0.6M1078.5 311.3l0.6 2.7M1066.2 311.4l-1.4 0.3M1095.6 316.9l-3.1 0.0M1089.3 317.9l0.4 1.5M1093.8 320.2l-1.1 1.4M1082.3 313.9l1.0 2.3M1079.9 319.0l-1.4 3.4M1097.0 312.5l-1.7 1.5M1085.5 315.0l-1.4 1.5M1088.7 313.3l-1.9 1.6M1086.3 320.3l0.8 1.0M1095.9 316.4l-1.5 3.0M1096.0 314.8l-2.2 0.1M1089.4 318.9l1.0 2.1M1078.1 311.1l0.9 3.2M1066.2 316.6l-2.1 1.6M1087.6 312.3l-2.5 2.3M1078.3 313.0l1.5 1.2M1094.1 317.5l0.5 2.8M1072.5 306.1l1.2 2.4M1071.4 312.3l1.0 1.6M1090.9 313.6l-2.2 2.3M1079.0 307.6l-2.3 1.2M1084.7 316.3l-0.5 3.5M1064.5 316.1l-0.8 2.1M1095.5 320.7l-0.4 1.2M1086.7 313.5l-0.8 3.2M1069.0 315.4l1.1 1.6M1067.2 306.4l1.7 1.9M1098.1 312.6l1.3 1.7M1087.4 312.9l-0.8 1.4M1066.5 311.9l-1.0 1.2M1066.5 312.9l3.5 0.7M1089.6 311.0l0.4 1.3M1068.5 309.5l-3.3 1.3M1090.8 316.8l-0.7 2.4M1087.7 314.6l1.1 3.2M1075.7 311.4l-2.0 3.1M1077.1 312.0l0.5 1.7M1076.8 316.1l2.0 1.4M1074.7 313.3l-1.2 1.0M1082.5 310.1l-1.3 2.6M1073.3 309.0l1.2 1.7M1095.1 320.4l-1.8 1.4M1081.5 310.0l0.5 3.6M1068.5 310.0l2.7 1.9M1075.5 312.4l2.9 0.5M1082.2 317.2l-2.0 2.4"/>
<path d="M1073.6 327.3l-0.4 1.3M1081.7 328.6l0.0 2.2M1071.7 329.4l-1.2 1.0M1072.1 330.1l0.3 3.2M1076.0 331.2l-1.9 0.8M1077.0 328.7l0.5 3.3M1079.2 329.7l1.8 1.8M1077.1 328.6l3.3 0.2M1075.6 326.4l-2.4 1.2M1079.5 329.1l-1.3 3.3M1071.3 328.2l2.5 1.4M1072.8 326.1l1.5 0.7M1076.9 327.9l0.1 1.3"/>
<path d="M1073.2 336.4l1.3 0.4M1068.6 342.4l2.1 1.2M1071.3 345.2l-1.9 0.8M1071.7 348.4l2.8 0.8M1078.3 335.6l-1.5 0.5M1080.9 339.8l-3.2 1.1M1073.7 339.8l-2.0 1.0M1067.4 337.8l1.3 1.0M1079.5 331.9l1.6 3.3M1076.9 335.9l2.0 0.7M1074.8 345.5l0.9 3.6M1067.8 337.8l-1.4 0.4M1079.6 336.2l2.1 2.6M1077.1 344.1l-0.7 3.5M1080.0 332.4l-1.7 2.5M1073.3 332.7l-1.8 2.6M1067.0 339.1l2.6 0.5M1071.3 346.9l1.0 3.6M1077.5 335.4l1.9 1.3M1078.9 340.8l-1.9 0.7M1068.7 346.3l-1.6 2.4M1081.4 337.9l-1.3 3.1M1072.3 347.6l-0.7 1.3M1070.7 344.3l2.1 2.9M1071.2 341.5l-0.0 3.6M1074.6 344.8l-1.7 2.0M1084.1 336.8l-1.8 1.9M1065.7 342.1l-0.7 1.4M1075.6 335.8l1.1 3.1M1081.5 336.9l0.4 2.6M1085.0 336.6l-0.5 1.4M1077.2 329.9l2.7 1.0M1072.0 345.0l-0.9 1.4M1084.4 338.2l-1.8 3.3M1078.8 334.9l-3.1 1.9M1074.4 332.8l1.2 2.8M1070.1 337.6l0.2 1.6M1071.2 335.7l-1.2 1.3M1078.1 330.0l-1.1 2.6M1071.0 343.8l-0.4 2.8M1069.7 342.6l-2.4 1.4M1069.5 340.6l-1.3 0.5M1074.3 339.3l0.3 1.2M1071.3 346.9l0.3 2.0M1070.5 335.5l3.2 0.8"/>
<path d="M1108.0 324.3l0.8 1.2M1113.5 328.4l-1.8 1.8M1123.2 327.8l-0.3 1.3M1116.0 330.2l3.2 1.4M1104.3 327.6l-2.3 0.0M1115.2 327.5l1.9 0.8M1117.6 329.2l-2.3 1.9M1112.1 328.9l-1.6 0.4M1115.3 328.7l-1.3 0.0M1112.9 326.0l-0.3 3.3M1114.6 330.0l1.7 2.6M1112.1 325.7l2.8 1.5M1114.8 326.5l-2.5 2.6M1116.5 329.7l-1.6 1.1M1110.4 324.1l-2.7 0.4M1121.2 326.6l-1.7 1.4M1114.9 328.0l-1.9 1.3M1108.6 323.6l-0.1 1.6M1108.9 328.1l2.6 0.4M1111.6 326.1l-2.1 1.6M1105.8 324.2l0.7 1.1M1119.4 330.9l2.5 1.1"/>
<path d="M1115.6 346.8l-3.1 1.3M1123.5 337.1l1.2 3.5M1110.9 337.8l1.3 2.2M1108.3 335.5l-2.8 1.0M1112.2 341.6l0.8 2.1M1113.5 339.5l-2.1 2.7M1103.2 349.3l-1.7 0.3M1113.3 337.4l1.0 0.8M1114.7 345.5l1.3 0.2M1118.7 349.5l-1.3 1.3M1111.4 345.2l-1.2 1.6M1112.7 346.5l1.7 1.6M1114.7 339.1l2.1 0.4M1109.2 341.2l0.9 2.5M1107.3 344.9l-1.3 0.5M1108.6 334.3l-0.4 2.6M1115.0 346.0l-1.9 0.7M1106.1 350.7l-2.5 1.0M1112.8 338.5l1.6 2.5M1120.6 344.3l1.8 1.0M1121.1 342.0l0.3 3.2M1113.7 351.7l1.5 2.6M1107.1 346.1l2.0 2.3M1121.3 341.6l0.4 1.4M1110.8 336.9l-1.6 1.9M1105.2 342.7l2.4 2.0M1119.5 346.2l-2.1 1.5M1107.4 332.5l0.8 2.5M1117.3 353.8l2.4 1.2M1110.2 347.5l0.2 2.0M1114.5 350.7l-0.6 1.3M1109.1 333.1l1.5 1.3M1112.5 346.3l-1.4 0.5M1115.8 342.9l1.5 1.5M1119.6 346.5l-1.9 1.6M1108.8 351.2l-2.0 1.3M1115.1 346.4l2.8 0.4M1107.8 338.5l0.9 3.3M1112.6 348.3l1.2 2.3M1110.2 345.1l-2.9 0.7M1113.1 333.7l0.2 2.2M1112.9 336.3l-0.9 1.4M1109.7 341.9l-2.1 0.6M1116.7 335.6l1.3 2.3M1118.7 336.6l-2.3 1.4M1107.9 339.9l-2.5 1.4M1110.8 340.1l-1.9 1.7M1120.7 349.3l-2.2 1.9M1118.3 338.3l1.3 3.4M1118.3 336.9l0.5 2.4M1117.6 354.0l-2.4 1.4M1118.3 345.8l2.2 0.2M1113.9 348.9l1.2 2.5M1113.8 335.9l1.2 0.5M1114.5 337.3l0.2 1.3M1102.9 348.9l-1.3 0.4M1112.0 347.0l-0.4 1.8M1116.4 341.7l-1.5 0.1M1105.6 345.8l1.1 1.4M1116.1 353.9l2.0 2.4M1119.9 339.2l2.7 0.2M1117.3 337.8l-0.7 2.2M1115.5 337.9l1.1 2.2M1107.9 342.9l-1.7 2.9M1105.9 338.7l0.9 3.0M1111.6 350.7l-1.4 2.2M1104.4 344.8l-1.0 1.3"/>
<path d="M1151.4 340.9l-1.0 1.2M1156.7 338.2l-1.6 0.7M1152.3 339.1l-1.8 2.4M1150.7 344.7l0.5 2.4M1151.4 338.1l-2.0 0.7M1153.4 336.4l2.5 1.0M1146.9 344.1l2.5 1.8M1153.7 340.3l1.2 0.6M1149.6 339.1l-1.6 2.0M1156.5 338.9l-1.6 2.9M1149.5 340.8l3.0 0.6M1152.6 340.8l-0.1 2.4M1154.7 337.1l3.3 1.5M1154.7 341.0l-2.3 0.1M1146.0 345.2l0.1 2.2M1152.6 337.9l-1.8 0.2M1148.8 345.4l2.3 2.1M1147.1 343.7l0.2 1.9"/>
<path d="M1155.4 373.0l-1.6 0.4M1149.2 380.9l-1.8 1.9M1156.2 371.6l-1.0 1.6M1147.6 376.0l1.0 3.0M1148.2 377.2l-0.4 3.5M1148.6 373.3l0.4 1.8M1151.4 372.1l0.6 3.4M1150.1 377.9l-2.0 0.1M1152.4 375.6l1.4 2.5M1153.4 377.3l-0.5 3.0M1152.8 375.3l0.5 1.5M1149.4 376.9l3.2 0.1M1151.0 375.4l-0.8 1.1M1151.6 380.4l3.4 0.4M1154.7 376.6l-2.1 1.0M1150.2 377.4l-1.8 1.6M1155.5 374.3l-1.8 1.8M1151.8 373.0l-0.6 2.2"/>
<path d="M1118.8 379.5l-0.6 2.6M1113.9 376.2l-1.8 0.4M1117.8 373.8l-1.2 1.5M1116.8 377.9l3.3 0.3M1116.4 373.7l1.5 2.2M1117.6 373.2l1.8 0.4M1117.0 375.0l-2.3 2.1M1115.5 376.4l2.5 1.2M1117.1 373.7l-0.8 1.4"/>
<path d="M1081.8 353.9l-2.8 0.7M1079.9 363.0l-0.8 2.1M1083.1 358.4l-1.0 1.5M1086.6 356.8l0.7 3.5M1079.2 352.1l1.5 1.1M1073.6 355.6l2.3 2.1M1077.2 364.0l0.9 2.9M1076.8 360.6l1.0 0.8M1078.8 353.6l2.2 2.9M1078.2 359.9l2.1 1.0M1085.0 357.0l-3.0 1.9M1070.9 357.5l2.6 1.1M1077.0 356.8l-1.1 1.4M1078.0 356.6l2.9 1.4M1080.6 363.8l-1.7 1.6M1074.2 356.5l2.7 1.3M1078.5 360.1l0.8 1.8M1080.0 363.7l0.3 1.6M1076.0 351.9l1.2 1.1M1082.5 359.8l3.5 0.3M1084.1 358.8l0.6 2.3M1072.9 360.5l-1.8 0.8M1085.3 356.9l-1.6 0.4M1082.5 361.7l1.0 1.5M1076.1 363.4l-0.3 1.8M1078.8 361.7l2.8 1.7M1079.5 353.9l2.5 1.1M1072.0 357.3l-1.6 2.1M1073.7 358.6l-2.3 2.7M1078.7 360.4l1.9 1.5M1076.3 356.0l-0.8 2.5M1070.7 359.9l0.4 1.6M1080.0 358.6l-1.3 3.2M1082.7 359.3l3.2 1.2M1082.2 354.7l-2.2 1.4M1073.5 356.3l0.2 3.0"/>
<path d="M1087.9 274.2l-0.2 3.6M1085.5 267.3l0.6 2.5M1087.8 269.0l3.0 0.2M1084.4 273.8l-0.3 1.6M1086.3 273.2l2.8 2.4M1083.6 268.3l-0.9 2.8M1086.8 274.4l1.1 0.8M1086.4 269.9l0.7 2.1M1088.4 269.4l-1.5 2.2"/>
<path d="M1076.8 246.6l2.2 2.3M1074.1 240.3l-2.0 2.8M1071.8 237.1l2.1 3.7M1088.0 219.3l5.2 0.8M1094.3 221.9l2.8 2.4M1093.3 228.5l-2.3 0.3M1095.5 221.0l-1.9 5.6M1089.9 246.7l2.6 5.2M1095.4 227.5l-4.3 3.7M1074.7 231.0l-3.2 2.8M1095.8 232.3l0.4 2.6M1076.5 245.5l3.8 4.1M1092.4 236.4l1.2 1.6M1071.8 244.1l-5.8 0.8M1076.7 247.4l0.6 3.4M1095.6 243.9l-1.7 2.7M1071.5 224.8l1.9 2.0M1085.4 228.7l4.3 3.5"/>
<path d="M1073.2 238.7l4.2 0.1M1064.8 255.4l3.9 0.3M1079.5 254.8l4.2 3.4M1088.3 263.1l-5.8 1.2M1073.2 254.9l1.4 5.0M1068.2 245.4l0.6 4.1M1088.8 248.7l3.6 0.0M1085.9 241.5l-0.3 4.4M1085.0 248.5l-1.9 5.5M1088.3 255.6l2.2 4.0M1082.3 259.1l-1.9 3.0M1081.9 249.2l1.8 1.6M1077.8 243.7l2.0 2.5M1073.3 251.1l-4.1 0.3M1077.7 250.7l-0.8 5.2M1077.1 254.0l1.2 2.4"/>
<path d="M1174.8 435.0l0.8 1.1M1181.7 440.6l2.9 1.1M1182.8 441.0l0.7 3.2M1184.9 431.8l-0.3 1.9M1187.7 435.0l1.0 0.9M1191.4 429.4l2.5 2.5M1173.1 441.0l0.6 2.9M1191.7 443.6l0.8 1.2M1174.4 433.7l1.9 2.1M1189.4 429.9l2.3 2.6M1184.4 436.7l1.4 0.3M1177.7 442.7l2.5 0.5M1187.2 429.0l1.4 1.8M1186.7 441.4l-1.2 2.0M1180.4 441.9l0.5 3.5M1184.2 439.9l-1.2 2.1M1183.8 441.3l-1.2 3.6M1179.0 440.3l-3.3 0.3M1183.2 435.5l1.9 1.2M1181.2 438.4l1.7 1.8M1182.6 432.4l-1.4 2.7M1175.3 437.5l2.4 0.3M1186.4 436.2l-0.8 2.7M1171.0 435.8l-0.1 3.6M1187.2 436.4l1.1 1.2M1187.7 441.6l0.5 1.4M1179.5 443.6l-1.7 1.5M1190.8 434.2l1.8 0.1M1192.5 438.8l1.9 0.5M1180.8 439.4l3.5 0.3M1182.5 435.1l2.7 0.3M1193.5 438.7l-3.1 1.5M1184.3 431.0l1.5 2.2M1179.8 435.3l3.3 0.7M1185.6 434.6l0.3 3.4M1176.2 443.5l2.6 2.3M1191.9 443.1l0.9 2.4M1178.5 438.0l-3.6 0.5M1195.8 441.0l0.1 2.9M1191.4 434.6l-3.1 0.8M1177.8 438.4l-0.9 1.4M1176.3 436.2l3.3 1.2M1195.4 439.7l-0.0 3.1M1186.8 436.5l-0.1 1.6M1176.8 438.5l1.3 2.6M1176.2 437.0l-3.0 1.2M1193.8 439.6l2.0 1.4M1191.9 440.8l1.9 1.6M1182.4 430.9l2.2 2.2M1186.4 436.8l-0.6 2.5M1177.6 433.9l-2.2 2.3M1183.2 443.3l-2.6 1.5M1192.2 443.3l3.6 0.5M1183.6 443.3l-1.0 1.1M1182.8 432.1l-1.4 1.6M1179.3 436.4l-2.4 1.6M1180.1 443.9l2.7 1.8M1186.8 441.9l-1.3 3.5M1187.1 436.8l-0.7 2.6M1177.5 437.6l-2.7 1.9M1194.0 438.0l-0.0 2.2M1188.3 439.4l-3.1 0.6M1179.5 436.5l3.2 0.5M1181.0 437.8l2.5 0.4M1190.4 432.5l-2.2 2.3M1187.1 439.0l2.1 2.1M1187.4 445.1l-0.1 2.1M1192.4 437.5l1.4 2.5M1174.1 436.9l-2.3 0.9M1188.0 432.3l0.2 1.8M1190.1 437.9l0.7 2.1M1175.4 436.8l-1.1 1.7M1174.1 440.2l0.5 3.7M1180.2 438.3l-3.0 0.3M1181.7 437.6l1.2 1.1M1183.3 441.1l2.3 0.8M1176.7 442.9l1.4 2.6M1188.6 435.2l0.5 1.3M1177.6 442.9l-1.3 0.9M1195.5 441.2l1.1 2.4M1185.9 435.0l1.2 2.8M1182.5 438.0l-0.3 1.5M1181.4 436.0l2.2 1.3M1187.6 437.6l0.0 2.9M1184.0 446.5l1.0 0.8M1185.6 441.2l0.8 2.1M1178.4 436.3l-2.7 2.1M1178.8 441.5l0.2 1.6"/>
<path d="M1220.4 435.4l-3.5 0.1M1222.6 432.3l3.1 1.1M1210.0 441.4l2.6 1.6M1207.3 438.1l-2.3 1.0M1216.8 440.5l-1.4 1.1M1219.5 434.7l0.2 2.0M1210.9 438.0l1.1 1.3M1222.4 433.3l-0.6 3.2M1218.3 433.5l-3.5 0.5M1221.7 433.3l-2.5 1.5M1207.8 440.1l-1.5 2.1M1224.9 435.3l-3.2 1.8M1214.7 440.9l3.2 0.0M1209.1 440.4l0.3 1.4M1219.5 437.8l1.4 1.2M1221.1 435.1l2.0 0.1M1223.3 432.1l1.5 1.9M1223.9 435.9l1.0 2.7M1206.8 438.2l1.1 2.6M1208.7 437.1l-1.5 0.8"/>
<path d="M1240.4 443.3l1.9 0.5M1249.1 442.5l1.6 2.0M1245.4 443.8l2.6 0.9M1241.5 447.6l2.1 1.6M1243.1 444.1l1.9 2.1M1252.4 442.1l-2.4 0.2M1248.0 441.3l1.6 2.0M1253.4 437.1l-1.4 1.5M1248.5 440.6l-1.6 1.9M1244.8 443.3l1.5 0.0M1252.5 437.6l0.9 2.8M1242.0 447.4l2.9 2.2"/>
<path d="M1285.5 443.1l-0.5 1.4M1286.6 443.5l-2.4 1.9M1287.2 439.6l0.7 2.4M1281.5 445.9l2.5 0.8M1282.7 441.9l-2.8 0.4M1288.8 441.6l-0.7 3.4M1280.9 444.0l2.1 1.7M1285.8 444.9l1.4 1.3M1291.1 441.2l0.5 2.1"/>
<path d="M1262.1 461.0l-1.2 1.4M1264.3 460.8l-3.3 0.9M1243.1 455.4l-3.2 0.9M1248.0 465.0l-0.5 1.8M1259.9 463.8l3.0 1.5M1261.3 462.0l0.7 2.9M1252.1 459.4l-0.3 3.6M1244.7 457.0l0.2 3.7M1269.5 461.5l-0.7 1.4M1248.1 456.6l0.0 3.7M1267.5 465.5l-2.8 0.9M1241.8 464.4l2.4 2.8M1243.4 464.9l-0.1 2.5M1246.2 460.5l-1.9 1.8M1267.3 467.6l-1.5 0.5M1260.6 466.3l-1.9 0.8M1252.5 466.6l1.5 1.6M1263.3 467.8l0.0 1.3M1262.0 464.4l1.6 1.5M1243.7 464.3l-2.9 2.2M1260.5 460.7l0.9 3.6M1241.9 457.3l1.5 0.8M1248.2 462.8l3.3 0.7M1253.9 458.8l2.4 0.8M1250.6 462.0l2.0 0.7M1256.3 458.4l-0.0 3.4M1258.3 459.6l-0.6 1.3M1246.8 454.6l-0.2 1.7M1250.1 457.0l-1.5 0.5M1258.2 468.2l0.4 2.7M1249.0 465.6l-0.8 1.2M1261.3 460.7l0.1 1.7M1253.6 464.9l-1.4 1.5M1242.9 459.0l-2.5 0.7M1256.9 467.3l-1.5 3.3M1265.9 469.7l-1.3 0.9M1247.6 463.8l-0.9 3.3M1262.5 463.5l2.5 1.5M1244.3 460.0l1.5 1.7M1258.3 466.1l-0.5 1.3M1264.4 468.8l-2.7 0.8M1257.1 469.0l-2.0 2.0M1244.0 453.9l-2.1 2.6M1252.6 458.9l0.6 3.3M1262.8 461.0l1.4 1.0M1262.1 462.3l-2.1 0.8M1246.7 459.7l3.1 1.5M1242.2 458.4l0.5 1.2M1245.5 466.7l-2.1 1.0M1263.1 471.0l-2.8 1.3M1256.4 463.9l-1.7 2.1M1268.4 463.4l-3.0 1.0M1251.8 466.8l1.4 1.7M1255.0 469.3l2.4 2.3M1257.3 469.4l1.7 2.4M1263.6 470.9l-2.0 2.7M1258.0 464.9l2.1 1.4M1265.8 472.3l2.0 0.3M1246.4 465.1l2.7 1.7M1247.1 458.9l-1.6 0.1M1257.6 461.3l-1.0 1.0M1260.2 461.8l-2.1 0.3M1260.8 459.1l-2.8 0.5M1264.8 469.5l3.1 0.6M1252.5 458.8l-2.7 1.0M1252.1 457.0l-0.6 1.2M1249.3 455.8l2.7 1.6M1246.7 467.0l2.1 2.5M1260.4 466.8l-0.5 1.5M1261.9 470.8l-0.2 1.7M1244.4 457.0l-2.0 0.2M1248.7 461.7l3.2 0.3M1262.8 463.3l3.5 0.3M1261.9 468.8l2.9 2.2M1260.0 458.9l-3.0 0.2M1244.8 465.2l-0.9 2.7M1243.0 456.0l-1.0 0.8M1248.0 455.7l-0.4 1.5"/>
<path d="M1278.7 452.1l-2.7 2.2M1279.6 448.4l1.3 2.9M1275.8 459.7l1.4 2.5M1273.8 458.2l1.5 1.8M1280.0 455.9l1.5 0.7M1273.5 458.9l-1.6 2.6M1277.9 450.0l0.0 1.3M1274.3 456.5l2.2 2.4M1271.8 456.0l-1.0 1.5M1277.0 452.5l1.5 0.2M1279.1 456.4l-1.8 2.9M1279.0 455.9l-2.4 1.3M1274.2 451.2l1.1 1.0M1270.3 456.2l1.6 2.1M1278.3 450.1l-3.2 1.1M1272.3 457.5l1.1 0.8M1270.6 453.8l1.3 0.0M1281.2 455.7l-1.3 0.6M1271.7 461.1l0.8 2.0M1278.1 453.4l0.8 1.4M1272.0 459.1l-1.3 0.4M1272.3 456.7l1.7 1.8M1274.3 452.4l2.1 0.8M1277.4 449.1l-0.4 3.3M1275.6 452.6l-3.1 0.7M1280.5 449.2l0.1 2.4M1280.3 453.2l-0.4 2.5M1279.5 450.5l1.5 0.7M1270.3 452.6l-2.6 0.2"/>
<path d="M1299.6 483.3l-0.1 1.8M1302.8 483.9l0.9 3.0M1300.3 489.4l0.1 2.3M1300.6 483.2l2.0 1.5M1283.8 476.3l-1.6 1.4M1294.3 480.0l3.0 1.1M1298.0 485.5l-0.6 1.6M1288.5 484.0l-2.1 1.7M1294.9 478.7l3.3 0.6M1274.2 473.3l0.9 2.9M1294.9 486.3l-1.9 0.4M1282.3 474.3l0.8 1.3M1304.6 486.1l0.0 1.4M1304.0 482.3l-1.3 1.2M1283.0 474.7l-0.2 1.9M1291.2 483.6l1.2 1.0M1290.3 479.8l0.4 2.1M1279.5 473.5l-1.9 2.1M1295.3 484.0l-0.1 1.7M1303.2 485.2l0.2 1.9M1283.9 484.2l0.9 3.1M1276.7 477.8l1.2 1.4M1283.3 477.6l-1.0 2.0M1302.6 480.9l-2.1 1.0M1299.6 482.6l2.4 2.5M1293.4 484.3l-0.2 3.0M1304.0 487.7l-2.1 0.2M1281.6 482.4l-3.0 1.7M1287.6 479.1l-1.7 0.3M1279.4 474.0l1.3 1.9M1285.7 479.1l2.1 0.2M1291.1 476.3l0.2 3.5M1293.2 486.7l-2.2 1.1M1274.9 471.4l-0.8 3.3M1285.0 475.3l-1.9 1.8M1289.6 476.6l-0.5 2.6M1295.3 486.8l3.2 0.8M1283.8 478.0l1.5 2.9M1288.8 475.8l0.1 1.6M1274.7 471.2l0.9 2.2M1274.0 471.9l-2.5 0.8M1305.4 486.0l-2.9 0.4M1287.1 475.0l2.9 1.4M1295.5 480.3l2.5 1.4M1304.6 482.5l-2.6 0.0M1280.7 474.5l-2.2 2.8M1280.4 475.0l1.6 0.8M1280.6 477.0l2.1 2.0M1281.5 475.7l0.4 1.6M1275.8 472.0l2.9 0.0M1274.5 475.9l-2.6 1.0M1283.3 477.7l0.5 2.0M1275.7 472.7l1.6 0.8M1285.1 475.0l-0.6 1.6M1289.3 482.7l0.0 3.1M1299.0 483.0l1.1 0.8M1296.3 481.3l0.9 1.2M1277.6 481.3l0.3 3.4M1301.7 481.7l2.6 2.3M1280.4 479.0l-2.4 0.5M1285.6 484.5l-3.2 1.5M1297.2 480.0l1.3 0.2M1303.5 485.4l-3.4 1.3M1279.3 482.7l1.1 1.3M1280.4 483.3l-2.1 0.4M1287.9 483.7l-2.9 2.0M1285.7 476.6l-0.1 3.6M1292.1 485.5l2.1 1.5M1303.2 485.6l-2.6 2.0M1287.0 482.0l-1.3 1.9M1289.2 484.0l-3.5 1.4M1284.5 481.1l-0.5 3.3"/>
<path d="M1304.9 461.3l2.3 2.3M1310.6 456.0l1.5 0.5M1310.6 460.4l0.7 1.3M1310.1 459.7l0.4 1.9M1305.9 459.5l-1.8 1.2M1311.8 458.6l1.5 1.3M1311.9 460.3l-1.6 0.4M1304.4 459.4l1.8 1.2M1312.7 460.3l-0.5 1.5M1306.1 458.9l1.7 2.1M1308.0 458.2l2.3 2.7M1310.8 459.4l1.1 1.7"/>
<path d="M1353.8 465.6l-1.7 3.2M1352.2 466.8l3.2 0.3M1347.4 473.3l-1.3 2.6M1350.1 475.1l-2.3 0.6M1351.6 474.4l-2.7 1.2M1359.6 471.8l-1.9 0.3M1353.4 468.1l2.0 0.8M1357.7 467.0l2.0 2.9M1360.3 471.2l1.5 3.0M1343.9 470.2l2.0 0.4M1350.2 477.1l0.6 3.3M1351.5 470.8l0.7 1.2M1353.6 476.5l-3.6 0.3M1346.3 474.1l-1.4 0.8M1344.8 472.0l3.0 0.8M1357.5 475.2l3.0 0.5M1355.0 467.0l3.6 0.9M1354.5 465.9l2.4 1.6M1347.3 473.5l1.3 0.7M1352.2 472.5l-1.1 0.6M1348.3 468.9l-0.3 1.6M1351.9 477.5l-1.3 2.6M1352.5 468.4l-2.0 3.1M1347.9 477.9l0.8 1.5M1356.0 474.3l1.5 0.9M1351.0 469.1l-0.1 3.7M1345.2 474.4l1.3 1.0"/>
<path d="M1342.6 504.1l0.3 2.6M1345.8 503.9l-2.1 0.2M1331.7 500.3l-1.1 3.3M1331.3 498.6l1.5 0.6M1332.2 493.4l0.8 2.8M1353.7 500.9l-0.6 2.2M1339.5 494.4l1.9 0.0M1346.7 503.4l-1.3 2.0M1340.5 493.8l2.7 2.6M1344.5 497.7l-0.3 2.5M1336.6 495.5l0.8 3.4M1353.0 498.8l0.3 1.8M1355.2 497.6l0.1 1.3M1340.9 497.3l1.6 0.1M1341.9 497.8l0.8 1.1M1337.7 494.9l2.6 0.9M1334.2 496.2l-0.8 1.0M1341.3 499.7l-2.8 1.0M1350.2 502.8l2.5 2.1M1348.7 500.0l-1.3 0.3M1353.2 499.8l-0.4 3.2M1332.9 495.3l1.3 0.1M1355.0 498.6l0.4 1.5M1353.3 501.7l-1.7 0.8M1341.7 494.9l-0.8 2.9M1343.5 499.7l2.0 3.0M1330.2 490.3l-1.8 3.2M1352.0 498.0l-2.4 0.4M1343.2 500.4l-1.2 3.2M1353.1 499.2l-1.9 0.7M1347.9 495.6l-0.8 1.8M1354.4 504.1l1.3 3.4M1330.7 497.9l-0.6 1.2M1342.1 493.3l-1.5 0.0M1345.3 499.7l3.3 1.4M1343.4 500.1l1.1 1.2M1338.8 491.3l2.0 1.5M1338.0 500.3l1.6 0.8M1341.8 500.5l1.0 1.5M1332.3 493.5l1.2 3.0M1335.4 494.1l-1.2 1.3M1327.8 499.9l-2.0 0.5M1336.2 495.9l2.5 2.0M1351.3 503.7l1.0 3.2M1354.6 498.0l-0.8 1.5M1353.7 505.5l0.9 3.0M1337.8 491.3l-0.1 1.4M1339.4 501.9l-0.5 1.9M1333.9 496.4l-0.1 3.5M1333.2 495.0l0.4 2.2M1333.8 494.2l-0.2 1.7M1336.9 497.0l-2.4 0.5M1339.4 491.4l-0.1 2.1M1331.6 494.7l-0.8 2.0M1347.6 501.6l1.3 0.3M1342.1 499.5l-0.3 1.8M1336.9 499.4l0.8 2.4M1334.1 497.4l0.1 1.3M1347.5 503.7l-3.6 0.1M1347.3 499.4l2.0 2.2M1340.3 495.4l2.6 1.0M1346.5 503.0l1.6 0.8M1346.8 494.9l-3.3 1.2M1346.1 496.4l-0.6 3.1M1337.1 498.6l-1.1 3.3M1348.6 502.3l-0.5 3.4M1343.9 501.2l0.9 1.3M1344.3 495.3l-1.8 0.2M1353.0 499.4l2.2 1.5M1335.3 502.4l-0.5 1.4M1338.1 492.0l0.1 2.6M1336.3 498.6l0.6 3.3M1347.4 496.8l-1.1 0.7M1336.4 490.4l-2.6 0.4M1349.2 506.6l3.4 1.0M1328.3 496.5l-1.8 1.3M1351.3 504.4l0.0 2.0M1334.2 490.4l-0.3 2.5"/>
<path d="M1387.7 503.6l1.9 0.5M1398.9 501.5l-0.1 1.6M1402.9 503.6l-3.5 0.8M1404.3 505.0l-0.8 1.2M1402.8 510.5l1.6 0.2M1386.8 500.6l-3.2 0.6M1389.4 508.1l2.6 0.1M1393.6 498.7l-2.8 0.7M1403.5 510.0l-0.6 1.5M1392.0 510.2l-0.5 2.8M1393.9 502.9l1.8 0.1M1389.5 497.7l3.1 0.5M1403.2 510.8l-1.5 0.9M1401.6 505.6l-1.7 0.8M1390.0 504.2l1.4 1.2M1397.5 510.3l-2.9 0.2M1391.3 503.8l-0.7 2.6M1402.2 508.5l-2.4 0.3M1395.0 498.5l1.3 2.1M1384.6 501.3l1.8 0.7M1400.1 513.0l2.5 1.0M1395.7 499.0l1.5 2.1M1392.3 505.6l2.7 0.6M1397.6 501.6l-0.7 3.5M1401.5 509.0l-0.2 3.1M1392.3 507.6l1.0 2.4M1398.4 507.6l-0.7 2.1M1390.5 506.2l0.4 2.3M1392.5 501.5l-1.3 3.2M1387.4 505.2l-0.3 2.8M1397.8 504.7l2.2 0.1M1394.0 506.9l-2.8 0.7M1397.8 504.0l-1.3 0.9M1401.9 507.3l0.4 2.9M1393.0 512.0l1.3 0.5M1397.1 502.0l2.8 2.5M1395.5 502.5l0.7 1.7M1390.6 498.7l-3.1 0.2M1392.9 499.0l-3.5 0.3M1384.5 507.5l-0.6 3.7M1393.2 503.9l2.7 0.1M1387.3 508.6l2.6 2.2M1389.5 508.2l-2.2 2.8M1396.2 503.7l1.2 1.4M1387.0 500.0l1.8 2.8M1384.2 502.1l-0.0 1.6M1399.2 502.4l-1.2 1.2M1402.5 504.9l1.6 0.5M1389.7 498.4l2.0 3.1M1392.0 502.9l-1.0 1.0M1384.4 507.5l0.9 1.4M1386.8 506.4l-2.2 0.2M1398.5 505.9l1.6 1.2M1391.9 500.8l-1.2 0.9M1390.9 507.5l3.6 0.4M1395.8 507.8l1.4 1.0M1399.0 513.5l3.3 0.2M1389.8 497.6l-0.4 1.4M1399.5 511.8l1.0 1.3M1393.4 508.5l3.0 0.4M1387.1 501.2l1.3 0.7M1395.6 502.6l-3.4 1.0M1398.6 506.6l-0.9 1.9M1393.3 505.5l0.6 2.3M1399.2 513.8l-2.3 2.5M1392.0 498.2l1.9 1.6M1398.5 509.8l-3.1 0.8"/>
<path d="M1216.1 503.7l0.1 2.1M1232.3 507.6l-0.4 3.2M1226.5 504.5l0.7 3.6M1227.9 504.3l-1.6 0.1M1227.3 504.4l0.8 1.3M1228.0 510.4l3.0 1.8M1226.7 497.7l-0.4 2.4M1217.2 504.1l2.4 2.7M1232.3 508.4l0.0 2.5M1216.6 510.9l-0.9 3.6M1219.0 513.6l3.6 0.5M1221.2 512.5l-0.7 1.6M1221.9 506.3l1.9 1.2M1219.5 514.2l-2.6 0.2M1222.0 508.1l2.8 1.4M1221.8 499.9l0.6 1.4M1221.0 498.7l-1.3 0.6M1224.6 499.4l-0.3 3.0M1232.9 506.4l2.7 1.4M1218.9 503.6l0.4 3.6M1218.8 514.6l-0.5 3.4M1220.4 504.1l-1.4 0.7M1223.7 502.2l1.6 0.3M1224.5 498.8l-1.6 0.4M1224.4 496.6l-1.2 2.3M1228.8 510.9l2.8 2.4M1227.3 509.8l2.6 2.7M1225.9 504.0l2.7 2.2M1229.0 512.0l-2.9 1.1M1222.8 500.3l-2.6 1.5M1213.5 506.2l1.7 0.6M1229.5 507.1l-1.2 1.8M1225.6 497.7l1.8 1.5M1222.4 512.3l-2.7 1.5M1221.7 509.8l1.4 2.2M1220.1 502.3l-2.9 1.5M1222.8 498.8l2.3 2.1M1228.5 504.8l-2.3 0.5M1219.3 509.6l1.3 1.8M1225.2 501.5l-1.7 2.1M1217.0 512.3l-2.6 1.2M1229.3 504.6l-1.3 0.0M1219.2 504.0l-1.4 1.4M1227.0 506.8l2.8 0.1M1218.5 505.8l-1.2 2.5M1221.5 512.6l1.3 0.3M1232.7 507.6l-3.7 0.6M1227.1 505.0l-0.2 2.6M1233.9 507.5l0.4 1.7M1223.0 505.5l-2.9 2.0M1220.6 500.5l-0.2 1.6M1226.9 510.2l-1.3 2.1M1223.0 515.8l-2.3 1.0M1219.0 514.0l0.7 2.1"/>
<path d="M1188.1 468.1l2.6 1.2M1190.2 468.0l-1.8 1.8M1185.3 469.4l-0.5 2.9M1192.3 468.8l1.4 2.9M1190.6 466.8l2.6 1.1M1195.5 468.6l-2.8 1.8M1190.7 466.7l2.0 2.7M1187.2 469.7l-0.2 1.3M1184.5 469.3l-2.6 1.9M1184.1 469.3l-1.7 0.1"/>
<path d="M1169.0 484.4l-2.8 1.2M1158.6 491.0l-0.8 1.1M1170.2 481.0l0.3 2.5M1165.1 486.0l3.3 0.7M1162.8 482.6l-0.0 1.7M1163.7 488.1l-1.2 1.2M1162.3 491.2l-0.7 1.6M1164.8 483.1l2.8 0.7M1156.5 485.9l-1.9 3.1M1158.1 491.0l1.3 0.6M1154.5 485.7l-2.3 2.6M1155.0 486.7l2.2 0.3M1160.0 484.8l-1.3 0.8M1164.7 482.1l-0.7 1.4M1161.0 492.0l1.6 1.8M1168.3 488.7l-0.2 1.5M1167.3 486.1l-0.6 2.1M1167.4 480.1l-0.4 2.6M1171.6 485.0l1.6 1.5M1165.0 484.2l3.7 0.7M1161.9 483.4l1.1 0.6M1169.1 480.0l-0.7 3.5M1168.5 484.6l1.8 2.3M1167.7 481.3l1.7 1.5M1166.9 488.3l-0.5 1.8"/>
<path d="M1172.9 507.1l1.2 0.4M1172.5 512.2l0.3 2.6M1164.7 511.6l-0.6 2.2M1172.7 516.0l0.3 3.1M1163.9 515.2l1.7 0.3M1165.5 513.3l3.1 1.7M1166.9 511.7l2.1 0.5M1175.6 510.4l-2.6 0.9M1172.9 510.3l-2.1 1.2M1164.0 512.1l-1.1 0.8M1166.4 515.6l-1.3 2.0M1173.0 510.2l-0.4 1.3M1171.6 517.2l-0.5 2.0M1175.0 515.7l0.2 2.3M1177.6 513.0l2.2 1.9M1167.1 512.2l-1.8 1.3M1177.4 508.9l-1.4 0.6M1167.4 508.3l-3.1 1.5M1170.5 511.8l-2.2 0.2M1166.3 510.0l-3.2 0.8M1172.4 514.0l-2.5 1.4M1165.4 516.4l-2.2 1.0M1170.4 514.0l1.5 1.0M1176.0 515.4l2.7 1.0M1168.9 507.6l1.8 1.0M1172.3 507.2l1.1 2.6M1177.1 514.9l-1.5 0.8M1172.3 512.6l-0.5 2.7M1167.9 510.4l-1.7 3.0M1174.5 512.2l-1.9 0.2M1173.6 514.6l-0.6 1.1"/>
<path d="M1190.9 525.7l1.8 1.3M1196.1 521.2l-0.4 2.7M1194.4 522.0l-2.9 0.9M1189.1 525.4l0.8 1.1M1188.9 522.2l2.0 2.7M1195.4 520.1l1.8 1.1M1188.7 522.9l-1.3 0.9M1190.1 523.0l-0.7 1.4M1190.8 525.9l1.7 0.1M1185.4 528.4l-0.9 1.6"/>
<path d="M1229.3 530.8l0.1 3.1M1225.3 532.1l1.7 0.3M1231.5 534.0l0.8 1.1M1226.0 532.5l-3.3 1.2M1229.2 534.4l-2.6 2.1M1223.9 536.5l3.0 0.1M1225.4 537.3l-1.9 1.5M1227.8 533.9l-0.5 1.2M1221.0 535.2l-2.1 2.8M1227.2 535.2l-0.7 1.5"/>
<path d="M1272.6 543.5l-1.6 1.6M1277.6 539.8l0.9 1.4M1274.6 542.6l3.4 1.2M1269.8 545.7l1.7 3.2M1271.8 540.7l-1.2 1.8M1279.9 540.6l0.5 2.9M1277.5 539.8l2.4 1.7M1275.4 539.1l2.0 1.1M1270.4 544.2l0.6 1.9M1279.2 541.4l2.7 0.6"/>
<path d="M1360.1 554.5l-1.8 0.1M1345.5 547.0l1.2 1.1M1345.6 548.9l-2.6 1.8M1340.5 550.3l-0.8 1.7M1339.6 551.0l1.7 0.8M1345.7 552.2l-3.5 0.6M1356.5 556.0l0.1 1.4M1346.3 545.2l1.5 0.6M1348.3 544.8l2.0 2.7M1345.3 548.9l-1.2 0.6M1354.9 552.2l3.5 0.3M1357.7 548.2l-2.7 0.3M1354.1 548.4l3.0 0.3M1355.8 548.5l2.7 0.3M1347.2 547.7l-2.4 1.1M1342.3 550.1l-1.7 2.1M1359.7 553.0l-0.6 1.2M1347.2 547.2l0.6 2.5M1342.2 550.0l1.9 0.3M1353.7 546.2l1.7 2.8M1355.5 550.6l2.7 1.6M1359.2 548.5l0.7 2.5M1355.3 548.6l-2.4 1.5M1355.1 556.7l-1.6 2.5M1347.2 546.9l1.3 3.0M1353.1 548.8l-2.4 0.8M1359.6 554.9l-1.4 1.6M1360.4 553.2l-1.2 1.9M1352.0 547.3l0.9 2.1M1356.4 548.5l2.3 1.7M1348.8 554.1l2.4 0.1M1356.4 555.0l1.1 2.3M1350.0 544.8l1.8 0.5M1358.9 549.6l1.7 2.1M1354.0 553.1l1.2 1.7M1339.9 550.4l0.7 1.8M1344.7 548.6l1.8 0.9M1343.6 544.9l-0.2 2.1M1341.5 551.7l2.2 0.4M1347.7 544.7l1.4 1.9M1355.0 549.2l1.3 3.3M1353.4 550.7l2.5 2.0M1359.9 550.4l-1.9 1.0M1351.5 545.5l1.3 1.3M1343.6 551.9l-2.0 0.3M1357.2 550.3l-0.4 1.7M1358.7 553.1l-0.9 3.1M1351.0 550.5l-1.5 1.9M1352.7 548.9l1.6 0.8M1359.7 554.2l1.7 0.1"/>
<path d="M1325.7 539.3l-3.5 0.1M1319.0 545.5l-3.1 0.2M1330.8 535.3l-1.2 2.7M1329.6 538.7l-1.8 1.1M1329.2 538.0l-2.0 0.3M1327.4 541.1l-2.2 2.0M1317.8 541.0l1.6 2.4M1317.9 545.0l1.6 0.6M1321.2 542.2l-2.3 2.8M1318.8 539.8l-2.5 1.2M1331.4 537.6l2.0 0.9M1320.0 542.1l2.1 2.7M1329.3 534.6l-3.7 0.0M1323.9 543.2l-3.0 0.5M1322.8 541.9l-1.6 1.4M1322.6 537.7l2.9 1.5M1322.2 542.8l0.7 3.0M1319.7 539.3l-1.0 1.6M1319.8 542.3l0.0 3.5M1327.1 537.8l0.5 2.7"/>
<path d="M1293.7 524.5l-1.2 3.4M1300.5 519.9l-3.2 0.3M1295.3 524.1l3.1 0.3M1296.8 526.9l-2.0 2.5M1300.0 520.4l2.7 0.3M1292.7 526.9l-1.2 1.0M1299.1 523.3l1.6 0.8M1300.5 519.6l1.6 0.8M1307.9 521.1l2.5 0.9M1297.0 520.5l2.0 2.0M1294.3 529.5l1.3 1.7M1305.5 516.4l2.2 1.0M1296.5 523.1l-0.9 3.5M1297.1 520.5l1.3 3.1M1297.4 520.5l1.3 1.3M1297.1 522.7l-1.6 2.6M1291.8 524.3l-2.9 1.8M1303.2 518.1l-0.8 1.2M1301.6 519.3l-2.9 1.6M1300.2 524.2l-3.4 0.6"/>
<path d="M1382.6 537.8l1.3 2.7M1375.1 540.8l1.4 0.4M1382.2 536.5l2.9 2.2M1377.5 540.1l0.1 1.7M1387.8 535.9l-1.9 0.7M1387.2 537.5l-1.7 0.3M1374.0 538.4l2.9 0.8M1373.9 541.5l1.4 2.8M1374.8 543.1l-2.0 0.3M1379.7 540.4l1.9 2.8M1385.9 532.6l0.2 1.6M1380.6 537.1l-3.1 0.3M1387.9 536.2l-1.9 1.2M1381.1 534.6l1.6 3.2M1385.5 532.5l0.0 2.3M1382.1 537.8l2.4 2.5M1380.4 540.3l-2.4 2.8M1380.7 538.6l-1.4 1.2"/>
<path d="M1400.6 461.5l-1.8 2.6M1400.9 452.5l-2.6 1.1M1403.8 452.4l-1.3 0.6M1399.7 459.5l-1.1 1.9M1401.2 461.5l3.4 0.8M1400.9 459.4l-0.5 1.8M1398.6 456.9l-0.2 1.9M1400.0 455.1l2.8 1.1M1402.6 460.0l0.6 1.8M1404.7 455.7l1.2 2.8"/>
<path d="M1358.8 459.5l0.8 1.1M1354.1 459.5l-0.8 1.8M1358.1 456.4l0.7 1.6M1360.1 456.7l3.4 0.3M1356.6 457.6l2.3 1.9M1358.5 457.2l0.7 2.4M1356.1 461.0l0.5 2.0M1362.4 453.2l-1.8 1.4M1355.4 458.9l1.1 1.4"/>
<path d="M1261.5 501.9l0.3 3.3M1257.0 496.4l2.5 1.1M1250.3 500.3l-0.5 1.7M1258.5 502.2l0.2 3.7M1253.9 493.9l0.3 2.1M1260.4 498.3l-1.6 0.2M1253.0 493.9l3.0 0.5M1248.1 495.7l0.7 3.5M1250.9 493.8l-1.8 2.4M1249.6 501.8l-3.3 1.5M1259.1 498.5l-0.9 1.3M1256.6 496.8l1.0 1.8M1248.8 500.8l-0.9 0.9M1254.8 493.9l-0.2 1.7M1261.0 496.5l-0.1 1.9M1260.3 493.8l1.1 1.5M1258.1 497.0l-1.9 0.9M1249.4 497.7l1.6 0.4"/>
<path d="M1194.1 550.6l1.3 1.1M1193.7 550.0l0.2 2.9M1188.0 550.7l3.2 0.7M1195.1 547.4l1.0 1.7M1198.5 547.1l-0.9 1.1M1187.3 552.4l-1.0 2.1M1198.9 549.3l-1.8 3.3M1200.2 548.9l2.2 0.6M1189.6 553.4l-0.0 1.5M1188.4 553.2l-0.9 2.1"/>
<path d="M1157.0 434.6l-1.8 2.5M1155.4 431.7l-1.2 0.5M1153.3 432.6l-0.8 2.7M1153.1 435.1l-0.7 2.9M1153.3 436.6l1.5 1.7M1154.1 437.2l-1.2 3.1M1156.2 431.0l0.4 1.4M1153.8 437.0l2.2 0.0M1153.1 437.0l-1.3 0.0M1156.8 437.2l1.4 1.4M1162.8 434.6l1.0 2.7M1159.5 431.6l2.2 0.0"/>
<path d="M1409.8 484.8l0.4 2.2M1404.9 485.8l3.5 0.2M1402.7 477.6l2.0 0.0M1405.2 488.8l-2.4 1.0M1404.4 478.7l1.8 1.3M1401.6 483.0l-3.0 0.8M1401.0 484.6l1.4 1.7M1407.9 484.2l-1.4 0.2M1401.9 486.3l-2.4 0.4M1408.7 483.9l0.3 2.2M1407.3 482.4l-1.9 0.0M1406.8 480.0l-2.6 1.1M1408.1 485.4l1.9 0.5M1407.4 485.9l2.7 1.8M1401.1 487.1l0.3 3.0M1407.9 485.8l-1.3 1.8M1403.7 483.4l-1.9 0.8M1400.6 485.7l2.3 2.3"/>
<path d="M993.0 364.7 L1024.5 371.6"/>
<path d="M978.8 378.8 L963.1 424.5"/>
<path d="M978.4 380.0 L963.9 424.2"/>
<path d="M988.1 380.0 L971.7 436.2 L968.8 447.8"/>
<path d="M988.1 380.0 L1130.0 403.3"/>
<path d="M984.3 397.4 L1038.5 407.1 L1130.0 424.6"/>
<path d="M976.5 409.1 L1056.0 428.4 L1130.0 444.0"/>
<path d="M963.9 424.2 L1030.8 442.0 L1104.4 447.8"/>
<path d="M970.7 436.2 L1026.9 451.7"/>
<path d="M966.8 446.9 L1023.0 463.3"/>
<path d="M966.8 449.8 L1021.1 465.3"/>
<path d="M1001.7 461.4 L1019.1 465.3 L1026.9 482.7 L1028.8 496.3"/>
<path d="M977.5 407.1 L988.1 403.3"/>
<path d="M1039.5 403.3 L1026.9 457.5 L1019.1 580.0"/>
<path d="M1050.2 380.0 L1030.8 457.5"/>
<path d="M1065.7 380.0 L1056.0 438.1"/>
<path d="M1077.3 380.0 L1065.7 428.4"/>
<path d="M1091.8 380.0 L1065.7 506.0 L1056.0 580.0"/>
<path d="M1100.5 380.0 L1081.2 476.9 L1073.4 580.0"/>
<path d="M1104.4 418.8 L1077.3 580.0"/>
<path d="M1123.8 428.4 L1098.6 496.3 L1088.9 580.0"/>
<path d="M1023.0 463.3 L1026.9 492.4 L1017.2 580.0"/>
<path d="M1034.7 471.1 L1028.8 515.7 L1025.0 580.0"/>
<path d="M1046.3 471.1 L1038.5 515.7 L1032.7 580.0"/>
<path d="M1057.9 488.5 L1048.2 554.4"/>
<path d="M1069.5 449.8 L1061.8 486.6"/>
<path d="M1046.3 488.5 L1130.0 504.0"/>
<path d="M1019.1 531.2 L1042.4 533.1"/>
<path d="M1038.5 537.0 L1061.8 540.9"/>
<path d="M1023.0 558.3 L1098.6 573.8"/>
<path d="M988.1 567.0 L1017.2 570.9"/>
<path d="M1063.7 418.8 L1085.0 405.2 L1130.0 391.6"/>
<path d="M1077.3 403.3 L1104.4 444.0"/>
<path d="M1088.9 411.0 L1100.5 445.9"/>
<path d="M1123.8 519.5 L1108.3 527.3 L1102.5 554.4"/>
<circle cx="1106.4" cy="447.8" r="5.8"/>
<text x="948.4" y="402.3" font-size="8" transform="rotate(-70.0 948.4 402.3)" textLength="16.5" lengthAdjust="spacingAndGlyphs">东北路</text>
<text x="966.8" y="404.2" font-size="7" transform="rotate(-70.0 966.8 404.2)">19</text>
<text x="1065.7" y="468.2" font-size="8" transform="rotate(-80.0 1065.7 468.2)" textLength="15.5" lengthAdjust="spacingAndGlyphs">d600</text>
<text x="1094.7" y="479.8" font-size="8" transform="rotate(-80.0 1094.7 479.8)" textLength="17.4" lengthAdjust="spacingAndGlyphs">d800</text>
<text x="1037.6" y="513.7" font-size="9" textLength="51.4" lengthAdjust="spacingAndGlyphs">1.5~1.5d600</text>
<text x="1054.0" y="537.0" font-size="8" transform="rotate(-80.0 1054.0 537.0)" textLength="19.4" lengthAdjust="spacingAndGlyphs">d600</text>
<text x="1079.2" y="538.9" font-size="8" transform="rotate(-80.0 1079.2 538.9)" textLength="15.5" lengthAdjust="spacingAndGlyphs">d800</text>
<text x="1108.3" y="558.3" font-size="9" textLength="15.5" lengthAdjust="spacingAndGlyphs">南河</text>
<path d="M1065.4 383.6l0.9 3.4M1073.2 380.2l-1.4 0.2M1075.0 381.8l-1.3 0.2M1070.4 397.2l-2.3 1.4M1049.8 389.0l-3.4 0.6M1052.5 390.5l-0.7 1.9M1056.1 401.1l2.7 1.0M1058.8 391.1l-2.9 1.2M1066.3 378.1l-2.7 1.8M1045.2 390.5l-2.3 2.6M1065.8 398.0l1.8 0.5M1073.3 393.1l2.0 1.7M1061.7 396.1l0.6 1.9M1070.8 391.8l1.3 2.8M1054.9 393.2l1.8 1.2M1056.4 383.3l1.2 1.8M1056.8 392.6l-3.2 1.0M1053.2 385.5l3.3 0.9M1071.1 392.7l-2.2 0.6M1049.2 386.0l1.0 3.0M1049.2 393.8l1.7 0.5M1064.4 393.1l-2.0 0.4M1050.8 384.7l1.1 0.7M1044.4 388.2l-0.3 2.4M1073.5 386.1l1.6 0.4M1071.1 398.2l-1.3 1.3M1056.8 391.0l0.4 1.9M1048.3 384.8l-3.4 1.4M1074.8 383.2l-1.0 1.5M1046.9 384.8l1.6 2.8M1060.6 385.0l0.2 2.6M1052.5 392.8l-2.3 0.5M1077.7 389.9l3.3 1.4M1067.0 387.5l2.4 1.6M1052.5 393.2l2.0 1.0M1076.1 387.7l-0.1 2.8M1067.0 391.1l1.1 1.4M1068.0 398.1l-2.3 1.0M1056.5 394.6l2.5 0.4M1073.4 397.0l1.7 0.5M1062.0 393.1l-1.5 0.2M1050.9 394.3l-1.1 0.8M1059.8 396.2l0.4 1.6M1051.2 400.4l-0.1 2.6M1069.0 394.0l0.7 2.1M1070.9 377.7l-1.8 1.6M1060.9 385.3l-2.0 0.4M1053.3 383.7l-3.1 1.1M1046.1 388.4l0.8 1.0M1064.3 397.7l-1.6 1.9M1074.3 381.7l1.0 1.6M1064.5 388.9l2.3 0.9M1078.1 393.3l-1.3 3.2M1061.4 390.7l-1.0 1.4M1064.5 389.7l1.5 2.0M1053.4 396.9l2.2 0.8M1049.1 396.2l3.2 1.0M1050.0 401.9l2.1 2.9M1054.2 385.4l-0.9 1.6M1070.7 386.9l1.8 2.0M1052.0 388.9l1.8 0.5M1051.1 386.8l0.6 2.3M1064.9 390.7l-1.5 2.3M1063.5 398.1l1.7 0.8M1050.6 404.0l-2.1 0.8M1072.2 388.3l-3.4 0.8M1055.3 388.0l1.0 3.5M1059.8 388.2l2.2 0.2M1073.6 384.5l-2.8 2.1M1076.2 390.7l0.0 2.0M1076.8 392.1l-1.0 1.0M1067.5 392.9l1.9 0.8M1058.7 386.2l1.5 0.5M1057.0 381.4l-1.8 1.4M1053.5 388.0l1.5 2.3M1067.5 387.0l-1.7 2.1M1072.5 391.9l-1.0 0.9M1054.6 384.5l-1.4 0.8M1073.0 383.0l2.7 1.4M1051.6 391.3l0.5 2.8M1063.5 393.8l-2.9 2.2M1064.8 387.9l0.0 2.1M1071.8 388.0l-1.9 2.7M1070.3 396.3l0.4 3.0M1072.9 386.3l-1.6 1.0M1054.4 401.3l-0.6 3.6M1062.9 384.8l3.2 1.3M1052.1 386.6l-0.3 3.0M1060.6 380.8l-2.3 1.9M1059.8 401.0l0.1 3.2M1048.5 391.1l-2.1 2.1M1069.1 392.4l3.4 0.3M1046.5 390.4l1.5 2.0M1049.5 393.5l1.9 0.9M1054.4 384.6l-1.1 0.8M1055.9 401.7l1.1 3.5M1056.3 393.1l-0.2 2.3M1075.3 383.5l-2.0 1.5M1059.9 399.2l-1.3 0.3M1066.5 394.7l-0.1 2.3M1065.7 381.5l0.1 1.7M1074.5 392.5l1.0 3.0M1064.1 393.3l2.3 2.2M1069.7 399.0l1.5 1.7M1068.2 382.9l-2.5 2.3M1053.7 398.8l1.2 1.5M1059.5 397.8l-0.9 2.0M1069.4 395.0l2.8 2.0M1063.4 393.2l-1.6 0.8M1062.4 395.2l2.2 0.1M1062.6 389.2l-0.0 3.3M1052.1 399.2l0.9 1.1M1058.0 383.6l0.2 1.7M1057.5 384.0l-1.8 0.0M1060.9 393.3l-0.8 1.3M1071.0 384.4l2.2 0.6M1064.3 386.6l-1.3 1.5M1074.1 396.0l-1.2 0.8M1059.7 392.2l0.6 1.6M1061.6 382.1l2.0 1.2M1075.4 383.1l-2.9 0.3M1069.1 397.4l-0.8 3.0M1063.1 396.9l-1.2 0.5M1071.0 376.7l-0.6 1.3M1068.8 386.6l3.1 1.4M1057.3 401.4l0.9 2.5M1062.1 396.5l1.1 2.3M1052.7 390.3l1.8 0.6M1056.7 396.8l1.5 0.7M1076.6 388.5l3.3 0.9M1070.1 390.1l-2.6 0.3M1047.7 384.7l2.3 0.7M1065.8 396.8l1.4 0.3M1049.0 392.2l-3.1 0.6M1049.2 397.3l1.5 1.0M1054.7 387.5l1.1 1.4M1057.9 394.1l-0.6 3.0M1051.9 383.5l-0.5 2.0M1052.7 391.9l-2.7 0.5M1064.8 379.2l-0.4 3.0M1074.3 392.0l3.7 0.6M1049.7 401.2l0.3 3.6M1076.6 390.9l2.8 0.7M1050.1 393.2l1.8 0.8M1049.0 396.2l1.8 0.5M1068.4 383.6l-0.8 3.3M1068.1 395.6l-1.8 0.4M1056.2 403.9l-2.0 0.5M1071.2 377.9l2.6 2.2M1052.9 402.1l2.4 2.0M1050.9 394.6l-0.6 2.6M1069.0 377.5l-2.1 2.7M1060.5 385.1l-1.9 1.4M1056.8 398.7l-2.4 2.2M1058.1 381.0l2.6 0.2M1049.2 398.0l2.9 1.3M1049.2 399.6l2.9 2.4M1061.2 391.3l-1.7 0.9M1074.0 381.6l1.9 0.2M1058.6 394.0l3.4 0.7M1071.7 392.6l-1.4 0.1M1069.8 395.8l1.9 1.2M1056.1 402.4l0.3 3.3M1055.3 395.3l-1.5 1.5M1052.0 384.8l-0.9 2.1"/>
<path d="M1109.4 401.4l0.8 1.3M1114.0 389.5l1.7 1.4M1132.9 416.9l2.6 2.1M1124.4 396.6l-2.3 1.7M1128.1 430.8l-1.5 2.5M1126.8 403.5l1.2 0.4M1122.8 405.8l-3.4 1.4M1108.1 394.4l-0.3 1.3M1102.5 388.7l1.4 1.9M1116.6 421.5l-2.4 2.3M1124.9 422.6l-2.5 1.8M1116.8 414.5l-1.6 1.0M1106.4 383.4l-0.5 1.5M1111.6 392.4l3.2 1.2M1124.6 435.3l-1.8 2.0M1121.6 417.3l-1.4 1.0M1115.2 396.2l1.5 1.0M1133.4 430.6l0.4 1.6M1108.6 400.9l1.4 3.2M1119.3 408.4l-0.7 1.6M1115.2 406.7l2.0 0.4M1122.4 414.2l1.0 1.1M1113.5 389.7l3.7 0.0M1132.3 431.2l1.7 2.7M1128.6 413.5l1.9 0.2M1115.2 406.6l-0.4 1.7M1103.9 385.0l0.5 1.5M1104.0 384.7l-1.6 0.9M1120.7 413.3l2.6 0.3M1119.8 392.6l-1.2 2.8M1117.3 400.8l-0.1 2.9M1122.4 422.5l-2.2 2.2M1110.6 390.2l1.7 1.0M1111.4 384.5l0.9 1.3M1113.7 392.5l-1.2 0.7M1121.0 423.6l-1.9 1.1M1135.4 426.5l-0.4 2.0M1116.6 421.6l2.8 0.5M1107.3 393.9l-0.8 2.1M1103.1 393.1l-1.8 1.4M1126.9 413.5l2.1 0.0M1115.9 394.4l3.4 1.5M1118.6 419.0l0.7 3.7M1104.2 385.5l-1.3 2.7M1117.9 385.3l2.1 1.3M1107.1 390.4l1.2 0.6M1110.2 389.6l1.5 0.1M1125.9 415.6l1.5 2.9M1108.2 407.9l-1.4 0.3M1111.5 410.5l0.6 1.3M1131.5 422.5l-0.6 2.2M1120.1 408.7l-0.4 2.0M1125.7 407.8l2.0 1.8M1124.5 407.0l1.4 2.2M1116.4 390.3l-2.1 0.8M1117.7 410.7l-1.2 1.1M1112.4 410.7l2.3 0.1M1105.5 395.3l1.4 3.2M1116.8 396.2l-1.1 2.3M1107.8 409.4l-1.9 2.6M1118.7 379.3l-0.1 2.2M1124.2 426.9l0.5 2.6M1131.5 427.3l-0.7 2.5M1108.5 405.2l2.6 1.8M1115.1 387.9l-0.8 3.3M1123.5 399.8l1.1 2.4M1126.7 435.6l-3.1 1.6M1121.1 383.9l-2.1 0.4M1116.2 416.3l0.6 1.7M1122.2 388.3l2.2 0.6M1131.5 423.4l0.3 2.2M1117.6 428.0l-1.3 1.2M1130.1 429.3l0.8 1.7M1126.3 414.0l0.4 1.2M1119.5 421.5l2.0 1.4M1121.3 398.8l2.7 1.1M1124.8 413.6l-2.1 0.6M1118.2 406.4l-1.9 0.9M1111.1 403.8l-2.6 1.6M1119.0 428.7l-2.1 0.1M1128.6 417.5l-0.7 1.7M1116.3 432.8l1.7 2.9M1133.1 426.0l-2.0 2.3M1134.2 430.9l-3.3 0.9M1123.7 433.4l1.6 0.5M1127.2 409.0l-2.1 0.3M1103.3 393.1l-3.1 1.2M1120.6 418.0l3.6 0.4M1108.6 394.2l0.1 2.4M1123.1 421.1l2.7 1.8M1113.5 404.8l-2.9 1.0M1129.4 423.5l0.5 2.1M1126.3 427.9l2.6 1.6M1127.3 433.5l-2.2 2.8M1116.5 407.6l1.3 1.2M1109.5 394.8l-1.0 2.5M1128.7 421.0l-2.6 0.2M1121.9 409.8l0.1 2.1M1111.8 401.3l-0.1 2.4M1123.3 418.0l-2.7 0.1M1125.1 395.5l-0.9 2.5M1117.2 407.2l2.7 2.5M1116.5 428.9l0.1 2.1M1124.0 434.8l1.3 2.3M1120.5 418.5l-0.5 2.5M1101.6 386.1l-0.6 1.1M1114.9 396.9l-1.4 1.5M1103.1 393.7l1.4 2.5M1129.7 425.7l-2.6 0.4M1113.2 421.4l1.2 2.5M1110.4 405.8l2.1 2.0M1125.3 398.6l-0.0 2.8M1121.4 399.4l1.9 2.2M1115.1 410.3l-1.0 2.4M1125.4 397.3l1.8 1.4M1134.0 425.6l1.7 0.3M1119.2 426.3l-0.9 1.4M1132.0 426.9l-1.8 1.2M1120.6 393.7l-1.6 0.3M1112.9 399.2l-2.7 1.7M1120.3 410.9l1.7 2.2M1114.3 424.5l-2.4 0.3M1119.9 414.0l1.3 3.3M1113.0 410.5l-1.8 2.6M1107.6 389.8l-0.9 1.3M1115.9 380.4l-3.1 1.2M1126.8 430.3l-2.3 1.9M1106.0 388.4l1.4 0.5M1126.5 418.8l-2.2 0.4M1123.4 429.8l-2.9 2.3M1118.2 437.5l0.9 3.1M1113.9 413.5l-2.2 2.1M1114.7 385.2l-1.3 0.4M1126.7 410.3l-0.7 1.7M1129.9 421.2l2.5 2.5M1124.4 429.4l1.6 1.5M1103.9 385.7l1.5 0.7M1118.9 408.0l3.3 1.2M1122.0 409.1l1.5 1.7M1125.7 401.9l-0.0 3.6M1124.0 429.1l3.0 0.6M1106.9 399.4l3.3 0.9M1132.7 422.2l0.0 1.5M1127.3 430.7l-0.8 1.0M1137.6 430.0l-0.4 1.3M1125.7 414.3l2.4 0.0M1100.6 388.7l-1.7 2.7M1108.6 391.6l1.2 1.4M1115.6 396.3l-1.2 0.3M1116.0 417.8l0.2 1.4M1112.3 397.9l-1.5 1.1M1125.2 417.6l0.4 1.3M1111.9 387.4l2.6 2.4M1121.6 436.4l1.2 0.6M1116.3 431.0l-1.8 0.6M1112.7 401.5l-0.8 1.8M1121.3 417.6l1.0 1.2M1125.0 416.2l2.3 0.0M1127.8 411.7l-1.9 3.1M1110.9 405.5l3.1 1.6M1128.1 428.9l-1.0 1.8M1118.6 395.0l-0.0 2.8M1119.4 393.2l-1.9 1.8M1113.5 386.0l-0.1 1.5M1127.4 424.1l0.8 2.2M1122.6 411.4l-3.3 0.2M1119.7 399.5l2.9 0.5M1117.5 422.2l-1.6 3.0M1109.8 411.3l1.0 1.8M1120.7 429.0l0.4 2.6M1112.4 414.9l-0.6 1.4M1111.1 397.5l-0.2 1.4M1126.4 399.5l-1.3 0.3M1131.9 429.1l0.4 2.1M1117.5 397.6l2.5 2.5M1121.8 407.9l0.4 3.2M1119.4 395.4l1.3 1.9M1108.4 407.9l2.7 1.0M1112.1 400.8l1.5 1.2M1121.2 432.1l0.4 2.6M1124.3 435.2l-0.5 1.6M1112.6 380.5l-3.1 0.0M1111.8 407.3l-3.1 0.9M1126.3 411.4l2.3 1.7M1113.6 389.4l2.5 0.5M1123.9 396.6l-0.6 1.4M1134.2 427.5l1.8 2.5M1122.4 403.6l-1.3 0.5M1107.1 389.7l-2.6 1.6M1116.7 419.8l-0.1 2.7M1118.6 413.3l-0.4 2.0M1109.6 391.6l-1.3 3.0M1115.3 415.9l0.6 1.6M1101.0 387.0l-1.1 1.1M1114.8 411.2l2.2 1.6M1112.9 394.1l-1.5 2.4M1124.7 396.8l-2.1 1.8M1111.2 383.2l1.3 1.9M1101.9 390.5l-1.3 0.8M1115.0 394.3l-0.2 2.2M1113.4 408.4l2.3 2.8M1110.7 389.0l-1.1 1.2M1129.3 422.3l-2.5 0.6M1129.7 423.2l-2.3 1.5M1131.7 419.6l0.8 2.0M1134.3 429.9l1.3 3.3M1128.7 417.6l0.9 1.7M1118.4 420.8l0.2 1.8M1118.0 428.6l1.4 0.9M1110.7 384.5l0.5 1.7M1127.2 409.4l0.0 2.4M1116.1 431.4l-1.3 0.2M1125.9 424.2l-3.2 1.7M1134.7 427.2l3.3 1.7M1131.5 413.4l-1.8 0.7M1109.8 388.2l0.3 3.7M1122.3 405.4l1.0 1.5M1113.3 398.0l0.1 2.7M1118.9 414.9l0.7 2.4M1125.5 427.9l-2.6 0.9M1120.2 396.4l1.8 1.0M1117.0 426.2l-2.8 0.7M1106.0 391.0l-2.0 1.8M1121.7 438.6l-2.6 2.6M1134.3 421.1l-3.5 0.8M1109.1 403.2l-0.3 2.8M1107.4 399.1l-2.8 2.4M1127.1 432.9l-3.2 1.3M1110.4 405.0l-1.6 2.9M1118.0 385.9l-0.7 1.1M1106.3 386.0l-0.1 1.6M1120.3 402.9l-1.7 1.2M1121.2 384.7l2.4 0.6M1125.9 427.9l1.7 0.1M1112.5 407.3l-2.5 1.6M1111.5 404.9l-2.0 1.8M1108.3 404.3l2.4 0.2M1109.6 400.2l1.7 3.0M1102.4 389.7l2.1 0.9M1126.2 433.1l-1.3 1.5M1112.5 414.4l-1.6 0.9M1121.6 399.7l-3.6 0.5M1118.5 428.2l-0.6 2.1M1127.4 431.1l0.2 2.7M1109.4 383.1l-1.1 1.0M1117.2 379.2l-0.4 1.8M1125.1 414.6l-2.3 2.4M1121.1 384.6l1.8 1.6M1125.5 400.3l2.0 1.6M1106.9 387.4l-2.0 1.4M1118.0 385.0l0.8 1.3M1124.8 403.6l-0.4 1.3M1115.5 403.4l-1.1 1.5M1125.3 396.2l-0.1 2.4M1107.0 386.0l3.5 0.4M1130.8 411.8l1.6 0.7M1106.1 384.9l0.9 1.7M1122.2 428.8l-0.7 3.7M1106.5 387.0l-2.3 2.1M1122.8 399.8l-1.3 0.8M1127.2 418.0l-0.6 2.7M1116.8 405.5l0.2 2.8M1122.6 397.6l-0.4 2.2M1116.4 422.6l3.4 0.1M1103.3 394.3l-1.6 1.7M1114.7 409.9l-2.8 0.6M1125.1 434.6l1.1 1.0M1129.7 423.9l-1.8 1.3M1116.8 391.9l2.4 2.7M1134.8 430.8l-0.5 3.0M1114.1 404.5l-3.0 0.7M1120.8 386.8l1.0 3.4M1133.9 423.4l-1.8 0.7M1115.4 386.0l0.2 1.3M1111.5 392.9l0.8 2.8M1130.1 428.7l-2.0 0.4M1114.0 405.9l2.3 2.4M1128.1 415.9l-0.9 1.8M1119.7 424.9l3.6 1.1M1106.0 395.7l-2.6 2.4M1120.8 435.6l-0.0 1.6M1114.5 394.1l-1.3 2.5M1134.0 429.6l-2.7 1.2M1130.9 427.5l-2.2 1.2M1137.0 431.1l1.4 1.0"/>
<path d="M1043.6 459.1l0.6 2.4M1032.6 461.0l-0.9 3.0M1043.6 451.8l1.9 1.5M1046.2 453.7l-1.2 1.3M1037.3 466.4l2.7 1.9M1039.2 452.1l0.2 2.6M1030.2 461.1l0.1 2.4M1050.6 453.9l-1.9 0.6M1044.9 452.2l-0.8 3.0M1046.4 449.9l-1.1 1.2M1051.3 452.3l-1.5 0.7M1053.1 455.5l2.7 2.3M1049.1 460.0l0.4 1.8M1045.8 463.3l-2.1 2.2M1029.1 463.0l1.6 2.0M1045.3 459.3l2.0 0.0M1034.6 460.3l1.1 1.4M1033.3 461.9l-1.7 0.6M1053.1 457.6l-3.3 1.1M1049.1 463.2l2.3 1.6M1035.1 455.9l1.9 2.2M1029.0 457.1l-2.9 1.5M1026.9 459.4l2.6 0.0M1051.0 449.9l-0.6 2.3M1046.8 458.6l-1.0 1.1M1054.2 459.2l1.2 0.4M1049.9 460.6l1.3 3.3M1043.9 458.4l2.4 0.3M1037.1 459.7l1.6 3.0M1035.0 454.8l2.4 2.4M1040.1 457.1l-3.4 1.4M1036.4 455.0l0.8 1.3M1051.1 459.1l1.5 2.4M1051.9 463.4l2.1 1.2M1043.9 457.3l-0.2 2.4M1038.5 461.4l0.6 1.9M1039.8 464.3l2.2 1.1M1035.9 468.2l2.1 0.1M1053.4 458.2l2.3 2.1M1038.4 453.5l1.3 0.4M1034.5 460.1l-3.5 0.3M1042.6 461.4l-1.2 3.0M1038.0 462.8l1.4 1.1M1034.0 460.2l1.6 2.2M1027.8 461.0l-1.0 3.1M1047.4 455.8l-0.5 1.2M1052.2 457.9l-1.2 0.9M1037.2 457.3l-2.8 1.5M1034.2 469.5l1.3 1.0M1041.7 458.0l-1.4 0.2M1052.0 458.8l0.9 1.4M1043.2 450.7l0.9 1.2M1039.2 468.0l-2.3 1.2M1044.9 460.0l-2.6 2.1M1054.7 461.6l1.7 3.2M1032.1 456.1l-0.6 1.2M1052.6 462.9l-1.5 1.1M1038.8 452.7l0.6 3.3M1030.9 457.3l0.9 1.9M1035.3 458.4l2.8 0.6M1040.8 461.2l1.8 3.0M1047.8 457.7l1.2 3.2M1038.4 458.8l-0.3 1.4M1038.2 453.4l-3.1 0.8M1029.3 458.8l-1.3 2.3M1037.6 459.0l1.7 1.5M1026.7 457.3l1.0 0.9M1032.2 457.5l1.2 2.5M1054.1 457.9l-2.2 1.4M1047.8 458.9l2.2 0.1M1032.0 465.6l1.0 2.1M1034.2 469.5l1.0 1.2M1036.2 458.0l2.5 1.7M1036.1 453.0l-1.5 0.2M1052.4 463.1l-0.5 3.1M1026.3 459.7l-2.4 1.8M1029.5 459.6l3.1 0.8M1043.3 456.0l-0.5 2.4M1034.6 462.2l3.0 0.1M1050.4 450.3l0.5 2.7M1046.6 461.7l1.6 2.7M1038.4 464.8l-0.1 2.7M1048.8 451.1l0.0 2.1M1030.8 467.6l1.4 1.0M1032.7 466.9l-1.2 1.7M1039.4 457.5l0.0 1.3M1037.5 468.1l1.6 2.5M1043.3 457.8l-1.1 2.8M1043.9 462.9l1.1 1.5M1041.0 464.0l0.0 1.3M1041.6 465.5l2.3 1.3M1035.2 462.1l-1.5 1.4M1031.8 461.7l-1.3 0.1M1034.0 457.2l0.3 3.2M1042.5 460.2l2.0 1.7M1045.9 454.7l3.7 0.2M1043.1 466.2l-0.7 2.0M1034.5 468.8l-2.0 1.8M1027.1 461.0l0.4 1.4M1039.6 459.3l2.1 1.5M1054.0 460.7l-1.7 1.1M1033.5 461.6l-1.7 0.4M1031.5 468.5l2.5 0.1M1053.2 456.0l2.0 0.1M1047.8 459.7l2.3 0.6"/>
<path d="M1106.2 469.7l1.9 0.8M1113.8 481.3l1.8 3.0M1102.7 479.5l1.2 0.6M1109.3 479.2l-0.6 1.9M1115.9 473.9l-2.7 1.2M1107.3 482.9l-3.4 0.5M1108.4 467.0l-2.3 1.0M1118.4 476.8l1.0 0.8M1121.1 473.8l2.3 0.6M1116.8 471.1l-0.3 3.7M1101.8 478.1l3.2 1.7M1108.8 469.8l-3.2 1.4M1115.0 480.2l2.3 1.9M1114.5 464.2l-2.0 2.7M1113.0 466.3l0.5 1.4M1114.4 478.8l2.1 2.8M1106.4 476.5l-1.6 2.9M1115.2 466.6l1.1 3.0M1117.9 474.2l2.3 2.5M1115.2 471.9l1.5 2.7M1106.5 482.6l0.8 3.1M1109.9 471.0l1.4 2.1M1102.1 475.3l-0.7 1.6M1116.8 469.2l0.9 1.4M1105.8 475.4l1.8 0.8M1122.0 474.1l-3.5 1.0M1118.5 477.7l-1.0 2.1M1107.0 480.2l-3.6 0.4M1116.6 467.3l-2.1 3.1M1117.5 476.0l-2.4 1.1M1114.1 467.4l-2.0 1.2M1109.7 481.9l-2.3 1.7M1107.1 471.2l-2.6 1.4M1116.4 476.2l3.2 0.3M1111.4 464.8l3.4 0.5M1107.1 477.4l-1.7 0.4M1105.2 468.2l-3.1 1.3M1112.6 478.7l2.9 1.5M1117.4 473.2l2.0 0.2M1116.4 476.4l0.1 3.0M1110.5 475.6l1.1 1.4M1116.3 470.1l1.1 1.7M1108.0 476.3l2.1 1.1M1106.7 474.3l0.6 1.2M1113.7 466.6l-2.5 2.6M1106.8 473.5l-1.9 3.1M1112.4 475.5l1.9 0.7M1111.3 476.6l1.1 2.9M1112.4 466.4l-0.1 1.5M1108.4 477.3l-1.5 0.9M1116.5 472.4l-1.2 0.7M1106.5 469.0l-2.2 1.9M1111.7 483.9l-2.1 0.7M1109.1 481.2l1.7 3.0M1110.9 481.5l1.2 2.4M1108.8 477.9l2.1 0.4M1109.1 477.0l-2.0 1.4M1113.1 463.7l-1.5 1.7M1104.1 475.4l0.9 2.3M1113.4 478.0l-1.8 1.4M1115.3 471.9l3.3 0.4M1117.5 471.1l-0.1 3.5M1118.3 469.1l2.5 0.4M1105.4 477.3l-0.6 1.7M1103.7 479.3l-1.4 2.2M1120.5 476.7l-2.1 0.2M1110.3 475.7l2.8 2.3M1119.4 476.9l0.9 2.3M1106.1 468.4l2.0 2.1M1111.7 462.8l1.2 2.2M1106.2 472.0l1.7 1.0M1101.2 476.6l3.4 0.7M1112.3 472.1l1.6 2.5M1111.7 480.5l-1.6 0.9M1109.0 472.0l-1.8 0.1M1100.3 476.0l-2.8 0.5M1113.6 470.9l-1.4 1.9M1112.3 475.7l-2.9 2.2M1115.9 476.6l1.5 0.9M1111.5 463.0l0.2 1.8M1108.7 470.8l-1.4 0.4M1120.2 476.0l1.0 3.1M1108.9 468.9l-0.1 1.6M1102.6 470.7l2.9 1.9"/>
<path d="M1036.9 571.5l0.3 2.0M1025.7 565.5l-1.3 0.1M1019.8 568.5l-0.1 2.2M1027.6 574.8l-2.4 0.9M1027.3 569.7l1.0 0.9M1024.4 568.8l-1.7 1.5M1024.1 555.9l0.9 1.4M1024.3 558.0l-0.5 2.5M1031.7 563.4l2.2 2.8M1021.3 563.1l-0.4 2.5M1014.9 568.0l0.0 3.0M1030.6 571.2l2.1 2.2M1032.4 562.5l-2.2 0.6M1017.0 562.9l1.2 2.9M1029.9 561.6l0.5 2.7M1025.0 574.8l-1.4 0.7M1024.7 574.1l-0.7 2.1M1037.5 573.9l-3.7 0.1M1021.7 570.3l2.4 2.6M1031.2 565.8l3.1 0.9M1027.5 555.6l0.8 1.0M1026.4 557.9l3.0 1.7M1029.3 563.4l2.6 2.5M1032.5 572.7l-0.9 2.0M1031.6 558.0l1.3 1.3M1023.3 574.2l-3.0 0.7M1023.0 567.1l-2.7 1.9M1021.6 567.0l2.2 2.4M1032.4 569.6l-1.7 2.8M1018.9 560.3l-0.9 1.6M1034.1 562.1l-1.6 2.5M1039.2 565.1l-3.2 0.8M1031.8 574.2l1.4 2.8M1031.0 567.0l1.6 0.5M1016.5 568.2l-3.2 1.4M1026.4 569.0l-0.7 2.9M1035.1 579.9l1.5 0.1M1027.3 561.1l-1.1 2.4M1029.0 567.6l-1.9 1.2M1033.3 563.7l-1.4 0.5M1016.5 564.4l2.6 0.2M1021.5 563.8l1.5 0.8M1034.0 561.2l0.7 2.6M1028.0 568.0l3.6 0.8M1034.6 568.4l-1.4 0.5M1018.5 570.9l1.5 0.9M1035.0 573.0l-0.9 2.9M1038.1 572.4l-1.5 0.6M1040.4 569.8l-2.2 1.4M1018.9 563.6l1.0 1.1M1030.7 577.7l-0.0 2.2M1026.9 561.2l-1.8 0.5M1019.8 568.6l-3.4 0.5M1035.3 577.4l3.0 0.3M1022.5 564.3l-0.5 1.7M1034.4 569.7l0.9 3.4M1025.7 556.4l1.0 0.8M1018.1 564.1l0.9 1.3M1023.4 564.3l-3.2 0.7M1028.2 569.9l1.4 0.4M1022.9 556.5l0.7 1.7M1019.9 568.3l2.8 2.3M1029.6 573.3l2.6 2.4M1032.9 560.5l-3.0 0.5M1033.2 560.6l1.4 0.4M1042.2 567.1l0.9 3.4M1028.7 557.9l-2.3 2.2M1024.6 560.8l2.1 0.3M1027.1 571.2l1.0 2.0M1019.1 565.6l1.9 2.2M1035.3 575.7l-2.2 0.9M1030.2 572.4l-3.1 1.1M1019.8 568.2l3.6 0.5M1024.4 569.4l-1.5 1.3M1020.4 557.2l0.4 1.3M1027.3 558.9l-2.6 1.7M1020.7 571.0l-2.4 1.8M1020.0 563.7l1.8 1.1M1032.1 569.1l-2.7 1.2M1030.0 566.4l-0.5 1.3M1025.4 575.2l0.7 3.3M1022.9 569.6l2.0 2.1M1023.0 556.9l1.0 2.8M1037.0 566.4l2.7 1.5M1036.8 572.7l2.7 1.9M1035.2 561.4l1.8 1.1M1035.9 574.0l2.0 1.2M1028.3 569.6l-0.9 1.0M1017.1 566.2l0.1 2.9M1036.5 565.1l3.3 1.8M1017.5 571.3l-1.1 2.6M1031.7 571.1l0.3 2.0M1025.5 569.2l2.9 1.0M1027.4 573.6l-3.2 0.7M1025.1 557.7l-1.0 0.7M1021.3 568.8l-2.0 3.1M1026.0 571.8l1.9 2.4M1033.0 580.3l1.0 1.4M1037.0 564.4l-2.7 2.1M1026.9 566.9l-2.0 1.5M1028.8 572.7l0.6 3.1M1038.8 564.5l2.6 0.6M1018.4 562.2l0.8 1.0M1024.6 559.9l2.9 1.8M1030.7 573.2l-1.4 2.5M1018.6 570.5l-1.9 1.2M1026.8 570.3l3.0 0.3M1041.7 568.3l1.6 2.5M1040.9 564.2l0.4 3.6M1030.7 567.1l-0.4 1.7M1027.9 568.9l-2.1 1.6M1037.6 575.5l1.6 0.4M1037.8 575.6l0.2 2.2M1026.1 558.2l-1.2 0.8M1039.3 571.0l-0.6 1.8M1032.7 575.7l2.4 2.6M1019.4 563.2l-2.0 2.3M1019.8 558.0l1.0 2.3M1024.0 554.9l0.5 2.1M1029.0 564.3l1.3 2.1M1019.2 560.5l1.0 1.6M1023.6 569.0l1.4 1.7"/>
<path d="M1080.0 572.2l-1.4 0.2M1076.3 577.0l-0.9 1.8M1076.2 576.8l1.2 3.0M1082.2 571.4l-1.0 1.6M1078.9 578.6l-1.4 3.1M1076.7 572.7l-0.3 2.1M1078.5 572.4l2.2 1.7M1074.5 572.2l2.9 0.8M1074.9 572.6l-2.3 1.1M1077.9 573.1l-0.2 3.2M1076.9 571.3l2.5 1.6M1078.0 578.9l2.3 1.9M1077.2 572.7l-1.3 1.6M1075.6 574.3l0.3 1.4M1083.0 573.8l0.7 1.4M1074.8 571.7l2.6 0.6M1079.7 578.2l2.2 2.4M1080.7 570.5l1.4 1.0"/>
<path d="M1099.5 490.4l1.8 0.4M1094.0 489.5l0.8 3.5M1099.3 486.9l1.6 1.9M1095.9 490.8l2.8 1.9M1097.4 487.7l-2.1 0.2M1098.8 492.1l-3.5 1.2M1096.2 490.7l-1.7 1.0M1096.3 491.8l-1.6 1.3M1098.8 485.6l0.9 2.5M1095.2 484.7l-0.6 2.7M1097.9 485.9l1.3 0.3M1097.0 484.9l2.0 1.5"/>
<path d="M1057.2 497.7l2.3 1.0M1057.8 493.9l-3.4 1.0M1065.2 494.3l3.0 0.2M1064.3 495.1l1.9 2.6M1059.6 497.0l-1.6 2.0M1063.2 496.7l-0.9 0.9M1058.6 499.4l0.1 3.0M1059.3 499.6l1.9 0.5M1054.4 499.2l-1.7 0.1M1056.0 494.3l-1.0 2.9M1055.6 498.8l0.4 2.5M1057.0 495.9l1.3 0.1M1065.2 494.6l1.7 3.3M1056.3 493.1l-2.1 0.9M1060.9 494.7l1.7 0.7M1062.5 496.6l-1.5 2.7M1059.9 497.7l1.4 1.0M1058.0 498.9l2.4 2.1M1063.3 498.1l1.5 0.5M1063.1 494.1l2.7 0.2M1061.5 498.8l-1.7 2.1"/>
<path d="M1033.0 520.6l1.6 1.8M1030.1 516.5l-1.4 2.1M1033.2 510.4l-0.6 1.2M1037.7 517.0l-2.6 1.2M1037.7 513.1l-2.7 0.5M1035.2 514.3l-2.5 1.3M1035.3 517.0l-2.9 2.3M1031.1 521.0l1.5 1.8M1037.4 519.3l1.0 1.8M1035.0 515.4l0.6 1.9M1029.0 520.7l1.6 3.1M1036.1 511.1l1.9 1.2M1031.1 511.1l-1.8 1.7M1030.6 515.8l-1.8 2.8M1033.9 512.3l2.7 0.3M1035.0 521.4l1.0 1.0M1035.0 517.9l1.4 1.3M1031.0 519.7l-0.5 1.9M1033.0 512.8l3.3 0.2M1037.8 513.5l1.7 3.2M1031.9 518.0l-1.9 0.5M1038.0 513.5l-1.6 0.1M1030.9 517.9l1.1 2.1M1038.8 511.7l2.1 1.8M1031.6 515.1l2.2 1.8M1036.4 510.4l-2.8 2.2M1032.3 519.0l2.0 2.9"/>
<path d="M1001.5 446.8l0.6 2.0M978.1 441.6l-3.0 0.6M1000.9 444.4l2.4 0.6M1002.9 446.6l-2.5 1.4M985.5 441.2l1.6 1.5M1001.3 448.1l-1.0 2.8M982.6 441.4l-1.4 0.4M1002.9 444.0l1.3 0.2M984.9 442.6l2.6 2.5M996.7 442.1l-1.4 1.1M995.2 441.2l-1.7 1.2M994.4 441.1l0.0 2.2M977.7 438.7l-1.3 0.1M1002.2 444.8l-2.7 1.9M990.4 443.3l-2.4 0.2M997.4 444.4l2.0 3.2M976.7 441.7l-1.2 1.2M1000.5 442.5l-2.3 2.8M995.4 446.5l-1.8 2.5M999.7 447.7l0.7 1.5M985.1 438.8l-2.2 0.7M1003.0 443.6l0.4 2.7M983.9 442.2l0.9 1.0M999.7 445.3l1.7 2.7M976.5 437.7l0.1 3.4M990.8 442.5l-1.4 3.3M984.9 439.2l-0.2 1.6"/>
<path d="M1030.7 412.9l0.3 1.7M1028.8 416.5l-2.5 1.3M1033.2 410.8l-3.7 0.4M1036.2 412.7l-1.7 3.1M1030.6 410.9l-0.4 2.0M1033.4 412.0l-2.3 0.6M1032.0 411.6l1.3 0.0M1029.1 415.4l-2.9 1.3M1030.9 412.3l2.3 1.2M1032.9 413.1l3.3 1.3M1033.4 416.8l2.9 0.9M1035.2 416.7l1.5 1.4M1035.8 413.3l2.6 0.9"/>
<path d="M1029.2 441.6l2.9 1.0M1030.0 434.2l2.3 2.3M1034.2 443.6l3.4 0.4M1031.8 436.9l3.0 0.4M1031.1 434.8l-0.2 1.4M1034.2 442.2l-2.5 2.8M1028.3 438.0l-3.5 0.5M1031.9 433.6l0.0 2.6M1031.1 435.7l1.5 1.3M1028.8 443.5l1.5 0.9M1034.5 433.8l2.2 0.2M1031.2 440.0l-3.2 1.4M1027.0 441.6l2.1 1.8M1033.3 433.7l-0.5 3.5M1030.1 439.8l-1.6 1.4M1027.7 440.4l3.6 0.2M1030.6 438.8l2.3 1.1M1030.3 439.9l1.9 0.6M1031.1 441.3l-0.6 1.2M1034.2 436.9l-1.5 3.4M1033.4 436.5l1.8 1.8M1030.8 433.9l-1.1 3.2M1028.3 439.5l-0.2 1.8M1033.5 433.9l-1.1 0.9M1033.8 435.5l-1.7 2.4M1032.1 441.3l1.5 1.8M1031.5 440.6l0.6 2.0"/>
<path d="M1086.7 437.6l-0.3 2.2M1088.2 438.8l2.9 0.5M1083.5 439.2l3.6 0.5M1085.6 438.6l2.6 0.5M1084.6 438.4l-0.3 2.5M1086.3 438.0l2.8 0.1M1082.0 444.0l1.2 3.2M1085.9 438.5l3.0 1.5M1084.6 443.3l0.9 1.8M1086.1 442.6l0.9 1.9M1086.9 444.2l-3.1 0.2M1089.1 438.7l-1.9 2.2M1090.9 436.5l2.5 0.0M1088.4 438.6l-1.7 0.1M1089.8 442.6l-2.2 0.1M1087.9 437.3l-0.0 1.6M1089.9 439.7l3.6 0.7M1088.3 443.5l-2.6 0.7"/>
<path d="M1064.9 493.8l0.0 1.7M1059.9 494.4l-2.9 0.8M1066.0 495.0l1.0 1.7M1069.0 495.4l-0.5 2.5M1067.0 491.5l0.3 1.4M1066.7 494.8l1.3 2.7M1068.4 493.9l2.0 1.2M1066.9 495.4l1.5 0.1M1062.1 494.7l2.3 1.2M1063.4 493.9l0.4 1.9M1066.0 495.4l-2.4 1.1M1068.2 495.7l-1.7 2.2M1068.8 489.4l-0.4 1.9"/>
<path d="M1183.1 550.1 L1190.7 545.0 L1199.5 546.3 L1352.0 587.9"/>
<path d="M1185.7 555.1 L1316.7 587.9"/>
<path d="M1183.1 550.1 L1160.5 640.8"/>
<ellipse cx="1202.0" cy="574.0" rx="20.2" ry="7.1"/>
<text x="1188.2" y="578.3" font-size="9" textLength="22.7" lengthAdjust="spacingAndGlyphs">电力大厦</text>
<text x="1213.4" y="579.1" font-size="5">kw</text>
<path d="M1214.6 591.7 L1243.6 599.2 L1241.1 614.3 L1291.5 628.2 L1309.1 577.8"/>
<path d="M1246.1 551.3 L1253.7 553.9 L1249.9 570.2 L1243.6 567.7 Z"/>
<path d="M1276.4 560.2 L1319.2 555.1"/>
<path d="M1321.7 557.6 L1311.6 605.5 L1296.5 615.6"/>
<path d="M1168.0 540.0 L1165.5 600.5 L1150.4 635.7"/>
<path d="M1142.8 642.0 L1195.7 655.9"/>
<path d="M1142.8 642.0 L1127.7 703.8 L1175.6 734.0"/>
<path d="M1150.4 653.4 L1183.1 668.5"/>
<path d="M1130.2 673.5 L1157.9 683.6 L1146.6 713.8 L1127.7 703.8 Z"/>
<path d="M1170.5 691.2 L1193.2 698.7 L1180.6 731.5"/>
<path d="M1155.4 716.4 L1152.9 726.4"/>
<path d="M1183.1 668.5 L1168.0 731.5"/>
<path d="M1223.5 628.2 L1360.0 671.0"/>
<path d="M1190.7 650.9 L1360.0 701.2"/>
<path d="M1236.1 643.3 L1360.0 677.3"/>
<path d="M1241.1 643.3 L1266.3 650.9 L1256.2 691.2 L1231.0 683.6 Z"/>
<path d="M1291.5 681.1 L1314.2 688.7 L1301.6 741.6 L1273.8 741.6 L1286.4 691.2"/>
<path d="M1306.6 683.6 L1341.9 693.7 L1331.8 723.9 L1299.0 713.8 Z"/>
<path d="M1251.2 734.0 L1321.7 555.1"/>
<path d="M1276.4 731.5 L1341.9 572.8"/>
<path d="M1304.1 749.1 L1352.0 615.6"/>
<path d="M1329.3 779.4 L1360.0 701.2"/>
<path d="M1248.7 701.2 L1261.2 671.0"/>
<path d="M1334.3 577.8 L1360.0 585.4"/>
<path d="M1334.3 577.8 L1316.7 638.3"/>
<path d="M1189.1 546.1l1.6 2.0M1195.9 550.0l-2.8 0.2M1193.7 546.1l1.9 0.7M1192.9 548.1l1.7 0.6M1194.4 550.5l0.4 2.5M1195.9 547.9l-1.4 2.2M1193.5 545.7l3.2 0.5M1191.1 545.1l-2.4 0.4M1188.6 546.3l2.9 1.5M1193.2 548.0l-0.2 2.1M1195.7 550.1l1.8 0.5M1194.4 548.3l-1.2 1.0M1189.6 549.2l2.7 0.2M1187.0 550.9l-1.1 1.0M1196.4 547.7l0.6 1.4M1192.5 547.2l-2.4 0.0M1191.3 547.0l2.0 1.0M1187.7 550.6l2.2 2.2M1195.3 547.7l0.9 1.1"/>
<path d="M1174.3 562.0l-1.5 0.1M1172.3 564.9l1.3 1.8M1166.9 559.6l-2.2 0.3M1175.5 559.6l-2.4 0.8M1175.6 561.4l1.8 1.6M1169.2 561.6l1.1 0.7M1163.3 560.4l2.7 2.0M1173.0 563.1l2.0 0.5M1177.4 565.2l-2.0 0.7M1172.8 561.1l-1.1 2.3M1171.9 559.9l1.5 1.3M1170.8 561.5l1.0 2.3M1171.5 561.8l1.2 2.4M1172.4 564.2l-0.6 1.4M1168.4 563.6l-2.2 2.8M1174.0 563.3l-0.7 1.8M1171.7 561.8l0.9 1.6M1177.4 565.6l1.5 2.1M1164.0 564.7l2.3 2.5"/>
<path d="M1152.0 595.0l-1.5 2.3M1161.5 591.1l0.1 2.2M1153.9 593.4l-1.1 0.7M1153.5 595.5l3.1 1.1M1154.7 596.1l2.3 2.2M1159.6 589.3l-0.6 3.1M1161.5 590.0l-3.3 1.1M1160.7 587.7l0.4 2.8M1155.6 589.9l-0.8 3.5M1155.0 590.9l2.0 2.9M1153.1 591.2l1.7 2.1M1151.0 595.4l0.2 2.9M1151.5 592.9l0.2 1.7M1155.9 591.9l-1.5 0.8M1155.1 591.5l1.4 0.7M1156.3 592.6l-1.1 2.7M1151.4 598.7l-1.9 0.4M1152.0 597.0l2.8 0.7M1154.4 596.9l2.3 1.0"/>
<path d="M1159.0 642.4l-2.0 2.5M1162.0 646.9l1.8 0.9M1160.7 642.3l-0.4 1.2M1168.6 641.8l-2.8 0.4M1159.6 643.2l3.3 1.4M1166.1 642.6l-2.3 2.1M1168.4 637.4l1.0 2.2M1165.5 641.3l1.4 1.4M1164.8 638.6l-1.3 0.8M1164.6 644.6l2.1 1.4M1159.8 641.8l-1.2 3.3M1164.6 644.9l1.5 2.5M1167.3 638.0l-1.3 1.5M1162.0 640.7l-1.9 0.6M1164.2 644.6l0.8 2.6"/>
<path d="M1268.3 561.1l0.6 3.4M1264.3 564.9l3.3 0.1M1267.7 562.1l1.3 0.7M1269.6 557.6l2.2 2.6M1266.7 557.8l-0.7 2.7M1260.5 563.7l-0.5 1.6M1271.1 556.5l-0.4 2.0M1266.9 563.3l0.9 2.3M1262.8 561.5l2.3 2.8M1270.9 554.9l-2.6 2.3M1269.9 561.3l2.3 2.7M1270.5 559.0l0.4 3.0M1271.1 555.0l2.8 0.2M1261.8 565.6l-3.3 1.7M1261.3 562.5l2.9 0.6M1260.0 560.9l1.3 1.0M1272.5 559.6l-1.8 2.4M1264.5 559.0l1.2 0.8M1260.2 562.1l-0.2 1.4"/>
<path d="M1317.4 559.8l0.8 1.2M1316.7 562.7l-2.1 2.2M1313.5 559.6l-1.1 1.0M1315.8 559.6l1.1 0.8M1314.8 561.8l-0.0 3.3M1319.6 561.8l1.5 1.3M1313.9 559.1l1.6 1.9M1314.8 559.7l-2.4 2.0M1321.4 557.7l-0.7 2.7M1320.8 556.6l-2.3 1.1M1320.5 560.0l1.7 2.2M1315.1 558.6l1.3 3.4M1313.7 559.2l-1.3 2.0M1316.7 557.4l-0.2 2.4M1317.4 559.6l-0.6 3.7"/>
<path d="M1290.9 623.1l0.7 1.4M1292.2 627.4l-1.1 0.6M1292.2 623.5l1.4 3.5M1291.6 625.2l-0.2 1.7M1295.4 625.3l-1.8 2.7M1298.2 621.0l1.2 0.5M1299.3 623.7l-1.6 2.2M1294.1 621.3l0.2 1.5M1295.1 625.9l-0.9 3.4M1301.2 622.1l-1.6 0.3M1299.6 622.3l-0.2 1.5M1297.8 625.4l-2.2 2.8M1298.2 619.0l1.0 3.2M1298.9 621.7l0.3 2.2M1294.6 623.2l0.2 2.7"/>
<path d="M1225.9 630.7l-1.1 2.5M1228.4 633.4l1.7 3.4M1227.0 633.5l1.6 2.2M1227.0 632.6l2.1 0.3M1228.1 634.1l-1.0 0.9M1227.2 631.3l0.4 3.5M1231.7 634.9l-2.4 0.5M1229.4 630.5l-1.2 1.5M1228.9 631.2l-0.1 2.2M1231.4 633.4l-1.4 1.3M1228.5 633.4l1.3 1.9"/>
<path d="M1276.3 683.1l1.5 2.5M1283.2 681.5l1.7 0.5M1282.1 676.0l2.3 1.4M1283.3 683.2l-2.4 1.2M1280.8 681.2l-1.5 0.1M1282.8 682.5l-0.8 1.3M1285.9 680.8l-1.2 1.2M1281.9 676.3l3.0 0.1M1284.3 681.0l-0.1 1.4M1279.3 685.4l-1.5 1.4M1282.4 678.5l0.4 2.9M1283.5 680.4l2.7 1.3M1284.7 680.1l-1.1 2.5M1282.6 685.5l-1.9 0.2M1283.9 681.1l0.2 2.0"/>
<path d="M1248.1 738.2l-2.1 1.5M1254.6 733.3l-2.9 0.2M1249.7 736.4l2.4 0.5M1248.2 742.9l2.6 2.4M1250.4 735.2l-2.7 1.3M1247.8 740.6l-1.8 3.0M1251.7 741.6l-3.6 0.7M1253.9 739.9l2.9 0.7M1253.8 735.3l-1.9 1.0M1253.6 735.4l-0.5 2.8M1245.5 739.7l1.1 2.1M1254.8 740.6l-1.5 0.3M1251.3 735.1l1.5 0.3M1256.0 737.1l-0.2 2.7M1250.5 735.7l0.3 3.5M1247.7 744.0l2.5 0.6M1246.0 739.2l2.3 0.5M1254.0 733.2l0.4 2.0M1248.5 738.5l1.2 3.5"/>
<path d="M1339.3 771.9l-1.9 1.4M1340.9 764.9l-1.4 0.0M1343.1 765.2l-1.7 3.3M1337.3 772.1l-1.0 1.0M1341.7 767.6l-1.1 1.9M1344.1 764.9l1.4 1.2M1343.1 764.2l0.8 3.6M1343.0 761.9l0.5 1.4M1335.6 771.7l0.3 1.4M1340.0 771.1l-1.5 1.5M1339.7 772.7l-3.0 0.9M1341.7 765.5l1.7 2.0M1335.1 771.5l1.3 0.8M1340.4 764.1l1.7 2.7M1341.4 765.9l-1.6 0.5M1336.2 765.7l-2.1 2.3M1335.4 771.3l3.2 0.7M1338.4 764.6l-2.1 2.9M1341.0 762.2l2.2 0.2"/>
<path d="M1321.9 759.5l1.7 2.9M1323.2 760.1l-2.5 0.6M1321.3 761.8l-1.4 0.7M1320.2 753.1l1.1 1.7M1320.9 760.2l-2.5 0.1M1322.4 751.9l1.8 0.8M1322.2 753.2l1.6 3.0M1321.6 755.3l-1.5 0.6M1321.0 759.7l0.1 3.0M1324.5 754.6l2.6 1.6M1317.7 757.5l1.3 1.8M1319.2 755.2l-0.9 2.0M1324.1 752.3l-2.8 1.7M1323.3 756.4l3.4 0.9M1326.8 754.2l1.7 0.5"/>
<path d="M1382.9 332.9 L1409.1 341.6 L1403.3 358.3 L1380.0 351.0"/>
<path d="M1413.4 358.3 L1444.0 368.5"/>
<path d="M1414.9 354.0 L1413.4 358.3"/>
<path d="M1380.0 351.0 L1444.0 369.2"/>
<path d="M1380.0 368.5 L1442.5 393.2"/>
<path d="M1474.5 368.5 L1481.7 370.7 L1478.8 378.7 L1472.3 376.5 Z"/>
<path d="M1473.0 390.3 L1540.0 415.0"/>
<path d="M1467.2 404.8 L1540.0 429.5"/>
<path d="M1473.0 390.3 L1464.3 406.3"/>
<path d="M1515.2 316.2 L1528.3 294.4 L1540.0 297.3"/>
<path d="M1515.2 316.2 L1531.2 321.2 L1540.0 323.4"/>
<path d="M1407.6 406.3 L1413.4 407.7 L1409.1 420.8 L1403.3 423.7 L1401.8 429.5 L1388.7 429.5" stroke-dasharray="8 4"/>
<path d="M1413.4 406.3 L1423.6 405.6 L1414.9 431.0 L1412.0 430.3"/>
<path d="M1416.3 406.3 L1426.5 407.0 L1417.8 431.7"/>
<path d="M1506.7 210.2 L1492.8 242.8 L1485.8 268.4 L1476.5 294.0 L1464.9 324.2 L1455.6 347.4" stroke-dasharray="10 4"/>
<path d="M1518.4 269.5 L1546.3 277.7 L1541.6 289.3 L1514.9 280.0 Z"/>
<path d="M1527.7 294.0 L1546.3 299.8"/>
<path d="M1527.7 294.0 L1516.0 319.5 L1530.0 321.9 L1539.3 328.8 L1530.0 347.4 L1546.3 357.9"/>
<path d="M1516.0 294.0 L1506.7 292.8 L1484.7 373.0"/>
<path d="M1525.3 259.1 L1541.6 264.9"/>
<path d="M1475.6 296.7l1.0 1.1M1481.7 296.2l1.7 2.9M1481.7 291.9l-1.7 0.8M1480.5 295.1l3.7 0.0M1477.4 298.6l-1.9 1.5M1479.5 301.8l-2.3 1.0M1474.6 296.0l2.1 3.1M1478.3 291.6l-0.7 1.3M1481.6 297.5l2.5 0.2M1479.4 289.1l0.5 3.2M1481.3 292.1l-0.6 2.5M1483.0 295.6l-0.9 1.6M1477.0 298.8l-1.6 2.8M1475.4 297.3l3.0 0.9M1472.7 299.4l0.6 3.2M1480.5 289.5l0.7 1.4M1474.5 298.9l-2.4 1.8M1481.9 294.6l3.0 2.2M1477.6 294.6l-1.5 1.1M1477.3 302.2l3.4 1.5M1480.0 291.4l-2.7 0.3M1477.8 294.5l-2.6 0.9M1476.3 297.5l1.2 1.7M1482.2 291.1l-1.2 2.9M1476.6 301.1l-1.1 0.9M1481.6 290.9l3.7 0.2M1480.3 298.0l-1.3 0.1M1477.3 298.3l1.8 2.4"/>
<path d="M1479.1 308.8l0.9 3.1M1482.0 306.1l-2.2 0.9M1489.4 299.3l2.9 0.9M1487.1 299.8l1.5 2.7M1486.2 305.4l-1.9 2.9M1482.7 305.7l1.7 1.3M1489.3 306.7l0.8 1.7M1488.8 298.9l0.8 2.1M1483.5 301.8l-0.7 1.1M1476.0 310.2l-1.3 1.2M1482.6 302.2l1.8 1.0M1475.1 314.4l-0.8 3.2M1481.4 308.2l3.6 0.3M1478.9 310.5l-2.0 1.0M1480.0 311.1l-2.9 2.0M1479.2 307.3l-0.0 2.7M1486.4 308.0l-0.7 1.7M1488.1 306.5l-1.3 0.7M1481.4 311.2l0.6 1.6M1473.9 314.0l2.1 0.2M1479.5 305.4l0.4 3.1M1472.9 310.8l-1.4 2.4M1482.0 305.1l1.6 3.2M1480.5 306.0l0.1 1.5M1485.0 310.0l-0.6 1.1M1486.9 301.4l1.9 0.2M1480.2 303.3l-2.3 0.1M1473.3 314.2l-1.3 0.1M1473.6 308.3l0.9 2.0M1474.9 316.0l-1.5 1.3M1484.1 305.9l-1.5 1.1M1491.4 304.2l-1.0 2.5M1482.5 302.2l-2.3 0.8M1475.4 309.7l-2.1 2.5M1475.9 309.7l-1.4 0.0M1481.7 312.0l-1.6 2.0M1478.9 304.7l-1.5 1.5M1475.7 315.6l2.3 0.7M1485.6 305.6l1.0 2.9M1477.8 311.7l0.9 3.5M1487.2 301.5l-2.2 0.8M1477.2 306.5l1.1 0.7M1476.0 309.6l-1.9 2.9M1487.4 308.9l-3.4 0.6M1475.8 306.3l-0.6 2.1M1488.8 298.6l-1.9 0.3M1486.1 307.2l0.2 3.2M1486.5 300.9l-3.1 2.0M1488.3 304.6l-0.5 1.4M1482.0 305.2l2.7 2.4M1475.9 307.8l-2.3 1.1M1487.4 300.9l-2.2 0.7M1489.5 304.1l1.0 1.9M1474.6 312.1l3.4 0.8M1476.4 308.7l0.9 2.3M1487.9 299.6l1.2 2.3M1483.7 310.1l-0.4 2.9"/>
<path d="M1506.2 303.6l0.3 1.7M1503.3 312.7l-0.8 1.3M1508.3 302.2l0.9 3.1M1503.8 309.1l-2.3 1.8M1499.2 306.6l-2.0 1.9M1505.9 310.2l-0.6 3.7M1503.3 311.1l-1.7 0.1M1501.5 308.6l1.5 2.3M1498.0 306.6l1.5 0.4M1504.8 309.4l-0.4 1.6M1508.8 308.3l-1.6 0.2M1504.9 301.4l-1.9 0.9M1508.8 307.5l0.3 2.0M1501.0 311.3l-1.5 2.5M1499.5 308.8l1.1 1.2M1499.1 307.8l-3.1 1.5M1505.2 303.8l1.8 3.0M1498.8 306.8l-1.9 0.3M1508.9 300.4l2.0 0.6M1511.0 305.0l-0.9 2.4M1503.5 305.5l-2.2 0.4M1501.1 310.2l0.8 1.9M1510.9 302.9l0.4 3.5M1499.7 306.8l-1.5 0.1M1506.5 302.3l3.4 1.2M1506.4 302.7l2.4 1.9M1506.7 302.3l2.1 0.3M1504.4 304.3l-1.8 1.6M1502.1 308.9l2.7 1.3M1508.8 299.8l2.3 1.4M1500.0 305.8l-0.0 1.7M1507.0 304.3l2.7 2.3M1507.1 307.5l-1.5 1.2M1500.7 307.2l-0.1 3.1M1499.5 307.9l3.2 0.2M1510.3 302.6l-0.6 2.2M1502.4 306.8l1.8 0.0M1503.8 305.1l-0.6 1.5"/>
<path d="M1468.3 351.9l2.9 2.4M1462.2 355.8l-3.5 0.3M1478.5 346.5l-0.0 3.3M1464.6 353.2l2.9 1.7M1473.7 346.8l-1.6 1.3M1475.3 347.9l-1.2 2.7M1464.0 350.0l-1.7 2.1M1468.1 345.4l2.4 0.1M1475.7 348.2l3.3 1.6M1466.8 353.2l0.9 3.1M1470.3 348.4l1.6 0.3M1473.7 341.5l-1.3 3.4M1471.2 347.3l-2.0 2.6M1463.8 347.7l1.6 2.3M1463.5 349.9l0.2 2.1M1472.7 349.5l-0.4 3.2M1465.7 353.1l-1.4 0.7M1460.4 352.2l0.9 0.9M1464.3 353.3l0.1 2.8M1467.2 345.7l-3.6 0.2M1469.5 351.6l-1.2 2.0M1464.2 354.8l2.3 0.3M1466.6 351.2l0.5 1.3M1465.2 346.2l-1.0 3.4M1473.0 349.5l-0.5 2.6M1468.1 344.5l1.3 2.0M1470.8 350.3l-1.3 1.7M1477.0 344.2l2.5 0.6M1464.9 349.4l-1.1 3.1M1473.9 348.9l-0.3 1.5M1471.4 349.7l1.9 3.2M1462.0 352.9l2.1 1.8M1464.5 350.8l3.0 2.0M1475.6 344.2l2.3 1.3M1465.4 353.6l-1.4 0.7M1463.4 352.4l1.1 1.1M1461.6 348.3l-1.5 0.7M1460.9 350.8l3.2 0.3M1473.1 345.9l-3.6 0.2M1468.7 345.2l-0.9 0.9M1477.2 345.7l-0.8 1.3"/>
<path d="M1458.3 358.9l-2.3 0.4M1452.1 363.2l0.7 2.8M1455.4 355.7l-0.7 3.2M1459.0 354.0l1.2 2.1M1445.8 359.5l-1.5 2.7M1450.1 358.2l0.5 1.5M1453.0 355.9l0.9 1.1M1454.2 362.4l-0.8 1.3M1447.8 364.0l2.6 0.7M1444.2 361.3l-2.1 0.8M1448.3 358.5l-1.7 2.0M1454.4 355.4l0.7 1.9M1445.0 363.6l-0.2 2.5M1455.8 357.5l0.2 1.7M1450.3 358.9l0.6 2.8M1451.4 358.2l-1.1 1.1M1459.1 359.3l1.4 1.0M1451.9 356.3l-0.1 2.5M1455.9 355.3l-1.0 1.0M1452.7 359.1l1.0 2.3M1450.9 362.5l-0.6 1.1M1450.8 359.2l-1.6 2.9M1458.4 359.8l-2.5 0.6M1446.2 365.3l-3.3 1.3M1450.2 358.0l0.0 1.6M1448.4 359.5l-3.2 1.7M1457.9 357.5l-3.3 1.3M1451.1 359.7l1.0 1.4M1456.8 355.9l1.0 3.3M1452.4 356.1l-0.5 1.4M1451.7 358.2l-2.0 1.7M1452.9 361.8l-2.2 0.7M1454.4 355.9l-1.4 0.2M1454.5 357.7l1.5 0.5M1449.9 358.4l-0.3 3.7M1458.0 359.9l0.2 1.7M1446.0 364.2l0.8 2.8M1449.0 360.1l-1.5 3.2"/>
<path d="M1483.5 355.7l2.5 0.2M1480.6 347.7l-1.8 1.5M1480.1 359.3l-2.2 0.2M1479.6 358.3l3.6 0.7M1482.4 352.4l2.1 0.5M1475.7 358.0l0.1 2.0M1483.0 355.0l3.6 0.5M1483.0 352.7l3.6 0.4M1479.0 354.2l-1.4 2.0M1476.8 355.6l-3.0 1.2M1486.2 349.4l0.7 3.5M1478.6 358.6l-2.4 1.1M1485.8 351.8l2.2 2.9M1480.7 360.4l1.5 0.1M1476.4 357.8l-0.4 2.2M1485.2 354.9l0.7 1.2M1488.0 351.5l-3.5 0.4M1479.0 351.7l-3.5 0.8M1478.4 354.1l2.2 0.4M1478.8 356.3l1.5 2.9M1478.6 353.5l-0.7 2.4M1478.7 358.6l1.1 1.5M1488.1 351.6l0.1 3.5M1484.0 356.4l-0.1 2.0M1483.6 357.8l-3.3 1.4M1482.6 348.0l2.9 0.3M1481.1 352.2l2.2 2.1M1480.9 349.3l1.1 1.8M1482.3 357.6l2.1 0.1M1480.4 348.8l0.8 3.6M1486.4 349.5l-2.2 1.8M1477.6 352.9l0.1 1.3M1479.2 358.6l-2.1 0.7M1479.0 352.2l-1.2 3.3"/>
<path d="M1459.0 380.8l1.8 1.6M1444.5 383.7l-1.7 2.1M1439.3 378.5l0.0 3.0M1436.8 374.1l1.2 1.9M1445.8 382.9l-0.1 1.8M1446.2 380.6l2.7 0.4M1447.5 382.0l-1.6 2.7M1438.9 374.4l1.9 2.1M1455.6 382.7l-1.0 0.8M1441.5 378.1l-2.9 1.0M1453.1 388.2l2.4 2.7M1439.4 377.5l1.2 0.9M1442.2 380.2l-0.9 1.4M1441.7 382.9l-1.0 3.1M1459.0 381.5l3.3 0.5M1454.3 381.5l-2.5 1.7M1442.6 380.2l-2.0 1.6M1449.0 377.7l1.4 0.3M1451.0 387.5l-2.8 1.9M1447.8 376.2l-2.5 0.7M1447.8 383.0l2.7 2.4M1447.7 381.8l1.3 2.4M1457.8 381.5l2.3 1.9M1451.3 382.1l-1.8 1.8M1441.5 375.5l1.2 1.8M1437.8 380.4l0.8 1.5M1438.9 376.2l2.3 0.5M1439.4 376.4l1.7 0.7M1458.5 380.4l-0.1 3.3M1453.9 379.4l1.5 2.2M1449.9 386.2l-0.2 1.6M1436.7 376.2l-1.7 0.7M1449.9 384.3l1.7 0.0M1447.8 377.5l2.7 0.9M1439.0 377.7l-1.3 0.0M1443.2 374.0l0.2 3.2M1453.1 381.0l1.4 2.2M1449.5 376.6l-3.1 0.9M1453.7 378.6l-0.3 1.6M1457.3 381.4l2.4 0.8M1447.0 379.5l-1.7 2.0M1443.6 382.8l2.0 1.6M1436.5 378.6l2.1 1.6M1452.9 378.2l2.4 0.7M1450.4 378.4l1.7 3.2M1451.4 378.5l-0.7 1.8M1439.1 371.0l-3.0 2.1M1440.3 379.7l-1.2 1.1M1454.9 388.2l1.8 0.3M1452.1 381.3l1.2 0.5M1453.2 388.0l0.5 3.1M1448.3 386.3l1.5 2.0M1447.2 385.2l-3.1 0.8M1448.2 378.9l-3.1 0.2M1457.6 382.7l0.3 2.4M1443.6 382.9l0.1 3.1M1445.3 383.9l-1.7 1.0M1455.8 388.3l-2.4 1.8M1447.1 376.2l2.0 0.7M1447.9 384.8l1.1 2.8M1447.2 384.8l-1.2 0.3M1452.8 380.5l-1.4 0.3M1446.2 374.6l-0.5 1.3M1437.7 376.8l1.1 0.6M1453.4 386.9l0.0 3.4M1447.1 384.4l1.3 0.4M1451.5 380.0l-0.7 3.0M1448.0 378.3l-2.2 0.4M1445.7 379.8l2.6 0.3M1450.7 378.2l-1.4 1.9M1456.8 383.4l3.4 0.9M1440.3 382.2l-1.0 1.9M1445.6 382.9l-1.5 0.6M1444.3 374.3l-0.1 1.9M1441.5 379.4l-1.8 0.2M1447.7 379.7l-0.4 2.0M1441.0 375.1l-2.4 0.6M1458.5 380.1l2.9 2.0M1438.3 377.1l1.3 0.8M1444.8 383.3l-0.2 1.3M1438.7 381.8l-2.0 1.6M1443.9 376.7l1.8 0.2"/>
<path d="M1453.0 390.7l-3.3 1.6M1450.8 391.8l0.3 1.5M1446.1 396.3l3.4 0.4M1449.1 393.8l-0.9 2.2M1447.2 395.7l0.4 2.0M1448.1 395.7l-3.0 1.4M1453.7 391.1l-1.4 0.2M1454.4 392.4l3.4 0.3M1448.4 396.9l2.8 0.5M1450.9 392.3l1.6 2.8M1452.0 388.0l1.5 2.1M1446.9 395.4l-0.7 3.3M1452.6 391.2l-3.4 1.4M1444.3 396.2l-1.5 0.1M1449.4 399.7l-1.5 1.0M1451.0 398.3l2.2 2.3M1446.7 396.5l-2.8 0.6M1451.1 397.9l-3.4 1.1M1448.3 392.3l0.9 1.4M1445.7 394.8l-1.6 2.7M1445.9 400.9l-2.1 1.5M1453.3 387.9l1.5 0.2M1447.1 399.5l-0.6 1.4M1454.4 392.8l-0.4 1.9M1450.7 398.4l-0.5 1.3M1449.3 395.6l-1.5 2.1M1447.4 398.3l-0.0 2.9M1457.1 392.4l1.7 2.7M1445.8 396.5l3.2 0.6M1448.2 399.1l-1.0 3.1M1450.4 391.1l-2.2 2.4"/>
<path d="M1458.9 399.4l0.8 1.3M1457.0 395.6l1.5 3.2M1463.0 395.7l0.5 1.5M1457.1 395.6l-2.4 2.2M1453.7 400.2l-0.2 2.2M1458.7 393.9l-2.1 2.0M1454.2 398.0l1.5 0.7M1456.8 396.3l2.2 0.1M1452.1 399.3l-2.3 1.5M1455.3 398.6l0.6 2.2M1458.4 395.1l-0.9 2.7M1463.3 395.9l-2.0 1.8M1455.5 403.1l-1.3 2.5M1455.6 396.9l3.3 1.2M1457.7 397.4l-2.3 0.8M1456.4 398.6l0.0 2.8M1458.9 393.7l-2.2 2.1M1462.2 393.4l3.4 1.4M1457.7 400.9l-3.0 0.8M1456.4 399.4l-0.4 1.9M1461.1 399.0l-0.7 2.7M1457.0 396.9l-1.3 0.7"/>
<path d="M1469.3 401.1l-1.7 0.1M1471.5 397.6l2.0 0.3M1469.5 404.6l-1.6 3.1M1466.3 403.7l-1.4 0.7M1468.7 402.1l-1.6 0.7M1464.6 400.9l-0.6 2.8M1464.3 402.6l0.3 2.8M1469.1 405.3l-0.5 2.8M1468.5 399.0l-0.7 2.1M1469.8 398.7l2.2 0.4M1469.2 405.2l2.3 0.6M1469.2 398.4l1.8 0.1M1466.7 400.2l-1.5 0.9M1471.8 397.7l1.7 1.5M1466.9 398.6l-1.5 0.5M1469.5 399.1l-1.3 0.7M1467.5 403.4l1.3 1.3M1469.5 402.8l-0.2 1.6M1467.2 398.1l1.9 0.0"/>
<path d="M1489.3 405.4l1.2 1.1M1492.6 401.0l-0.3 3.3M1489.4 406.5l1.9 2.2M1487.5 409.6l-3.6 0.6M1492.1 403.6l-1.2 3.0M1494.4 402.5l0.9 1.5M1489.0 407.1l2.7 0.7M1486.7 408.9l1.8 1.5M1494.8 404.0l2.7 1.1M1490.7 408.0l2.1 1.9M1490.2 405.0l-1.0 2.1M1493.7 403.8l1.2 1.3M1492.1 404.2l2.0 1.1M1494.5 402.0l1.7 2.2M1485.6 406.7l-1.3 0.3M1486.4 406.2l1.0 0.9M1490.9 405.3l3.0 0.2M1491.3 405.2l2.1 1.9M1496.6 403.9l0.5 1.2M1489.8 406.9l0.8 2.7"/>
<path d="M1438.3 419.1l2.4 2.0M1438.2 421.2l1.2 2.3M1441.9 421.9l-1.6 2.1M1442.3 419.7l-1.1 1.0M1439.5 417.3l2.1 2.3M1437.9 424.0l2.9 0.5M1441.6 420.0l-0.3 3.2M1436.6 422.9l-0.3 1.9M1444.3 420.1l-0.2 1.3M1439.7 423.5l-0.2 3.0M1441.4 422.1l-3.3 1.6M1440.6 422.3l-1.6 1.0M1436.1 415.1l0.2 1.4M1442.2 419.3l2.1 0.3M1436.2 417.6l1.7 1.1M1437.7 421.6l1.4 1.4M1435.4 415.1l1.4 1.0M1439.6 421.7l0.2 3.6M1434.1 418.7l2.6 1.0M1439.0 425.4l-1.1 1.5M1444.9 420.0l0.7 1.5M1435.9 419.8l-1.3 0.9M1437.2 420.3l-1.9 1.2M1431.6 420.9l0.5 2.1M1440.1 422.9l1.2 2.3M1431.5 420.9l0.8 2.9M1441.9 424.7l1.5 0.4M1434.1 421.1l1.6 0.6M1438.4 416.1l-3.3 1.2M1440.7 422.8l-2.0 2.0"/>
<path d="M1536.9 335.1l2.8 0.7M1539.8 336.5l-1.9 1.6M1533.8 332.9l1.2 1.1M1533.9 333.2l2.3 2.0M1533.5 329.9l-2.1 0.1M1537.0 336.6l-3.2 0.9M1538.2 333.1l-0.5 1.2M1531.3 332.2l-1.9 0.6M1531.7 331.4l-1.5 0.9M1531.6 337.2l-1.4 2.3M1533.7 336.1l1.7 0.0M1538.4 340.7l2.4 1.6M1531.9 331.5l-2.4 2.2M1532.6 330.8l2.8 0.6M1539.8 332.9l2.9 0.2M1530.8 336.3l0.9 2.8M1532.4 334.8l-1.5 1.5M1530.8 333.6l2.0 2.4M1533.6 338.8l1.8 2.3M1534.2 336.9l-1.6 3.2M1534.0 337.8l-0.5 1.2M1531.1 336.2l0.3 1.2M1533.7 336.9l-2.9 2.2M1533.2 329.7l2.6 0.8M1531.8 332.7l-0.1 3.6M1534.9 334.9l1.4 2.4M1538.4 332.1l1.4 2.6M1536.8 335.4l0.4 1.4M1534.7 332.0l2.1 0.4M1536.4 338.4l3.3 0.2"/>
<path d="M1417.7 290.4l-1.5 1.7M1417.9 291.3l1.9 1.0M1417.8 294.3l-1.2 2.2M1420.3 293.3l0.5 1.3M1422.3 290.6l1.7 1.0M1419.5 291.9l0.4 1.6M1420.8 293.2l-1.4 3.2M1408.9 293.6l-1.9 1.6M1414.4 294.3l-2.9 2.2M1408.9 293.2l0.9 1.0M1421.5 293.9l-2.0 1.6M1417.4 290.4l-1.0 1.7M1421.5 290.4l1.6 1.1M1416.8 291.4l0.9 2.3M1410.7 292.3l2.3 0.1M1417.9 292.3l2.6 0.1M1422.8 291.6l2.2 2.5M1421.8 293.5l0.2 1.8M1410.2 292.8l2.6 1.3M1410.6 291.9l-1.3 2.6"/>
<path d="M1391.9 294.1l-3.0 1.0M1391.7 291.4l1.7 0.5M1389.9 295.6l-0.5 1.3M1396.5 290.7l-1.6 0.5M1395.3 293.8l-1.1 1.6M1396.0 290.3l0.8 2.3M1392.3 295.3l0.1 1.5M1392.3 294.6l-1.3 0.4M1395.7 293.2l2.6 0.0M1396.4 291.6l-3.0 0.6M1391.9 295.3l0.1 1.5"/>
<path d="M1503.3 246.0l-1.2 0.5M1510.0 241.7l2.8 0.7M1507.7 246.9l1.3 1.8M1507.6 250.5l-0.5 3.4M1506.7 246.0l2.3 1.0M1506.7 243.1l1.2 2.7M1506.1 252.3l-0.6 3.1M1504.4 252.5l0.7 1.4M1504.7 246.4l0.5 3.5M1504.1 247.0l-1.4 1.6M1509.2 248.1l1.2 1.3M1502.6 252.3l3.5 0.8M1502.9 253.9l-2.4 2.0M1512.2 241.8l-1.6 2.2M1500.7 252.9l-1.0 1.7M1502.2 247.6l1.7 0.2M1499.0 249.6l1.4 2.1M1507.8 243.3l-3.3 0.8M1504.4 245.8l-0.2 1.3M1502.6 251.9l1.6 3.2M1509.0 247.3l-2.2 1.1M1506.2 249.2l1.6 0.5M1503.0 253.1l-0.6 1.6M1509.9 241.6l1.7 1.2M1510.7 245.1l-3.1 0.0M1511.3 245.6l-1.8 1.8M1513.5 243.9l-0.1 2.8M1505.9 246.8l-1.7 2.9M1506.7 243.4l0.8 2.2M1511.9 241.3l0.9 1.1M1500.2 251.6l0.7 2.6M1503.0 254.6l-1.5 0.8M1507.1 249.2l1.7 0.6M1503.6 250.5l-2.2 2.4"/>
<path d="M1512.0 253.5l2.1 0.7M1508.3 257.5l-1.9 1.5M1512.3 257.3l-3.3 1.8M1518.1 251.9l-2.9 1.9M1514.1 254.1l-1.7 2.8M1525.5 256.5l1.2 1.1M1525.0 257.1l-0.7 1.2M1509.7 259.8l-3.1 0.4M1517.6 257.1l0.3 3.3M1516.7 260.3l0.5 2.4M1525.1 255.0l0.2 1.3M1513.8 254.9l0.4 1.3M1514.1 256.2l-1.7 1.2M1520.5 256.0l-1.0 3.1M1521.5 251.1l0.9 1.0M1516.1 252.3l2.1 2.8M1514.0 256.5l2.1 2.4M1516.2 256.5l-1.5 0.7M1508.9 263.3l-2.4 1.9M1521.4 255.0l1.7 0.5M1518.6 252.2l-0.7 2.1M1524.4 256.4l0.7 1.4M1517.3 257.6l2.4 0.3M1509.3 257.5l-2.5 2.5M1508.6 257.9l-0.1 3.6M1523.9 256.8l2.8 1.5M1517.7 251.6l0.7 2.4M1509.5 255.7l0.4 1.2M1513.2 257.9l1.7 1.9M1522.8 254.0l1.0 2.8M1521.6 251.0l-3.0 1.8M1522.3 251.4l-2.0 0.7M1512.8 255.8l-2.2 1.7M1509.3 257.3l-0.8 3.2M1518.5 257.5l1.9 2.8M1518.4 256.9l1.7 2.1M1512.5 257.0l-2.3 0.4M1510.4 257.9l2.3 2.0M1511.7 260.4l0.3 2.3M1519.0 260.4l-0.5 1.7M1511.8 254.8l-1.4 3.2M1507.6 257.5l2.4 0.9M1520.8 251.6l-1.9 1.2M1517.0 257.4l-3.5 0.7M1524.7 254.4l-3.2 0.4M1517.7 257.1l0.9 1.4M1514.5 254.9l3.6 0.0M1512.5 262.7l-0.0 1.9M1513.0 253.8l-0.3 2.0M1506.5 257.5l0.9 3.4M1512.2 261.4l0.4 2.1"/>
<path d="M1535.7 280.9l1.5 2.3M1541.9 281.3l0.7 2.6M1532.8 282.6l-1.6 0.6M1529.6 279.0l1.5 1.6M1537.0 278.8l-2.7 0.1M1540.3 275.2l1.9 1.8M1532.0 285.1l1.6 2.6M1538.7 282.6l2.9 2.1M1542.4 275.9l-0.3 1.2M1537.3 278.9l-2.4 2.0M1541.7 282.5l2.1 0.1M1540.2 282.5l1.7 2.7M1540.7 277.7l-1.8 2.5M1540.6 281.6l3.3 0.6M1532.0 283.8l1.1 2.3M1540.1 275.9l-0.0 3.1M1537.7 280.2l-1.3 3.5M1531.6 282.4l-1.1 0.7M1539.7 276.9l2.7 1.7M1540.3 280.6l-2.2 2.2M1544.5 279.4l1.4 0.3M1538.0 277.6l1.8 3.1M1533.5 281.1l-2.9 0.3M1536.8 276.9l-1.8 1.3M1541.9 275.7l0.8 2.2M1543.1 279.1l-0.4 1.3M1532.1 281.1l-1.4 1.6M1534.9 280.4l3.3 0.2M1536.8 285.1l-2.6 0.8M1539.1 281.1l3.7 0.7M1538.5 279.8l-1.6 2.2M1541.0 277.9l0.9 1.4M1534.0 280.5l1.4 2.2M1537.6 277.9l0.3 3.0M1541.6 274.1l2.9 0.6M1541.5 280.0l0.7 1.3M1536.9 283.6l2.3 1.8M1537.0 284.3l2.8 0.1"/>
<path d="M1497.9 289.6l-0.2 2.3M1505.5 283.4l-1.3 2.5M1497.8 288.7l-3.7 0.6M1499.3 288.1l-0.8 1.3M1497.2 288.9l-2.2 0.9M1503.7 285.2l-3.1 1.8M1497.4 287.6l3.2 0.4M1501.1 288.7l2.3 0.7M1503.0 283.1l-0.4 3.4M1502.3 283.6l0.4 2.1M1497.7 285.3l-2.5 0.8M1504.7 285.3l2.1 0.4M1495.0 288.4l-2.4 2.1M1494.7 291.6l1.3 0.1M1503.5 282.1l-1.1 3.1M1495.3 291.7l1.5 3.0M1503.2 284.9l-0.8 2.2M1495.1 290.3l-0.5 1.3M1498.8 285.8l0.9 2.6M1496.6 287.8l3.0 0.3M1504.8 287.4l0.3 2.2M1498.5 288.5l-0.4 1.4M1500.4 289.4l1.5 2.3M1504.4 281.7l-2.1 0.3"/>
<path d="M1536.9 208.9l1.5 1.9M1539.9 210.2l2.9 0.9M1535.7 207.5l1.3 3.3M1541.3 212.4l0.9 1.3M1528.4 209.7l-1.3 0.4M1539.8 206.4l3.6 0.0M1542.2 212.0l1.1 1.2M1543.1 211.0l2.1 2.2M1538.6 206.7l-1.6 0.1M1539.3 208.5l0.2 3.2M1529.9 209.9l0.5 2.0M1540.3 212.1l-2.4 1.5M1537.8 211.2l1.9 2.4M1531.6 214.2l-2.3 2.1M1536.5 211.0l0.4 2.9M1529.3 211.6l1.0 3.3M1529.8 214.1l-3.6 0.6M1532.7 209.6l2.9 1.5M1540.5 207.7l-1.1 1.5M1541.7 206.3l-2.1 0.8M1544.1 209.1l2.9 1.2M1540.4 206.3l1.4 0.7M1535.4 210.9l-1.0 3.4M1536.6 210.6l-2.1 3.0M1544.7 209.1l0.5 1.4M1530.4 209.2l0.3 2.7M1529.7 211.7l-3.2 1.3M1544.0 211.3l0.2 2.5M1529.7 214.8l0.3 1.2M1544.0 210.7l-0.9 1.6M1529.2 212.2l2.1 1.6M1540.6 208.7l-2.9 1.8M1545.3 205.5l0.2 3.1M1534.4 212.3l2.3 1.0M1546.0 207.8l2.6 0.6M1531.0 211.4l-3.4 1.3M1540.9 210.9l0.7 2.8M1537.5 209.5l1.2 2.1"/>
<path d="M1535.5 340.5l-0.7 2.0M1540.5 331.8l0.2 2.6M1530.5 336.2l-1.6 1.1M1537.8 330.2l-2.6 2.3M1531.1 337.1l0.2 1.5M1532.9 339.0l3.4 1.0M1535.5 327.3l-1.1 2.9M1530.3 336.3l2.5 2.0M1531.5 336.5l-1.5 1.9M1534.0 331.2l2.1 0.8M1536.4 332.9l-2.6 1.6M1539.8 331.5l1.3 2.4M1538.3 338.7l1.0 2.6M1540.4 331.7l1.2 0.6M1535.7 336.2l1.1 1.6M1535.7 328.7l2.0 1.4M1536.9 339.7l-1.1 3.3M1535.6 336.2l0.1 3.3M1537.4 335.2l-2.3 0.3M1535.7 339.5l1.9 2.1M1543.7 329.4l1.3 0.6M1538.7 327.6l1.6 1.9M1536.0 336.7l2.4 2.1M1542.4 330.2l-1.8 0.3M1535.3 335.0l2.5 0.6M1537.4 339.3l1.6 0.9M1536.6 338.1l-0.1 2.0M1538.1 333.0l-1.4 0.6M1535.3 331.8l3.1 1.8M1536.8 328.8l-1.4 1.0M1532.8 336.3l-3.4 0.6M1536.8 329.7l-2.7 1.0M1537.9 339.7l1.0 3.3M1537.0 341.4l2.4 2.4M1533.5 330.5l0.8 2.3M1541.5 329.3l2.2 0.6M1542.2 328.6l0.3 1.9M1537.1 326.7l0.7 2.3"/>
<path d="M1445.9 216.5l-1.9 2.0M1447.3 215.0l0.9 1.2M1448.1 214.3l2.1 1.6M1442.7 214.1l2.9 1.2M1440.5 213.4l0.7 1.9M1445.9 211.4l3.6 0.5M1443.1 213.6l-2.1 1.3M1443.0 215.4l-0.4 1.2M1447.6 212.5l-1.0 3.1M1443.5 211.3l-1.2 1.8M1445.1 216.5l1.5 0.5M1443.4 219.2l-0.6 2.6M1447.6 216.3l-1.8 0.1M1449.7 215.6l0.3 1.2M1444.5 212.1l2.5 0.4M1445.8 210.5l-0.4 3.3M1445.8 217.3l-1.4 0.4M1442.6 217.5l2.2 1.3M1443.5 211.8l1.4 3.1"/>
<path d="M1478.8 241.6l1.6 0.4M1470.1 242.8l-1.6 1.7M1475.3 245.1l1.7 2.0M1474.6 239.8l2.7 1.8M1474.3 244.7l1.1 1.9M1476.2 243.6l-1.1 3.5M1476.0 241.4l1.7 3.2M1474.5 242.9l2.6 0.0M1474.2 244.2l1.9 2.0M1475.8 243.5l-1.4 2.0M1471.4 239.6l-0.3 1.2M1475.4 243.8l2.2 1.8M1471.4 244.9l-1.9 3.0M1472.1 238.4l-1.9 2.9M1477.4 244.7l1.9 1.1M1478.8 242.3l-2.2 0.3M1471.1 243.0l-2.2 2.3M1476.7 245.0l-2.9 0.6M1472.6 241.5l2.2 0.6"/>
<path d="M1444.0 268.6l-1.2 0.8M1444.2 268.2l1.5 2.6M1451.5 269.7l-2.4 2.1M1453.0 267.8l-0.5 1.8M1447.3 270.8l-0.7 1.6M1448.5 265.5l1.9 0.1M1443.7 266.4l-0.9 2.5M1441.0 263.0l1.9 0.1M1445.4 265.7l0.9 3.2M1451.6 266.8l-2.4 1.0M1444.7 268.3l2.2 0.7M1444.8 271.4l0.4 1.2M1444.8 267.4l-1.0 3.3M1445.6 265.1l-0.8 3.6M1444.5 264.1l1.1 1.3M1447.7 265.5l2.6 2.3M1444.4 264.8l-0.5 2.1M1452.8 268.3l-1.8 0.5M1441.3 269.9l-0.5 3.1M1451.2 270.1l1.1 2.3M1450.5 270.1l-0.6 2.3M1452.0 271.4l0.2 1.3M1453.6 268.1l-1.4 1.6M1441.7 265.5l1.9 1.0M1445.7 270.1l-1.7 2.1M1450.6 270.5l0.7 1.5M1447.1 266.0l2.9 0.7M1449.3 272.7l0.6 2.6M1448.9 267.3l-2.1 0.3"/>
<path d="M1217.2 303.3 L1210.2 324.2 L1214.9 328.8 L1205.6 352.1 L1214.9 356.7 L1209.1 373.0 L1240.5 385.8 L1249.8 370.7 L1256.7 373.0 L1269.5 347.4 L1275.3 349.8 L1283.5 331.2" stroke-dasharray="7 3"/>
<path d="M1230.0 210.2 L1224.2 235.8" stroke-dasharray="6 3"/>
<path d="M1384.7 210.2 L1366.0 256.7 L1349.8 296.3 L1340.5 328.8" stroke-dasharray="9 3"/>
<text x="1284.7" y="234.0" font-size="6">民房</text>
<text x="1266.5" y="288.8" font-size="6">民房</text>
<text x="1240.0" y="343.3" font-size="6">民房</text>
<text x="1380.0" y="406.0" font-size="6">民房</text>
<path d="M1220.5 241.4l-2.8 0.4M1218.7 240.0l1.8 1.6M1232.3 231.9l-2.9 0.2M1226.4 233.4l0.9 3.4M1229.7 239.5l-2.7 2.3M1220.9 236.4l1.4 0.6M1229.0 234.6l1.6 1.1M1220.2 237.6l-0.7 3.6M1227.4 240.9l-2.0 1.8M1224.7 233.7l-0.3 2.0M1215.2 239.5l2.4 0.5M1223.7 233.9l-2.3 0.6M1222.4 239.3l2.2 0.7M1225.2 233.5l1.5 0.6M1232.8 235.6l-2.5 1.1M1226.6 236.0l1.3 2.1M1220.2 243.3l0.2 1.8M1233.6 238.0l2.9 1.9M1233.3 234.5l0.6 1.1M1228.6 236.2l-2.8 0.9M1233.3 236.0l-2.1 3.0M1224.9 242.0l-0.5 1.8M1232.8 236.9l1.7 1.7M1219.7 241.7l-2.0 2.2M1219.1 235.6l-0.3 2.4M1221.8 242.4l-1.0 2.1M1228.4 232.9l-1.2 1.1M1227.4 237.7l1.3 3.4M1235.3 234.6l1.5 1.1M1231.0 233.6l0.9 2.4M1220.9 234.8l1.2 1.8M1220.6 234.1l-2.8 2.1M1219.3 241.5l-1.9 2.5M1231.2 233.6l1.6 2.9M1229.8 234.9l0.4 2.7M1217.0 236.4l-0.7 2.6M1228.8 231.5l-1.1 0.9M1219.7 234.3l2.5 1.5M1231.4 238.5l-3.2 1.4M1219.9 239.3l2.5 1.6M1221.7 242.4l-2.6 1.9M1233.2 231.9l-2.6 0.8M1232.8 236.3l-0.2 1.3M1233.7 235.3l2.0 1.5M1224.5 241.7l0.7 1.1M1236.2 236.6l2.5 1.4M1218.8 242.8l0.5 1.8M1228.6 239.1l-0.6 1.4M1227.9 234.8l-3.3 1.1M1231.9 235.8l-1.7 1.2M1229.6 240.1l2.9 1.3M1225.7 232.4l-2.4 1.9M1221.3 243.3l-1.9 2.5M1224.2 234.0l2.1 2.5M1232.3 232.6l-1.3 0.8M1222.8 240.7l-1.0 1.3M1235.1 235.1l-3.1 2.1M1232.3 235.4l1.2 1.9"/>
<path d="M1218.2 255.5l-2.8 0.3M1213.2 252.0l-1.0 1.3M1216.1 249.0l1.4 2.2M1218.8 254.5l-0.2 1.8M1214.7 250.4l-1.3 0.0M1214.3 250.5l-0.4 2.7M1214.5 248.7l-2.0 0.2M1214.3 251.8l1.2 1.5M1211.3 255.1l-1.6 1.6M1218.5 248.9l-1.7 2.7M1218.5 253.4l2.7 1.1M1214.3 251.5l-2.0 2.1M1214.6 249.9l-2.4 0.8M1212.9 251.6l-1.0 1.7M1214.5 253.6l-1.2 2.3M1216.4 250.9l-3.7 0.4M1218.0 253.4l2.1 0.4M1212.8 255.1l-1.2 2.6M1215.9 255.6l-0.1 1.8"/>
<path d="M1204.1 235.8l-1.1 2.4M1207.0 237.7l-3.2 0.1M1201.7 238.2l1.9 1.0M1200.6 240.5l-1.5 3.1M1205.0 241.0l0.9 2.0M1201.8 238.1l-1.9 2.3M1205.1 243.2l-2.5 1.7M1203.5 241.1l-1.5 3.4M1202.5 238.5l-2.4 1.3M1203.7 241.3l0.2 2.2M1205.6 241.4l-3.4 1.2M1201.1 237.4l-1.2 0.6M1204.4 237.1l0.2 2.2M1206.5 239.4l-1.9 0.5M1204.8 236.0l-0.4 2.7M1201.9 243.4l1.0 1.4M1201.7 244.6l3.0 0.6M1205.3 240.1l1.8 2.8M1206.1 237.9l2.4 2.5"/>
<path d="M1198.5 264.2l1.2 1.8M1201.7 266.3l1.9 1.6M1195.9 266.7l0.3 2.2M1200.8 267.7l1.4 0.1M1194.8 266.6l0.9 1.6M1199.9 262.3l2.3 0.9M1202.0 261.4l2.8 1.6M1196.4 267.4l-2.1 2.2M1199.3 264.5l2.4 0.6M1197.4 264.2l-1.2 1.4M1197.5 266.2l-0.4 2.5M1200.4 262.6l0.5 2.2M1199.9 270.3l1.9 2.6M1203.0 264.0l-2.1 2.7M1199.9 267.3l3.3 1.8M1201.4 261.0l-0.5 1.8M1201.1 264.4l1.4 0.3M1198.8 260.0l0.6 3.0M1197.4 266.2l-1.7 1.5"/>
<path d="M1210.1 300.6l1.1 1.6M1216.6 285.2l-1.5 1.1M1222.4 288.0l3.0 1.8M1208.3 295.7l-3.2 1.6M1213.2 305.0l0.2 2.6M1212.6 305.4l3.1 1.1M1210.9 293.1l-3.3 0.7M1214.8 286.2l-0.3 1.6M1219.9 296.9l-0.8 3.3M1212.8 296.9l1.0 2.7M1215.1 289.4l0.2 3.1M1209.5 295.9l-2.1 2.8M1212.6 300.5l1.0 0.8M1205.6 297.6l-3.7 0.1M1209.8 298.7l-2.6 1.9M1216.2 284.2l1.1 2.6M1211.1 293.4l0.8 2.0M1222.7 289.3l1.1 2.3M1214.4 297.4l-1.8 1.2M1214.1 298.5l2.0 0.2M1211.0 298.4l0.5 1.7M1212.5 300.2l-0.3 1.4M1215.6 283.4l1.0 1.4M1211.9 289.5l1.3 0.4M1210.5 289.7l-0.7 2.7M1217.6 291.9l3.3 1.7M1210.3 289.1l-0.8 1.1M1212.2 296.2l-2.3 1.5M1216.6 287.4l-2.0 0.9M1216.6 286.7l0.8 1.2M1221.2 290.4l-1.0 1.9M1217.3 296.8l-0.6 1.2M1216.3 300.2l-2.2 3.0M1209.1 292.4l-0.1 2.3M1219.7 297.6l-1.5 1.4M1218.4 293.6l1.4 2.2M1215.0 286.5l1.1 1.9M1216.3 291.2l1.9 0.0M1222.2 287.1l0.8 1.4M1203.8 296.8l-0.7 2.3M1214.2 291.0l-2.9 0.9M1206.6 297.2l1.0 3.2M1206.2 295.7l1.8 1.5M1216.6 286.2l-1.0 2.0M1216.4 291.7l1.8 1.4M1211.3 297.0l2.6 0.8M1222.3 295.8l2.5 0.6M1218.1 294.6l1.3 0.0M1215.6 294.4l-0.2 2.9M1206.0 298.2l0.8 1.9M1225.1 289.4l-2.1 1.9M1222.4 291.4l1.4 1.7M1223.9 293.9l-2.1 3.0M1219.6 291.9l3.5 0.9M1214.6 292.4l1.6 1.5M1211.3 302.6l-2.1 3.1M1219.9 295.4l-2.6 1.5M1211.3 302.2l1.5 1.4M1213.4 297.0l-1.3 1.1M1221.9 294.6l0.8 1.5M1213.1 288.8l3.2 1.9M1216.7 298.8l-0.1 1.2M1213.5 291.5l1.4 0.7M1213.9 289.9l2.6 1.7M1209.9 293.6l1.9 0.5M1213.1 292.7l-1.8 1.6M1202.9 297.5l1.8 2.7M1217.2 287.6l-2.6 0.3M1218.9 293.6l-2.8 1.2M1206.6 296.4l1.0 1.9M1220.6 285.4l1.3 1.3M1212.4 299.0l1.9 0.1M1215.1 284.9l-2.0 0.9M1218.7 290.4l3.6 0.2M1207.1 294.8l1.3 3.3M1217.1 297.5l1.1 1.7M1206.0 298.4l-2.3 0.3M1215.2 284.4l-1.3 2.3M1214.3 301.2l-0.6 2.1M1211.3 293.3l0.2 3.4M1217.3 291.9l1.3 0.5M1211.7 299.1l1.1 3.1M1216.0 302.6l2.9 0.5M1218.4 297.5l3.1 0.8M1218.5 290.4l-2.1 2.0M1214.0 291.1l-1.7 0.9M1210.2 288.7l1.5 1.0"/>
<path d="M1356.5 257.9l-1.4 1.0M1352.2 262.8l-2.4 2.4M1343.9 263.7l-1.0 3.2M1354.9 264.5l0.4 3.2M1350.0 266.5l3.2 1.4M1346.3 264.8l-3.0 1.0M1358.2 262.1l-2.4 2.8M1355.0 263.2l3.6 0.3M1357.2 259.6l2.3 0.6M1347.8 261.5l-1.6 2.2M1353.7 265.0l2.8 2.1M1352.6 260.2l-2.7 0.2M1342.4 262.4l-0.9 3.6M1343.0 262.1l-1.8 2.2M1354.8 257.8l-0.3 2.3M1347.8 266.8l-2.7 1.0M1356.6 262.7l-0.6 3.6M1345.1 267.6l0.5 1.9M1352.1 265.1l-1.4 2.8M1353.3 260.5l-2.2 1.7M1344.6 262.4l2.2 0.8M1345.9 264.9l3.0 1.1M1357.3 262.5l1.9 2.3M1348.5 262.6l2.9 1.4M1349.3 260.9l1.1 1.4M1351.9 264.8l-2.5 0.0M1346.3 266.5l-1.2 0.9M1354.0 262.2l-0.3 1.5M1357.1 260.5l-0.1 1.8M1347.7 264.4l2.1 2.0M1356.0 264.2l-1.6 1.9M1354.5 260.3l-2.2 0.3M1348.5 266.5l-0.8 1.4M1347.6 262.3l1.3 0.1"/>
<path d="M1330.6 281.9l2.2 1.0M1330.0 278.9l1.7 1.9M1327.1 284.6l1.1 2.5M1324.9 279.2l-1.7 0.7M1324.2 282.9l-2.0 0.2M1326.2 281.2l-0.0 2.2M1328.9 283.4l2.3 0.0M1327.7 283.4l3.6 0.8M1326.5 278.3l0.5 1.3M1326.5 277.9l1.2 1.9M1328.8 284.0l-0.6 3.2M1325.7 278.9l-2.8 1.7M1327.2 283.1l3.3 0.6M1326.1 280.8l3.3 0.9"/>
<path d="M1312.8 312.9l-0.6 1.7M1304.6 321.7l-2.4 0.3M1295.6 324.7l-0.3 1.2M1317.4 318.0l-0.5 1.9M1302.4 320.9l-1.7 0.4M1314.7 320.1l2.6 2.5M1315.6 317.6l-2.3 0.8M1295.9 323.9l1.6 3.2M1307.5 321.4l2.0 0.8M1312.8 313.0l2.1 0.5M1300.4 323.4l-3.1 0.6M1310.4 318.2l0.2 2.6M1315.5 319.1l0.7 1.3M1301.3 322.1l-1.7 0.1M1294.4 326.5l2.6 0.7M1300.7 325.3l0.5 1.8M1309.8 317.0l1.2 3.0M1297.0 327.9l0.6 3.4M1297.2 321.5l1.5 1.0M1297.8 324.8l-1.3 0.9M1306.6 324.5l-0.5 3.5M1310.2 313.5l1.9 2.8M1304.0 324.9l-0.3 1.3M1297.0 320.9l0.5 3.2M1303.8 316.5l-1.1 0.7M1316.1 317.3l0.7 2.0M1299.5 322.4l-0.1 3.7M1300.3 326.5l-2.7 1.0M1316.1 317.1l-1.4 0.6M1304.3 323.8l-1.7 0.4M1308.5 319.1l1.7 1.9M1304.4 317.1l-1.6 2.2M1308.8 316.5l2.6 0.2M1318.4 315.6l2.2 1.9M1292.3 323.0l1.6 0.5M1316.6 316.4l-1.2 1.9M1295.5 326.8l0.9 1.5M1296.1 329.2l-1.5 1.6M1300.3 328.1l-2.6 0.3M1304.5 324.5l-0.5 2.1M1319.2 318.7l2.5 2.7M1316.4 320.7l-2.0 0.3M1312.0 314.5l1.6 1.0M1299.9 321.6l-2.5 1.3M1294.6 329.1l2.8 1.6M1301.1 327.5l-1.2 2.5M1301.3 326.3l3.2 0.8M1306.7 319.2l0.4 1.3M1305.3 320.6l0.7 1.6M1307.5 319.3l1.4 1.1M1295.4 320.5l-1.1 1.3M1309.7 317.5l1.7 0.6M1310.5 316.6l-0.3 1.4M1316.8 315.0l-1.5 1.0M1315.7 313.2l-1.9 2.9M1307.4 315.8l-2.9 1.3M1310.6 319.6l2.0 0.3M1300.3 320.4l-1.3 0.9M1298.3 320.8l2.9 1.8M1292.1 322.3l-1.5 1.3M1299.0 320.3l-0.5 1.4M1304.3 322.7l2.3 0.0M1294.5 321.1l-1.0 0.8M1299.4 328.3l2.3 0.3M1311.1 318.8l-2.3 0.2M1314.3 314.2l1.3 3.5M1304.1 322.4l-3.1 1.6M1314.3 311.8l1.5 3.3M1301.1 320.0l2.4 2.4M1306.8 318.9l1.6 1.1M1299.2 323.6l2.6 0.5M1309.0 321.6l-0.5 3.1M1298.5 327.4l1.7 1.3M1306.7 316.1l-2.8 1.8M1310.4 316.7l1.5 0.9M1299.2 325.0l2.0 1.8M1313.9 320.8l-1.4 1.5"/>
<path d="M1196.3 383.8l-0.7 1.3M1191.8 381.9l2.0 0.1M1194.6 379.5l-3.3 0.8M1191.6 382.8l2.4 1.6M1188.7 385.2l0.2 3.0M1196.0 383.8l-3.2 1.1M1188.1 384.6l-1.4 1.8M1187.7 386.7l1.2 0.4M1187.1 382.9l1.7 1.5M1194.5 381.2l0.7 2.1M1190.3 381.5l-2.1 0.8M1194.2 380.9l0.5 2.7M1194.0 380.0l-1.0 1.7M1191.6 379.1l2.2 2.8M1194.2 381.9l1.6 2.2M1188.1 381.8l-0.7 1.4M1188.4 387.0l0.9 1.9M1195.1 384.0l-0.7 1.4M1194.2 380.7l-1.5 0.3M1187.8 380.4l1.4 2.0M1190.2 381.6l-2.4 2.6M1192.1 381.5l-2.3 1.6M1191.2 379.7l-0.5 2.9M1188.8 385.8l-0.8 2.5M1196.0 383.9l-3.5 0.6M1192.5 377.4l-1.9 2.4M1191.6 381.8l0.8 2.0M1189.0 380.9l-2.2 1.5M1195.9 378.9l-3.6 0.4M1188.2 385.5l-1.4 3.2M1192.5 384.8l1.5 1.5M1191.4 383.7l1.1 1.2"/>
<path d="M1358.7 355.6l-3.1 1.3M1362.9 355.5l0.8 2.5M1359.8 353.1l-0.6 3.6M1368.5 352.8l2.1 0.8M1367.7 357.9l-1.1 2.8M1366.1 356.4l3.1 2.0M1369.9 352.3l1.0 3.2M1359.0 356.2l-1.2 3.1M1364.1 357.5l-3.1 0.9M1366.8 356.5l-2.2 0.9M1361.6 355.3l1.5 3.3M1361.2 359.0l1.4 0.9M1363.3 354.8l-1.4 1.3M1363.9 349.8l0.9 1.8M1361.9 357.3l0.9 1.7M1364.6 358.0l1.1 2.7M1368.6 355.2l-2.5 1.5M1364.0 353.2l-1.4 0.2M1359.0 354.6l1.1 3.3M1369.9 352.5l-1.8 0.4M1364.4 352.9l-0.6 3.4M1361.9 357.1l1.5 0.4M1363.5 355.6l3.3 0.3M1362.2 360.0l1.3 1.7M1364.9 348.7l0.2 1.6M1368.5 354.2l2.6 2.0M1359.7 354.5l2.0 1.2M1367.4 349.6l0.5 2.5M1366.3 349.7l0.8 1.4M1370.3 352.9l-0.0 2.1M1364.8 352.8l1.3 2.7M1358.6 354.8l3.2 2.0"/>
<path d="M1296.2 389.9l0.7 2.3M1299.9 392.1l-1.6 0.8M1301.9 391.5l-1.2 1.7M1299.1 387.1l-2.0 0.9M1299.7 390.9l-0.5 1.9M1300.1 388.4l-2.3 0.8M1301.5 387.2l1.4 0.2M1298.6 387.6l-0.2 1.6M1295.8 391.3l-2.9 0.8M1295.5 390.7l-1.7 0.3M1301.6 392.8l-2.1 1.8M1297.6 387.8l1.3 0.6M1301.3 392.1l0.9 3.3M1298.8 391.8l3.6 0.6"/>
<path d="M1377.1 606.8 L1394.8 609.5 L1381.2 647.5 L1360.8 640.7 Z"/>
<path d="M1352.7 648.8 L1371.7 654.2 L1363.6 670.5 L1350.0 667.8"/>
<path d="M1407.0 625.8 L1455.8 639.3"/>
<path d="M1431.4 635.3 L1455.8 640.7 L1450.4 654.2 L1431.4 648.8 Z"/>
<path d="M1423.2 648.8 L1450.4 655.6 L1443.6 665.1 L1444.9 666.4 L1436.8 697.6 L1411.0 686.8 L1409.7 678.7 L1415.1 657.0 Z"/>
<path d="M1389.3 681.4 L1416.4 689.5 L1408.3 718.0 L1381.2 708.5 Z"/>
<path d="M1427.3 694.9 L1436.8 697.6 L1431.4 715.3 L1424.6 712.6 Z"/>
<path d="M1463.9 651.5 L1482.9 657.0 L1480.2 659.7 L1466.6 657.0 L1461.2 678.7 L1453.1 700.4 L1442.2 747.8 L1472.1 757.3"/>
<path d="M1382.5 720.7 L1393.4 723.4 L1389.3 730.2 L1381.2 727.5 Z"/>
<path d="M1370.3 741.0 L1378.5 743.7 L1375.8 750.5 L1367.6 747.8 Z"/>
<path d="M1396.1 726.1 L1416.4 731.5 L1407.0 762.7 L1388.0 757.3 Z"/>
<path d="M1412.4 760.0 L1469.3 784.4"/>
<path d="M1463.9 781.7 L1489.7 784.4 L1482.9 817.0 L1463.9 812.9 Z"/>
<path d="M1382.5 762.7 L1397.5 766.8 L1386.6 789.9"/>
<path d="M1396.1 800.7 L1411.0 808.8 L1398.8 833.3 L1381.2 825.1 Z"/>
<path d="M1415.1 800.7 L1428.7 804.8 L1446.3 822.4 L1443.6 830.5 L1413.7 817.0 Z"/>
<path d="M1439.5 791.2 L1457.1 799.3 L1446.3 818.3 L1432.7 811.6 Z"/>
<path d="M1350.0 735.6 L1417.8 762.7"/>
<path d="M1350.0 773.6 L1385.3 789.9"/>
<path d="M1512.7 632.5 L1469.3 784.4"/>
<path d="M1501.9 632.5 L1458.5 819.7"/>
<path d="M1518.2 632.5 L1569.7 643.4"/>
<path d="M1510.0 624.4 L1577.8 619.0"/>
<text x="1371.7" y="627.1" font-size="6">民房</text>
<text x="1428.7" y="623.1" font-size="6">民房</text>
<text x="1393.4" y="701.7" font-size="6">民房</text>
<text x="1470.7" y="690.9" font-size="6">民房</text>
<text x="1485.6" y="642.0" font-size="6">民房</text>
<text x="1360.8" y="727.5" font-size="6">民房</text>
<text x="1393.4" y="747.8" font-size="6">民房</text>
<text x="1379.8" y="779.0" font-size="6">民房</text>
<text x="1436.8" y="808.8" font-size="6">民房</text>
<text x="1470.7" y="800.7" font-size="6">民房</text>
<text x="1488.3" y="833.3" font-size="6">民房</text>
<text x="1523.6" y="783.1" font-size="6">民房</text>
<path d="M1383.3 645.4l0.9 2.3M1389.1 639.2l-0.6 2.3M1385.7 649.8l2.5 1.1M1385.9 649.0l2.0 2.1M1387.4 645.3l-0.3 2.3M1394.0 642.7l1.4 0.2M1389.9 645.4l-2.0 2.2M1385.5 645.9l-0.3 1.5M1387.4 637.2l-0.1 2.4M1390.2 646.5l-1.7 2.2M1388.8 645.2l-0.9 1.7M1384.6 641.5l-2.3 0.5M1391.8 645.6l0.5 2.2M1380.3 649.4l1.1 2.4M1391.4 641.1l2.3 2.5M1389.9 637.6l-2.1 0.9M1381.7 649.7l-0.4 2.7M1389.7 639.4l-1.4 0.4M1381.8 652.1l2.5 1.1M1381.5 646.7l1.2 2.3M1382.9 649.6l-0.7 1.8M1395.9 636.3l3.6 0.4M1387.1 645.1l-2.5 2.2M1394.3 644.0l-3.6 0.8M1387.7 641.1l1.4 2.5M1392.6 641.4l1.9 0.4M1388.2 646.8l-0.9 2.9M1396.6 638.6l-1.4 1.3M1394.3 643.3l-1.1 1.6M1394.3 636.5l-0.6 2.1M1389.8 646.7l-1.0 3.3M1390.9 634.9l-3.4 1.1M1385.4 649.8l-1.5 2.4M1385.2 651.2l1.0 2.2M1378.0 647.4l-2.0 0.3M1393.2 634.8l-1.5 1.8M1387.3 636.9l-0.8 2.3M1385.5 647.5l1.7 0.9M1382.0 650.5l3.3 1.2M1394.0 634.4l-1.2 0.4M1392.7 643.0l-2.2 1.7M1385.1 650.4l-1.6 1.4M1384.7 643.5l-0.9 1.1M1392.7 639.4l0.4 2.3M1385.1 643.8l0.1 1.5M1384.5 647.0l0.2 1.3M1387.3 643.4l0.7 1.2M1389.8 647.2l1.1 0.9M1382.4 647.2l-0.6 2.3M1393.7 640.9l-3.5 1.3M1392.4 635.7l2.5 1.7M1397.8 640.1l-1.4 1.3M1388.4 644.4l-1.4 2.3M1388.7 638.6l0.2 2.4M1379.1 646.3l-1.1 2.1M1390.2 647.7l-2.5 0.9M1391.9 644.2l-2.8 0.2M1384.7 640.3l-1.0 1.0M1382.4 643.7l-2.6 1.2M1385.8 638.3l2.6 2.4M1381.0 647.5l1.0 1.2M1383.5 650.7l0.2 1.9M1392.6 638.8l-0.7 1.4M1378.5 648.7l3.4 0.5M1383.8 641.5l-1.4 1.3M1393.6 640.3l-1.3 0.9M1390.4 637.1l-3.2 0.6M1378.2 648.1l-2.6 0.7M1387.5 645.6l2.4 0.7M1390.3 648.5l2.8 0.0"/>
<path d="M1416.6 681.1l-0.3 3.1M1415.5 684.2l-0.3 1.4M1418.3 681.9l0.0 1.8M1416.2 680.5l-1.1 1.3M1413.2 681.7l-0.4 1.3M1413.3 682.5l2.3 2.5M1420.0 680.9l0.3 1.7M1418.4 685.3l-2.4 1.0M1420.8 680.1l-0.9 1.0M1423.0 682.5l-2.0 2.6M1417.2 678.4l1.6 1.6M1418.2 680.3l2.8 0.0M1417.2 680.4l-0.9 2.6M1420.4 681.7l-3.2 0.3M1419.4 676.2l-1.3 1.4M1419.9 676.9l1.0 2.3M1414.3 685.1l-1.6 0.5M1414.1 680.9l1.9 1.9M1413.9 684.8l-1.6 1.2M1418.2 678.8l-1.2 1.7M1412.6 680.7l2.0 2.2M1420.3 675.5l-1.3 1.0M1421.1 679.2l2.3 2.4M1420.2 679.2l1.2 2.8M1418.5 685.1l-2.7 0.5M1419.4 676.9l0.5 2.2"/>
<path d="M1426.3 738.0l-1.5 0.9M1420.9 738.1l-0.6 1.2M1434.9 735.7l1.7 1.5M1432.4 732.7l-0.3 2.4M1430.6 740.5l1.8 1.9M1423.9 741.0l1.5 0.4M1430.4 739.6l-0.2 1.3M1432.0 739.5l-1.2 0.6M1430.3 732.9l-1.5 1.9M1421.9 740.7l2.2 2.2M1426.5 738.9l0.2 1.2M1420.8 740.9l-1.7 1.7M1422.1 738.4l-1.4 2.1M1421.4 741.2l-2.4 0.1M1436.7 738.2l1.8 0.2M1432.3 732.0l1.9 1.0M1431.9 735.3l2.5 1.0M1428.1 738.5l3.0 0.6M1426.1 736.5l-1.9 1.4M1428.8 734.3l1.6 2.1M1431.2 740.2l1.4 2.4M1429.5 733.4l1.9 2.2M1423.2 744.6l-0.3 2.2M1428.9 741.3l1.5 1.8M1430.0 736.0l0.2 3.5M1434.9 738.7l-0.1 2.3M1425.5 743.7l3.0 0.3M1430.7 739.2l1.5 0.0M1427.9 736.5l2.5 2.4M1425.0 737.4l1.6 1.1M1426.9 741.2l2.7 0.5M1431.0 738.4l-0.3 1.3M1428.2 736.8l-0.2 3.0M1428.5 739.2l-0.5 3.6M1432.1 737.6l-0.3 1.5M1423.2 742.7l1.0 1.7M1424.3 738.5l0.4 1.5M1425.4 738.9l3.3 1.3M1435.9 735.1l-3.0 0.3"/>
<path d="M1512.0 666.7l-2.8 1.6M1505.6 671.0l0.5 2.5M1510.3 669.7l2.2 1.7M1517.5 668.6l-0.6 3.2M1512.9 663.1l-0.8 2.8M1501.7 672.4l-3.4 0.9M1509.8 675.9l1.1 2.8M1507.6 668.6l-2.6 0.6M1507.4 667.8l2.2 2.1M1516.3 667.1l-3.0 1.4M1510.9 668.4l0.2 1.7M1512.8 666.3l-1.6 0.9M1502.9 672.7l-0.9 2.7M1515.3 664.5l-1.3 0.6M1505.3 676.5l0.2 1.8M1510.6 669.8l-1.3 1.9M1508.7 672.4l-0.3 2.1M1509.8 673.4l0.8 2.3M1503.9 673.1l-2.2 2.7M1509.7 669.1l-1.0 3.1M1513.8 662.5l2.3 0.5M1504.4 675.6l0.5 1.2M1505.5 674.5l-1.8 0.6M1509.2 672.5l-2.6 1.0M1512.4 666.9l2.4 2.4M1509.8 666.8l-1.0 1.1M1514.6 668.7l-2.1 0.9M1509.1 675.8l2.5 0.2M1505.5 670.1l3.0 2.3M1507.3 677.4l1.5 2.6M1506.0 668.8l-0.6 1.4M1502.6 673.0l-1.9 0.6M1510.1 668.9l0.6 1.3M1505.4 677.4l2.4 2.7M1506.5 677.2l-2.9 1.7M1507.9 667.7l-2.3 2.3M1508.0 675.1l2.7 0.3M1501.8 673.4l0.4 3.5M1515.5 668.4l3.6 0.6"/>
<path d="M1502.8 735.9l-0.1 2.1M1505.2 735.2l2.7 2.2M1507.0 728.6l-0.3 3.4M1502.5 730.0l-0.5 1.6M1505.2 728.7l-0.3 2.0M1508.3 734.7l-1.5 1.6M1505.5 733.7l1.8 1.8M1502.8 730.6l-1.0 1.4M1508.1 734.5l-0.9 3.3M1504.8 731.8l0.2 3.3M1507.2 731.0l-0.5 1.9M1502.1 735.4l1.8 0.8M1501.6 736.5l1.3 0.9M1499.9 735.3l-2.3 0.6M1504.4 732.5l2.7 2.1M1505.9 730.7l-0.8 3.3M1503.8 729.7l1.4 0.0M1505.2 737.1l-0.4 1.7M1505.8 733.1l-2.4 2.0M1504.9 730.2l1.2 1.1M1501.8 733.4l0.4 1.6M1507.6 733.7l-0.3 2.3M1503.7 736.8l1.6 0.8M1504.7 736.0l-0.2 1.7M1503.0 738.2l-3.5 0.5M1507.2 731.0l-1.6 0.9"/>
<path d="M1398.4 799.0l-0.3 3.2M1400.2 793.9l-2.7 1.2M1398.4 794.7l-0.5 2.2M1400.3 796.4l-2.4 1.3M1400.3 799.6l0.5 1.4M1397.5 796.6l3.5 0.1M1398.5 793.2l-2.2 2.3M1396.8 797.3l-1.0 2.3M1402.4 796.6l1.3 0.3M1404.6 791.3l0.1 2.4M1400.2 800.2l2.3 2.3M1401.9 794.3l2.1 2.6M1403.9 798.4l-1.5 1.4M1405.7 795.5l-1.7 1.4M1399.8 794.1l-1.0 1.2M1402.1 791.8l2.6 0.3M1399.7 797.8l-3.4 1.2M1403.7 793.4l-1.8 0.7M1400.6 793.2l-2.7 1.0M1402.7 790.0l0.2 1.4M1406.9 793.8l1.2 0.7M1402.7 796.2l1.6 0.5M1403.0 792.6l0.8 1.5M1400.2 796.1l2.4 1.8M1402.6 796.5l-1.0 3.2M1399.8 800.7l-1.9 1.4"/>
<path d="M1364.7 707.7l-3.2 1.7M1370.8 706.6l3.5 1.1M1368.8 703.8l3.2 1.4M1366.8 709.0l1.3 0.4M1370.1 712.3l-1.5 1.7M1369.7 711.6l1.7 1.3M1371.6 707.2l-1.2 1.5M1368.5 708.2l0.4 1.9M1369.4 704.1l-0.3 2.1M1366.6 711.9l-2.7 0.9M1367.8 707.7l1.1 1.2M1372.2 707.3l2.2 1.9M1367.1 704.8l-2.1 2.0M1364.3 709.9l-2.1 0.6M1370.4 707.6l-0.2 1.3M1371.4 705.8l-1.3 2.4M1366.9 708.7l2.0 0.0M1365.2 711.5l0.8 1.7M1370.4 708.7l1.3 0.0M1368.2 706.3l-0.8 2.5M1367.6 714.7l2.6 1.2M1369.7 710.5l-1.5 2.6M1366.9 706.4l2.7 1.1M1366.7 710.3l-0.1 3.4M1368.9 713.3l-1.8 3.3M1367.9 704.7l-1.6 0.3"/>
<path d="M1472.2 777.9l2.7 2.4M1475.1 781.6l-0.8 1.3M1473.5 779.9l0.1 1.6M1473.8 774.4l-1.9 1.0M1469.8 777.6l0.9 1.6M1474.8 775.6l3.5 0.5M1473.9 778.2l0.0 1.3M1466.9 780.2l-2.5 1.7M1470.5 776.7l-1.9 0.2M1473.9 776.4l2.4 0.0M1472.8 779.3l0.3 1.3M1477.6 778.7l-3.0 1.2M1473.8 777.1l1.5 1.7M1470.2 784.0l1.2 1.5M1473.1 779.9l-2.0 2.9M1474.2 777.9l-2.7 0.9M1475.9 775.7l2.4 0.6M1476.5 777.5l0.1 2.6M1470.9 784.9l1.6 1.5M1467.6 777.5l2.6 0.3M1468.7 776.6l2.9 1.2M1469.3 783.4l0.9 2.5M1472.6 776.4l-1.2 1.4M1472.2 779.3l0.9 2.4M1474.7 777.3l1.5 0.6M1471.8 780.3l-0.5 1.5"/></g></svg></div>
<div class="a" style="left:929px;top:929px;width:387px;height:37px;background:#646464;border:1px solid #8a8a8a"></div>
<svg class="a" style="left:938px;top:938px" width="18" height="19" viewBox="0 0 18 19"><rect x="1" y="1.5" width="7" height="7" rx="2.5" fill="none" stroke="#ddd" stroke-width="1.3"/><rect x="10" y="1" width="7" height="7" rx="1.5" transform="rotate(45 13.5 4.5)" fill="none" stroke="#ddd" stroke-width="1.3"/><rect x="1" y="10.5" width="7" height="7" rx="2" fill="none" stroke="#ddd" stroke-width="1.3"/><rect x="10" y="10.5" width="7" height="7" rx="2" fill="none" stroke="#ddd" stroke-width="1.3"/></svg>
<div class="a" style="left:967px;top:937px;width:1px;height:21px;background:#777"></div>
<div class="a" style="left:970px;top:940px;font-size:12px;line-height:15px;color:#f0f0f0;white-space:nowrap">标注分类</div>
<div class="a" style="left:1025px;top:933px;width:151px;height:28px;background:#616161;border:1px solid #111"></div>
<div class="a" style="left:1031px;top:940px;width:14px;height:14px;background:#e8530c;border:1px solid #222"></div>
<div class="a" style="left:1049px;top:940px;font-size:12px;line-height:15px;color:#f0f0f0;white-space:nowrap">未分类</div>
<svg class="a" style="left:1161px;top:944px" width="10" height="6" viewBox="0 0 10 6"><path d="M0 0h10L5 6Z" fill="#f0f0f0"/></svg>
<div class="a" style="left:1178px;top:937px;width:1px;height:21px;background:#777"></div>
<svg class="a" style="left:1188px;top:938px" width="20" height="20" viewBox="0 0 20 20"><path d="M12 4H2.5v14h13V9" fill="none" stroke="#ddd" stroke-width="1.3"/><path d="M1 6v13.5h14" fill="none" stroke="#ddd" stroke-width="1.1"/><path d="M8 13l1-3 8-8 2 2-8 8Z" fill="none" stroke="#ddd" stroke-width="1.3"/></svg>
<svg class="a" style="left:1222px;top:938px" width="19" height="19" viewBox="0 0 19 19"><path d="M9.5 1v17M1 9.5h17M6.5 4l3-3 3 3M6.5 15l3 3 3-3M4 6.5l-3 3 3 3M15 6.5l3 3-3 3" fill="none" stroke="#ddd" stroke-width="1.4"/></svg>
<svg class="a" style="left:1255px;top:939px" width="18" height="18" viewBox="0 0 18 18"><rect x="1" y="5" width="11" height="12" rx="2" fill="none" stroke="#ddd" stroke-width="1.3"/><path d="M5 5V3a2 2 0 0 1 2-2h8a2 2 0 0 1 2 2v8a2 2 0 0 1-2 2h-3" fill="none" stroke="#ddd" stroke-width="1.3"/></svg>
<svg class="a" style="left:1288px;top:938px" width="19" height="20" viewBox="0 0 19 20"><path d="M1.5 4.5h10v4M1.5 4.5v13h7" fill="none" stroke="#ddd" stroke-width="1.3"/><rect x="4" y="1.5" width="5" height="4" rx="1" fill="none" stroke="#ddd" stroke-width="1.2"/><rect x="8.5" y="9" width="9" height="9.5" rx="1" fill="none" stroke="#ddd" stroke-width="1.3"/></svg>
<div id="lay" class="a"></div>
<div class="a" style="left:325px;top:982px;width:1px;height:21px;background:#000"></div>
<div class="a" style="left:1918px;top:982px;width:1px;height:21px;background:#000"></div>
<div class="a" style="left:325px;top:1001px;width:1594px;height:2px;background:#000"></div>
<svg class="a" style="left:325px;top:982px" width="210" height="21" viewBox="0 0 210 21">
<path d="M1 0H68L63 17Q62 19.5 59 19.5H11Q8 19.5 7 17Z" fill="#000"/>
<path d="M74 1L69 14Q68 19.5 74 19.5H128Q132 19.5 134 14L137 1" fill="#fff" stroke="#000" stroke-width="1"/>
<path d="M137 1L141 14Q143 19.5 148 19.5H190Q194 19.5 196 14L200 1" fill="#fff" stroke="#000" stroke-width="1"/>
</svg>
<div class="a" style="left:348px;top:985px;font-size:12px;line-height:15px;color:#fff">模型</div>
<div class="a" style="left:405px;top:984px;font-size:12.5px;line-height:16px;color:#000">Layout1</div>
<div class="a" style="left:469px;top:984px;font-size:12.5px;line-height:16px;color:#000">Layout2</div>
<div id="sb" class="a"></div>
<div class="a" style="left:7px;top:1011px;font-family:'Liberation Mono',monospace;font-size:10.2px;line-height:14px;color:#111;white-space:pre">x = 12 y = 7</div>
<div class="a" style="left:325px;top:1005px;width:1px;height:24px;background:#d2cfca"></div>
<div class="a" style="left:491px;top:1005px;width:1px;height:24px;background:#d2cfca"></div>
<div class="a" style="left:1784px;top:1005px;width:1px;height:24px;background:#d2cfca"></div>
<div class="a" style="left:1818px;top:1005px;width:1px;height:24px;background:#d2cfca"></div>
<div class="a" style="left:1852px;top:1005px;width:1px;height:24px;background:#d2cfca"></div>
<div class="a" style="left:1886px;top:1005px;width:1px;height:24px;background:#d2cfca"></div>
<div class="a" style="left:496px;top:1011px;font-size:12px;line-height:15px;color:#111;white-space:nowrap">模型中的标注比例:1</div>
<svg class="a" style="left:1795px;top:1010px" width="16" height="16" viewBox="0 0 16 16"><path d="M4 1h8a2 2 0 0 1 2 2v10a2 2 0 0 1-2 2H3a2 2 0 0 1-2-2V4Z" fill="none" stroke="#c9962a" stroke-width="1.3"/><text x="7.5" y="9" font-size="5.5" fill="#c9962a" text-anchor="middle" font-family="Liberation Sans">PDF</text><path d="M8 12h6M12 10.5l2 1.5-2 1.5" fill="none" stroke="#c9962a" stroke-width="1"/></svg>
<svg class="a" style="left:1829px;top:1010px" width="16" height="16" viewBox="0 0 16 16"><path d="M1 3v12h11M3 3v10h10V9" fill="none" stroke="#d99a1a" stroke-width="1.2"/><text x="10" y="5" font-size="5" font-weight="bold" fill="#d99a1a" text-anchor="middle" font-family="Liberation Sans">PDF</text><path d="M5 11c1-3 3-4 6-4M10 5.5l2 1.5-2 1.5" fill="none" stroke="#d99a1a" stroke-width="1.2"/></svg>
<svg class="a" style="left:1863px;top:1010px" width="16" height="16" viewBox="0 0 16 16"><rect x="0" y="0" width="16" height="16" rx="3" fill="#0e9be2"/><path d="M2.5 12V4h2.5a2 2 0 0 1 0 4H2.5M6.5 8h3M8 6.5l1.5 1.5L8 9.5M10.5 4h2a2 3 0 0 1 2 3v2a2 3 0 0 1-2 3h-2Z" fill="none" stroke="#fff" stroke-width="1"/></svg>
<svg class="a" style="left:1898px;top:1011px" width="14" height="14" viewBox="0 0 14 14"><rect x="0.7" y="0.7" width="12.6" height="12.6" rx="1" fill="none" stroke="#3a9ad8" stroke-width="1.2"/><path d="M3 10h8" stroke="#3a9ad8" stroke-width="1.6"/></svg>
</body></html>
